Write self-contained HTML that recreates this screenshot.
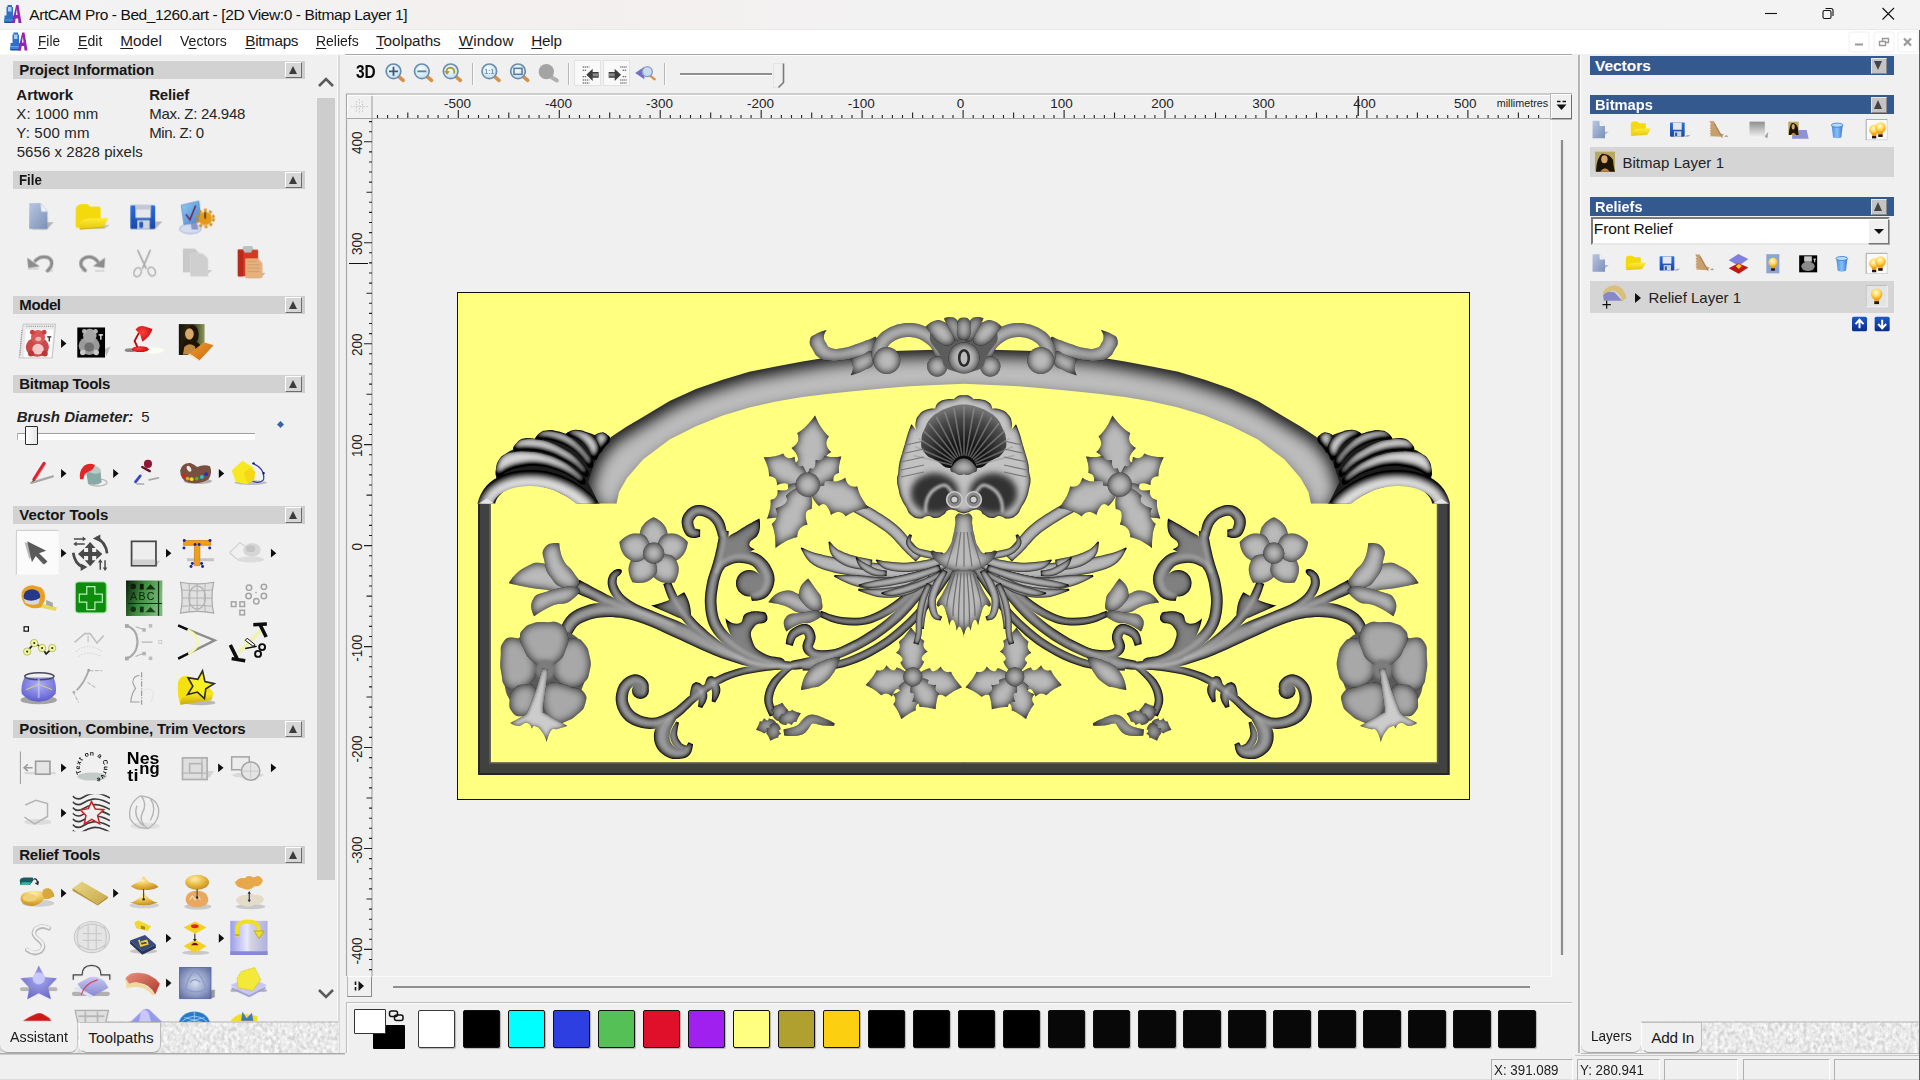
<!DOCTYPE html>
<html lang="en"><head><meta charset="utf-8"><title>ArtCAM Pro - Bed_1260.art</title>
<style>
*{box-sizing:border-box;margin:0;padding:0}
html,body{width:1920px;height:1080px;overflow:hidden;background:#f0f0f0}
body{position:relative;font-family:"Liberation Sans",sans-serif;font-size:14.5px;color:#1a1a1a}
.a{position:absolute}
.t{position:absolute;white-space:nowrap;line-height:1}
svg{position:absolute;overflow:visible}
#title{left:0;top:0;width:1920px;height:29px;background:linear-gradient(90deg,#f3f3f3 0,#f4efef 32%,#f3f2f2 45%,#f3f3f3 100%)}
#menubar{left:0;top:29px;width:1920px;height:25px;background:#fff;border-top:1px solid #e9e9e9}
.mi{position:absolute;top:34px;font-size:15px;line-height:1;color:#1b1b1b;white-space:nowrap}
.mi u{text-decoration:underline;text-underline-offset:2px;text-decoration-thickness:1px}
.hd{position:absolute;left:13px;width:292px;height:18px;background:#d2d2d2;border-right:3px solid #cdcdcd}
.hd b{position:absolute;left:6px;top:1px;font-size:14.5px;line-height:16px;font-weight:bold;color:#111;white-space:nowrap}
.hd i{position:absolute;left:272px;top:1px;width:17px;height:16px;background:#d6d6d6;border:1px solid;border-color:#fff #6d6d6d #6d6d6d #fff}
.hd i:after{content:"";position:absolute;left:3px;top:3px;border:4.5px solid transparent;border-top:0;border-bottom:8px solid #3c3c3c}
.rh{position:absolute;left:1590px;width:304px;height:19px;background:#34598e}
.rh b{position:absolute;left:4px;top:1px;font-size:15px;line-height:17px;font-weight:bold;color:#fff;white-space:nowrap}
.rh i{position:absolute;left:281px;top:1.500px;width:15.500px;height:16px;background:#c4c4c4;border:1px solid;border-color:#e8e8e8 #8a8a8a #8a8a8a #e8e8e8}
.rh i:after{content:"";position:absolute;left:2px;top:2.500px;border:4.800px solid transparent;border-top:0;border-bottom:9px solid #444}
.rh i.dn:after{border:4.800px solid transparent;border-bottom:0;border-top:9px solid #444}
.pi{position:absolute;font-size:14.5px;line-height:1;color:#222;white-space:nowrap}
.arr{position:absolute;width:0;height:0;border:3.5px solid transparent;border-right:0;border-left:4px solid #111}
.r{filter:url(#rf)}
.lobe{filter:url(#rl)}
.lip{filter:url(#rp)}
.sil{fill:#1c1c1c}
.arch{filter:url(#ra)}
.s{filter:url(#rs)}
.disc{filter:url(#rf);}
.pal{filter:url(#rpal)}
.fan{fill:url(#gfan)}
.chan{fill:none;stroke:#2c2c2c;stroke-linecap:round;filter:url(#blr)}
.bk{fill:#5c5c5c}
.vol{fill:#303030;filter:url(#blr2)}
.ridge{fill:none;stroke:#b4b4b4;stroke-width:3.200;stroke-linecap:round;filter:url(#blr1)}
.rt{filter:url(#rt)}
.bk2{fill:#5a5a5a}
.hl{fill:#fff;opacity:.2;filter:url(#blr1)}
.hib{filter:url(#rh)}
.pst{filter:url(#rpst)}

</style></head>
<body>
<!-- chrome.html -->
<div id="title" class="a"></div>
<svg class="a" style="left:2.5px;top:3px" width="19" height="22" viewBox="0 0 19 21"><path d="M4.500 1.500h4.500v2h1v8.500h2v3.500h-10.500v-3.500h2v-8.500h1z" fill="#2f6fc6"/><path d="M5 3.500h3.500v4.500h-3.500z" fill="#a8cdf2"/><path d="M1 15.500h11v3.500h-11z" fill="#3c86d8"/><path d="M1.500 18h10v1.500h-10z" fill="#1d4f9c"/>
 <path d="M9 19.500L13.200 1.500h2.300l3 18h-3l-.4-4.500h-2.400l-.9 4.500z" fill="#9326ad"/><path d="M12.900 11.500l.9-6 .8 6z" fill="#f3f3f3"/></svg>
<div class="t" style="left:29.20px;top:6.88px;font-size:15.50px;letter-spacing:-0.400px;color:#111;">ArtCAM Pro - Bed_1260.art - [2D View:0 - Bitmap Layer 1]</div>
<svg class="a" style="left:1760px;top:4px" width="150" height="22" viewBox="0 0 150 22" fill="none" stroke="#111" stroke-width="1.1">
 <path d="M5 9.500h12"/>
 <rect x="63" y="6.500" width="8" height="8" rx="1.500"/><path d="M65.500 4.500h5.500a2 2 0 0 1 2 2v5.500"/>
 <path d="M122.500 4l11.500 11.500M134 4l-11.500 11.500"/>
</svg>
<div id="menubar" class="a"></div>
<svg class="a" style="left:9px;top:31px" width="19" height="21" viewBox="0 0 19 21"><path d="M4.500 1.500h4.500v2h1v8.500h2v3.500h-10.500v-3.500h2v-8.500h1z" fill="#2f6fc6"/><path d="M5 3.500h3.500v4.500h-3.500z" fill="#a8cdf2"/><path d="M1 15.500h11v3.500h-11z" fill="#3c86d8"/><path d="M1.500 18h10v1.500h-10z" fill="#1d4f9c"/>
 <path d="M9 19.500L13.200 1.500h2.300l3 18h-3l-.4-4.500h-2.400l-.9 4.500z" fill="#9326ad"/><path d="M12.900 11.500l.9-6 .8 6z" fill="#fff"/></svg>
<div class="t" style="left:38.00px;top:33.35px;font-size:15.30px;transform:scaleX(0.8923);transform-origin:0 0;color:#1b1b1b;text-underline-offset:2px;"><u>F</u>ile</div>
<div class="t" style="left:77.70px;top:33.35px;font-size:15.30px;transform:scaleX(0.9217);transform-origin:0 0;color:#1b1b1b;text-underline-offset:2px;"><u>E</u>dit</div>
<div class="t" style="left:120.30px;top:33.35px;font-size:15.30px;letter-spacing:0.007px;color:#1b1b1b;text-underline-offset:2px;"><u>M</u>odel</div>
<div class="t" style="left:180.30px;top:33.35px;font-size:15.30px;transform:scaleX(0.9191);transform-origin:0 0;color:#1b1b1b;text-underline-offset:2px;">V<u>e</u>ctors</div>
<div class="t" style="left:245.30px;top:33.35px;font-size:15.30px;letter-spacing:-0.345px;color:#1b1b1b;text-underline-offset:2px;"><u>B</u>itmaps</div>
<div class="t" style="left:316.00px;top:33.35px;font-size:15.30px;transform:scaleX(0.9130);transform-origin:0 0;color:#1b1b1b;text-underline-offset:2px;"><u>R</u>eliefs</div>
<div class="t" style="left:376.00px;top:33.35px;font-size:15.30px;letter-spacing:-0.100px;color:#1b1b1b;text-underline-offset:2px;"><u>T</u>oolpaths</div>
<div class="t" style="left:458.70px;top:33.35px;font-size:15.30px;letter-spacing:0.076px;color:#1b1b1b;text-underline-offset:2px;"><u>W</u>indow</div>
<div class="t" style="left:531.30px;top:33.35px;font-size:15.30px;letter-spacing:-0.256px;color:#1b1b1b;text-underline-offset:2px;"><u>H</u>elp</div>
<svg class="a" style="left:1848px;top:31px" width="72" height="22" viewBox="0 0 72 22">
 <rect x="1" y="1" width="20" height="20" rx="2" fill="#fff" stroke="#f0f0f0"/><rect x="26" y="1" width="20" height="20" rx="2" fill="#fff" stroke="#f0f0f0"/><rect x="50" y="1" width="20" height="20" rx="2" fill="#fff" stroke="#f0f0f0"/>
 <path d="M7 13.500h8" stroke="#9a9a9a" stroke-width="2"/>
 <path d="M31.500 10.500h6v4h-6zM34.500 10v-2.500h6v4H38" fill="none" stroke="#9a9a9a" stroke-width="1.400"/>
 <path d="M56 7.500l7 7M63 7.500l-7 7" stroke="#9a9a9a" stroke-width="2.200"/>
</svg>

<!-- left.html -->
<div class="a" style="left:0px;top:54px;width:340px;height:1004px;background:#f0f0f0;"></div>
<div class="a" style="left:0px;top:54px;width:1920px;height:1px;background:#f7f7f7;"></div>
<div class="a" style="left:337px;top:55px;width:1px;height:998px;background:#fafafa;"></div>
<div class="a" style="left:338px;top:55px;width:2px;height:998px;background:#d9d9d9;"></div>
<div class="a" style="left:340px;top:55px;width:5px;height:998px;background:#f0f0f0;"></div>
<div class="hd" style="top:61px"><i></i></div>
<div class="t" style="left:19.30px;top:62.00px;font-size:15.00px;letter-spacing:-0.145px;font-weight:bold;color:#151515;">Project Information</div>
<div class="hd" style="top:171px"><i></i></div>
<div class="t" style="left:19.30px;top:172.00px;font-size:15.00px;transform:scaleX(0.8862);transform-origin:0 0;font-weight:bold;color:#151515;">File</div>
<div class="hd" style="top:296px"><i></i></div>
<div class="t" style="left:19.30px;top:297.00px;font-size:15.00px;letter-spacing:-0.408px;font-weight:bold;color:#151515;">Model</div>
<div class="hd" style="top:375px"><i></i></div>
<div class="t" style="left:19.30px;top:376.00px;font-size:15.00px;letter-spacing:-0.263px;font-weight:bold;color:#151515;">Bitmap Tools</div>
<div class="hd" style="top:506px"><i></i></div>
<div class="t" style="left:19.30px;top:507.00px;font-size:15.00px;letter-spacing:0.008px;font-weight:bold;color:#151515;">Vector Tools</div>
<div class="hd" style="top:720px"><i></i></div>
<div class="t" style="left:19.30px;top:721.00px;font-size:15.00px;letter-spacing:-0.122px;font-weight:bold;color:#151515;">Position, Combine, Trim Vectors</div>
<div class="hd" style="top:846px"><i></i></div>
<div class="t" style="left:19.30px;top:847.00px;font-size:15.00px;letter-spacing:-0.264px;font-weight:bold;color:#151515;">Relief Tools</div>
<div class="t" style="left:16.30px;top:87.30px;font-size:15.00px;font-weight:bold;">Artwork</div>
<div class="t" style="left:149.20px;top:87.30px;font-size:15.00px;letter-spacing:-0.170px;font-weight:bold;">Relief</div>
<div class="t" style="left:16.30px;top:106.00px;font-size:15.00px;letter-spacing:0.126px;color:#252525;">X: 1000 mm</div>
<div class="t" style="left:149.20px;top:106.00px;font-size:15.00px;letter-spacing:-0.304px;color:#252525;">Max. Z: 24.948</div>
<div class="t" style="left:16.30px;top:124.80px;font-size:15.00px;letter-spacing:0.188px;color:#252525;">Y: 500 mm</div>
<div class="t" style="left:149.20px;top:124.80px;font-size:15.00px;letter-spacing:-0.418px;color:#252525;">Min. Z: 0</div>
<div class="t" style="left:16.70px;top:143.60px;font-size:15.00px;letter-spacing:0.059px;color:#252525;">5656 x 2828 pixels</div>
<div class="t" style="left:16.70px;top:409.00px;font-size:15.00px;letter-spacing:-0.007px;font-weight:bold;font-style:italic;color:#222;">Brush Diameter:</div>
<div class="t" style="left:141.30px;top:409.00px;font-size:15.00px;letter-spacing:0.057px;color:#222;">5</div>
<div class="a" style="left:16.500px;top:432.500px;width:238px;height:7px;background:#fff;border-top:1.500px solid #a0a0a0;border-left:1px solid #b5b5b5"></div>
<div class="a" style="left:25px;top:425.500px;width:12.500px;height:19.500px;background:linear-gradient(90deg,#fff,#e6e6e6);border:1.500px solid #2b2b2b;border-radius:1px"></div>
<svg class="a" style="left:276px;top:420px" width="9" height="9" viewBox="0 0 9 9"><path d="M4.500 1L8 4.500 4.500 8 1 4.500z" fill="#3465a8"/></svg>
<div class="a" style="left:317px;top:98px;width:18px;height:782px;background:#cdcdcd;"></div>
<svg class="a" style="left:316px;top:74px" width="20" height="16" viewBox="0 0 20 16"><path d="M3 12l7-7 7 7" fill="none" stroke="#5a5a5a" stroke-width="2.600"/></svg>
<svg class="a" style="left:316px;top:986px" width="20" height="16" viewBox="0 0 20 16"><path d="M3 4l7 7 7-7" fill="none" stroke="#5a5a5a" stroke-width="2.600"/></svg>

<!-- center.html -->
<div class="a" style="left:345px;top:54px;width:1230px;height:1000px;background:#f0f0f0;"></div>
<div class="a" style="left:345px;top:54px;width:1230px;height:1px;background:#a9a9a9;"></div>
<div class="a" style="left:345px;top:55px;width:1230px;height:1px;background:#fbfbfb;"></div>
<div class="t" style="left:355.80px;top:63.04px;font-size:18.50px;transform:scaleX(0.8330);transform-origin:0 0;font-weight:bold;color:#0a0a0a;">3D</div>
<div class="a" style="left:471.5px;top:63px;width:1px;height:22px;background:#b8b8b8;"></div>
<div class="a" style="left:472.5px;top:63px;width:1px;height:22px;background:#fcfcfc;"></div>
<div class="a" style="left:567.5px;top:63px;width:1px;height:22px;background:#b8b8b8;"></div>
<div class="a" style="left:568.5px;top:63px;width:1px;height:22px;background:#fcfcfc;"></div>
<div class="a" style="left:663.5px;top:63px;width:1px;height:22px;background:#b8b8b8;"></div>
<div class="a" style="left:664.5px;top:63px;width:1px;height:22px;background:#fcfcfc;"></div>
<div class="a" style="left:574px;top:60px;width:27px;height:26px;background:#f9f9f9;border:1px solid #e2e2e2"></div>
<div class="a" style="left:603px;top:60px;width:27px;height:26px;background:#f9f9f9;border:1px solid #e2e2e2"></div>
<div class="a" style="left:680px;top:73px;width:92px;height:2px;background:#8f8f8f;"></div>
<div class="a" style="left:680px;top:75px;width:92px;height:1px;background:#fdfdfd;"></div>
<svg class="a" style="left:771px;top:62px" width="16" height="27" viewBox="0 0 16 27"><path d="M2.500 1.500h10v19l-5 5h-5z" fill="#f0f0f0" stroke="#e4e4e4" stroke-width="1"/><path d="M12.500 1.500v19l-5 5" fill="none" stroke="#7a7a7a" stroke-width="1.600"/></svg>
<svg class="a" style="left:0;top:0" width="1920" height="1080" viewBox="0 0 1920 1080">
<path d="M346.500 118.500V94h1204.500M346.500 118.500h1204.500" fill="none" stroke="#a8a8a8" stroke-width="1.200"/>
<path d="M346.500 118.500V976M372 94V976" fill="none" stroke="#a8a8a8" stroke-width="1.200"/>
<path d="M347.700 95.500h1203M347.700 95.500V118" fill="none" stroke="#fff" stroke-width="1"/>
<path d="M377.5 115.0V118M387.6 115.0V118M397.7 115.0V118M407.8 112.5V118M417.9 115.0V118M428.0 115.0V118M438.1 115.0V118M448.2 115.0V118M458.3 110.0V118M468.4 115.0V118M478.5 115.0V118M488.6 115.0V118M498.7 115.0V118M508.8 112.5V118M518.9 115.0V118M529.0 115.0V118M539.1 115.0V118M549.2 115.0V118M559.3 110.0V118M569.4 115.0V118M579.5 115.0V118M589.5 115.0V118M599.6 115.0V118M609.7 112.5V118M619.8 115.0V118M629.9 115.0V118M640.0 115.0V118M650.1 115.0V118M660.2 110.0V118M670.3 115.0V118M680.4 115.0V118M690.5 115.0V118M700.6 115.0V118M710.7 112.5V118M720.8 115.0V118M730.9 115.0V118M741.0 115.0V118M751.1 115.0V118M761.2 110.0V118M771.3 115.0V118M781.4 115.0V118M791.5 115.0V118M801.6 115.0V118M811.7 112.5V118M821.8 115.0V118M831.9 115.0V118M841.9 115.0V118M852.0 115.0V118M862.1 110.0V118M872.2 115.0V118M882.3 115.0V118M892.4 115.0V118M902.5 115.0V118M912.6 112.5V118M922.7 115.0V118M932.8 115.0V118M942.9 115.0V118M953.0 115.0V118M963.1 110.0V118M973.2 115.0V118M983.3 115.0V118M993.4 115.0V118M1003.5 115.0V118M1013.6 112.5V118M1023.7 115.0V118M1033.8 115.0V118M1043.9 115.0V118M1054.0 115.0V118M1064.1 110.0V118M1074.2 115.0V118M1084.3 115.0V118M1094.3 115.0V118M1104.4 115.0V118M1114.5 112.5V118M1124.6 115.0V118M1134.7 115.0V118M1144.8 115.0V118M1154.9 115.0V118M1165.0 110.0V118M1175.1 115.0V118M1185.2 115.0V118M1195.3 115.0V118M1205.4 115.0V118M1215.5 112.5V118M1225.6 115.0V118M1235.7 115.0V118M1245.8 115.0V118M1255.9 115.0V118M1266.0 110.0V118M1276.1 115.0V118M1286.2 115.0V118M1296.3 115.0V118M1306.4 115.0V118M1316.5 112.5V118M1326.6 115.0V118M1336.7 115.0V118M1346.7 115.0V118M1356.8 115.0V118M1366.9 110.0V118M1377.0 115.0V118M1387.1 115.0V118M1397.2 115.0V118M1407.3 115.0V118M1417.4 112.5V118M1427.5 115.0V118M1437.6 115.0V118M1447.7 115.0V118M1457.8 115.0V118M1467.9 110.0V118M1478.0 115.0V118M1488.1 115.0V118M1498.2 115.0V118M1508.3 115.0V118M1518.4 112.5V118M1528.5 115.0V118M1538.6 115.0V118" stroke="#222" stroke-width="1.100" fill="none"/>
<path d="M369.0 969.6H372M369.0 959.5H372M364.0 949.4H372M369.0 939.3H372M369.0 929.2H372M369.0 919.2H372M369.0 909.1H372M366.5 899.0H372M369.0 888.9H372M369.0 878.8H372M369.0 868.7H372M369.0 858.6H372M364.0 848.5H372M369.0 838.4H372M369.0 828.3H372M369.0 818.2H372M369.0 808.1H372M366.5 798.0H372M369.0 787.9H372M369.0 777.8H372M369.0 767.7H372M369.0 757.6H372M364.0 747.5H372M369.0 737.4H372M369.0 727.3H372M369.0 717.2H372M369.0 707.1H372M366.5 697.0H372M369.0 686.9H372M369.0 676.8H372M369.0 666.8H372M369.0 656.7H372M364.0 646.6H372M369.0 636.5H372M369.0 626.4H372M369.0 616.3H372M369.0 606.2H372M366.5 596.1H372M369.0 586.0H372M369.0 575.9H372M369.0 565.8H372M369.0 555.7H372M364.0 545.6H372M369.0 535.5H372M369.0 525.4H372M369.0 515.3H372M369.0 505.2H372M366.5 495.1H372M369.0 485.0H372M369.0 474.9H372M369.0 464.8H372M369.0 454.7H372M364.0 444.6H372M369.0 434.5H372M369.0 424.4H372M369.0 414.4H372M369.0 404.3H372M366.5 394.2H372M369.0 384.1H372M369.0 374.0H372M369.0 363.9H372M369.0 353.8H372M364.0 343.7H372M369.0 333.6H372M369.0 323.5H372M369.0 313.4H372M369.0 303.3H372M366.5 293.2H372M369.0 283.1H372M369.0 273.0H372M369.0 262.9H372M369.0 252.8H372M364.0 242.7H372M369.0 232.6H372M369.0 222.5H372M369.0 212.4H372M369.0 202.3H372M366.5 192.2H372M369.0 182.1H372M369.0 172.0H372M369.0 162.0H372M369.0 151.9H372M364.0 141.8H372M369.0 131.7H372M369.0 121.6H372" stroke="#222" stroke-width="1.100" fill="none"/>
<path d="M349 263.500h19M1358.200 96v20" stroke="#111" stroke-width="1.200" fill="none"/>
<path d="M351 106.500h17M359.500 99v15M356.500 101v11M362.500 101v11" stroke="#c9c9c9" stroke-width="1" stroke-dasharray="1.500 1.500" fill="none"/>
<text x="444.0" y="107.500" font-size="13.500" textLength="27.0" lengthAdjust="spacingAndGlyphs" fill="#222">-500</text>
<text x="544.9" y="107.500" font-size="13.500" textLength="27.0" lengthAdjust="spacingAndGlyphs" fill="#222">-400</text>
<text x="645.9" y="107.500" font-size="13.500" textLength="27.0" lengthAdjust="spacingAndGlyphs" fill="#222">-300</text>
<text x="746.9" y="107.500" font-size="13.500" textLength="27.0" lengthAdjust="spacingAndGlyphs" fill="#222">-200</text>
<text x="847.8" y="107.500" font-size="13.500" textLength="27.0" lengthAdjust="spacingAndGlyphs" fill="#222">-100</text>
<text x="956.8" y="107.500" font-size="13.500" textLength="7.5" lengthAdjust="spacingAndGlyphs" fill="#222">0</text>
<text x="1050.3" y="107.500" font-size="13.500" textLength="22.5" lengthAdjust="spacingAndGlyphs" fill="#222">100</text>
<text x="1151.3" y="107.500" font-size="13.500" textLength="22.5" lengthAdjust="spacingAndGlyphs" fill="#222">200</text>
<text x="1252.2" y="107.500" font-size="13.500" textLength="22.5" lengthAdjust="spacingAndGlyphs" fill="#222">300</text>
<text x="1353.2" y="107.500" font-size="13.500" textLength="22.5" lengthAdjust="spacingAndGlyphs" fill="#222">400</text>
<text x="1454.1" y="107.500" font-size="13.500" textLength="22.5" lengthAdjust="spacingAndGlyphs" fill="#222">500</text>
<text transform="translate(362.200 949.4) rotate(-90)" x="-15.1" y="0" font-size="15" textLength="27.0" lengthAdjust="spacingAndGlyphs" fill="#222">-400</text>
<text transform="translate(362.200 848.5) rotate(-90)" x="-15.1" y="0" font-size="15" textLength="27.0" lengthAdjust="spacingAndGlyphs" fill="#222">-300</text>
<text transform="translate(362.200 747.5) rotate(-90)" x="-15.1" y="0" font-size="15" textLength="27.0" lengthAdjust="spacingAndGlyphs" fill="#222">-200</text>
<text transform="translate(362.200 646.6) rotate(-90)" x="-15.1" y="0" font-size="15" textLength="27.0" lengthAdjust="spacingAndGlyphs" fill="#222">-100</text>
<text transform="translate(362.200 545.6) rotate(-90)" x="-4.8" y="0" font-size="15" textLength="7.5" lengthAdjust="spacingAndGlyphs" fill="#222">0</text>
<text transform="translate(362.200 444.6) rotate(-90)" x="-12.3" y="0" font-size="15" textLength="22.5" lengthAdjust="spacingAndGlyphs" fill="#222">100</text>
<text transform="translate(362.200 343.7) rotate(-90)" x="-12.3" y="0" font-size="15" textLength="22.5" lengthAdjust="spacingAndGlyphs" fill="#222">200</text>
<text transform="translate(362.200 242.7) rotate(-90)" x="-12.3" y="0" font-size="15" textLength="22.5" lengthAdjust="spacingAndGlyphs" fill="#222">300</text>
<text transform="translate(362.200 141.8) rotate(-90)" x="-12.3" y="0" font-size="15" textLength="22.5" lengthAdjust="spacingAndGlyphs" fill="#222">400</text>
<text x="1496.700" y="107" font-size="10.500" textLength="51.500" lengthAdjust="spacingAndGlyphs" fill="#222">millimetres</text>
<path d="M373 976.500h1178.500V119" fill="none" stroke="#fbfbfb" stroke-width="1.200"/>
<path d="M393 987h1137" stroke="#8e8e8e" stroke-width="2.200" fill="none"/>
<path d="M1562 140v815" stroke="#8e8e8e" stroke-width="2.200" fill="none"/>
<path d="M346.500 1053V1002.500h1226.500" stroke="#c0c0c0" stroke-width="1.200" fill="none"/><path d="M347.700 1053V1003.700h1225" stroke="#fcfcfc" stroke-width="1" fill="none"/>
</svg>
<div class="a" style="left:1551px;top:94px;width:21px;height:25px;background:#f0f0f0;border:1px solid;border-color:#fff #6e6e6e #6e6e6e #fff;box-shadow:0 0 0 1px #b5b5b5"></div>
<svg class="a" style="left:1554px;top:99px" width="15" height="14" viewBox="0 0 15 14"><path d="M3 2.500h3.500M8.500 2.500h3.500" stroke="#111" stroke-width="1.600"/><path d="M2.500 5.500h10l-5 5.500z" fill="#111"/></svg>
<div class="a" style="left:347px;top:976px;width:25px;height:21px;background:#f0f0f0;border:1px solid;border-color:#fff #8a8a8a #8a8a8a #b5b5b5"></div>
<svg class="a" style="left:352px;top:979px" width="15" height="14" viewBox="0 0 15 14"><path d="M3.500 2.500v3.500M3.500 8v3.500" stroke="#111" stroke-width="1.600"/><path d="M6.500 2l5.500 5-5.500 5z" fill="#111"/></svg>
<div class="a" style="left:457px;top:292px;width:1013px;height:508px;background:#ffff80;border:1.500px solid #111"></div>
<div class="a" style="left:417.5px;top:1010px;width:37.500px;height:38px;background:#ffffff;border:1px solid #3a3a3a;border-radius:2px;box-shadow:1px 1px 1px rgba(0,0,0,.25)"></div>
<div class="a" style="left:462.5px;top:1010px;width:37.500px;height:38px;background:#000000;border:1px solid #111;border-radius:2px;box-shadow:1px 1px 1px rgba(0,0,0,.25)"></div>
<div class="a" style="left:507.6px;top:1010px;width:37.500px;height:38px;background:#00ffff;border:1px solid #111;border-radius:2px;box-shadow:1px 1px 1px rgba(0,0,0,.25)"></div>
<div class="a" style="left:552.6px;top:1010px;width:37.500px;height:38px;background:#2d3fe0;border:1px solid #111;border-radius:2px;box-shadow:1px 1px 1px rgba(0,0,0,.25)"></div>
<div class="a" style="left:597.6px;top:1010px;width:37.500px;height:38px;background:#55c055;border:1px solid #111;border-radius:2px;box-shadow:1px 1px 1px rgba(0,0,0,.25)"></div>
<div class="a" style="left:642.6px;top:1010px;width:37.500px;height:38px;background:#e0102a;border:1px solid #111;border-radius:2px;box-shadow:1px 1px 1px rgba(0,0,0,.25)"></div>
<div class="a" style="left:687.7px;top:1010px;width:37.500px;height:38px;background:#a020f0;border:1px solid #111;border-radius:2px;box-shadow:1px 1px 1px rgba(0,0,0,.25)"></div>
<div class="a" style="left:732.7px;top:1010px;width:37.500px;height:38px;background:#ffff80;border:1px solid #111;border-radius:2px;box-shadow:1px 1px 1px rgba(0,0,0,.25)"></div>
<div class="a" style="left:777.7px;top:1010px;width:37.500px;height:38px;background:#b0a030;border:1px solid #111;border-radius:2px;box-shadow:1px 1px 1px rgba(0,0,0,.25)"></div>
<div class="a" style="left:822.8px;top:1010px;width:37.500px;height:38px;background:#fcd010;border:1px solid #111;border-radius:2px;box-shadow:1px 1px 1px rgba(0,0,0,.25)"></div>
<div class="a" style="left:867.8px;top:1010px;width:37.500px;height:38px;background:#000000;border:1px solid #111;border-radius:2px;box-shadow:1px 1px 1px rgba(0,0,0,.25)"></div>
<div class="a" style="left:912.8px;top:1010px;width:37.500px;height:38px;background:#000000;border:1px solid #111;border-radius:2px;box-shadow:1px 1px 1px rgba(0,0,0,.25)"></div>
<div class="a" style="left:957.9px;top:1010px;width:37.500px;height:38px;background:#000000;border:1px solid #111;border-radius:2px;box-shadow:1px 1px 1px rgba(0,0,0,.25)"></div>
<div class="a" style="left:1002.9px;top:1010px;width:37.500px;height:38px;background:#000000;border:1px solid #111;border-radius:2px;box-shadow:1px 1px 1px rgba(0,0,0,.25)"></div>
<div class="a" style="left:1047.9px;top:1010px;width:37.500px;height:38px;background:#080808;border:1px solid #111;border-radius:2px;box-shadow:1px 1px 1px rgba(0,0,0,.25)"></div>
<div class="a" style="left:1092.9px;top:1010px;width:37.500px;height:38px;background:#080808;border:1px solid #111;border-radius:2px;box-shadow:1px 1px 1px rgba(0,0,0,.25)"></div>
<div class="a" style="left:1138.0px;top:1010px;width:37.500px;height:38px;background:#080808;border:1px solid #111;border-radius:2px;box-shadow:1px 1px 1px rgba(0,0,0,.25)"></div>
<div class="a" style="left:1183.0px;top:1010px;width:37.500px;height:38px;background:#080808;border:1px solid #111;border-radius:2px;box-shadow:1px 1px 1px rgba(0,0,0,.25)"></div>
<div class="a" style="left:1228.0px;top:1010px;width:37.500px;height:38px;background:#080808;border:1px solid #111;border-radius:2px;box-shadow:1px 1px 1px rgba(0,0,0,.25)"></div>
<div class="a" style="left:1273.1px;top:1010px;width:37.500px;height:38px;background:#080808;border:1px solid #111;border-radius:2px;box-shadow:1px 1px 1px rgba(0,0,0,.25)"></div>
<div class="a" style="left:1318.1px;top:1010px;width:37.500px;height:38px;background:#080808;border:1px solid #111;border-radius:2px;box-shadow:1px 1px 1px rgba(0,0,0,.25)"></div>
<div class="a" style="left:1363.1px;top:1010px;width:37.500px;height:38px;background:#080808;border:1px solid #111;border-radius:2px;box-shadow:1px 1px 1px rgba(0,0,0,.25)"></div>
<div class="a" style="left:1408.2px;top:1010px;width:37.500px;height:38px;background:#080808;border:1px solid #111;border-radius:2px;box-shadow:1px 1px 1px rgba(0,0,0,.25)"></div>
<div class="a" style="left:1453.2px;top:1010px;width:37.500px;height:38px;background:#080808;border:1px solid #111;border-radius:2px;box-shadow:1px 1px 1px rgba(0,0,0,.25)"></div>
<div class="a" style="left:1498.2px;top:1010px;width:37.500px;height:38px;background:#080808;border:1px solid #111;border-radius:2px;box-shadow:1px 1px 1px rgba(0,0,0,.25)"></div>
<div class="a" style="left:372.5px;top:1025px;width:32px;height:24px;background:#000;border-radius:1px"></div>
<div class="a" style="left:353.5px;top:1009px;width:32px;height:24.5px;background:#fff;border:1.500px solid #333;border-radius:1px"></div>
<svg class="a" style="left:388px;top:1009px" width="17" height="14" viewBox="0 0 17 14" fill="none" stroke="#111" stroke-width="1.500"><rect x="1.500" y="2" width="8" height="5.500" rx="2"/><rect x="6.500" y="6" width="8.500" height="5.500" rx="2"/></svg>

<!-- ornament.html -->
<svg class="a" style="left:0;top:0" width="1920" height="1080" viewBox="0 0 1920 1080">
<defs>
<filter id="rf" x="-10%" y="-10%" width="120%" height="120%" color-interpolation-filters="sRGB">
 <feGaussianBlur in="SourceAlpha" stdDeviation="0.7" result="b1"/>
 <feGaussianBlur in="SourceAlpha" stdDeviation="4.2" result="b2"/>
 <feComposite operator="arithmetic" in="b1" in2="b2" k1="0" k2="0.30" k3="0.68" k4="-0.25"/>
 <feColorMatrix type="matrix" values="0 0 0 1 0  0 0 0 1 0  0 0 0 1 0  0 0 0 0 1"/>
 <feComposite operator="in" in2="SourceAlpha"/>
</filter>
<filter id="rl" x="-10%" y="-10%" width="120%" height="120%" color-interpolation-filters="sRGB">
 <feGaussianBlur in="SourceAlpha" stdDeviation="3.2" result="b"/>
 <feOffset in="b" dx="-1" dy="-2"/>
 <feColorMatrix type="matrix" values="0 0 0 1.5 -0.66  0 0 0 1.5 -0.66  0 0 0 1.5 -0.66  0 0 0 0 1"/>
 <feComposite operator="in" in2="SourceAlpha"/>
</filter>
<filter id="ra" x="-5%" y="-10%" width="110%" height="130%" color-interpolation-filters="sRGB">
 <feGaussianBlur in="SourceAlpha" stdDeviation="7.5" result="b"/>
 <feOffset in="b" dx="2.5" dy="6.5"/>
 <feColorMatrix type="matrix" values="0 0 0 0.66 0.08  0 0 0 0.66 0.08  0 0 0 0.66 0.08  0 0 0 0 1"/>
 <feComposite operator="in" in2="SourceAlpha"/>
</filter>
<filter id="rp" x="-10%" y="-20%" width="120%" height="140%" color-interpolation-filters="sRGB">
 <feGaussianBlur in="SourceAlpha" stdDeviation="4" result="b"/>
 <feOffset in="b" dx="0" dy="3.5"/>
 <feColorMatrix type="matrix" values="0 0 0 1.2 -0.3  0 0 0 1.2 -0.3  0 0 0 1.2 -0.3  0 0 0 0 1"/>
 <feComposite operator="in" in2="SourceAlpha"/>
</filter>
<filter id="rs" x="-10%" y="-10%" width="120%" height="120%" color-interpolation-filters="sRGB">
 <feGaussianBlur in="SourceAlpha" stdDeviation="0.8" result="b1"/>
 <feGaussianBlur in="SourceAlpha" stdDeviation="3.0" result="b2"/>
 <feComposite operator="arithmetic" in="b1" in2="b2" k1="0" k2="0.35" k3="0.60" k4="-0.45"/>
 <feColorMatrix type="matrix" values="0 0 0 1 0  0 0 0 1 0  0 0 0 1 0  0 0 0 0 1"/>
 <feComposite operator="in" in2="SourceAlpha"/>
</filter>
<filter id="rpal" x="-10%" y="-10%" width="120%" height="120%" color-interpolation-filters="sRGB">
 <feGaussianBlur in="SourceAlpha" stdDeviation="1" result="b1"/>
 <feGaussianBlur in="SourceAlpha" stdDeviation="3" result="b2"/>
 <feComposite operator="arithmetic" in="b1" in2="b2" k1="0" k2="0.4" k3="0.78" k4="-0.42"/>
 <feColorMatrix type="matrix" values="0 0 0 1 0  0 0 0 1 0  0 0 0 1 0  0 0 0 0 1"/>
 <feComposite operator="in" in2="SourceAlpha"/>
</filter>
<filter id="blr2" x="-30%" y="-30%" width="160%" height="160%"><feGaussianBlur stdDeviation="3.2"/></filter>
<filter id="blr1" x="-30%" y="-30%" width="160%" height="160%"><feGaussianBlur stdDeviation="0.9"/></filter>
<filter id="blr" x="-20%" y="-20%" width="140%" height="140%"><feGaussianBlur stdDeviation="1.8"/></filter>
<radialGradient id="gfan" gradientUnits="userSpaceOnUse" cx="964" cy="468" r="62"><stop offset="0" stop-color="#000"/><stop offset=".4" stop-color="#161616"/><stop offset=".8" stop-color="#4a4a4a"/><stop offset="1" stop-color="#777"/></radialGradient>
<filter id="rt" x="-10%" y="-20%" width="120%" height="140%" color-interpolation-filters="sRGB">
 <feGaussianBlur in="SourceAlpha" stdDeviation="0.8" result="b1"/>
 <feGaussianBlur in="SourceAlpha" stdDeviation="2.2" result="b2"/>
 <feComposite operator="arithmetic" in="b1" in2="b2" k1="0" k2="0.4" k3="0.72" k4="-0.40"/>
 <feColorMatrix type="matrix" values="0 0 0 1 0  0 0 0 1 0  0 0 0 1 0  0 0 0 0 1"/>
 <feComposite operator="in" in2="SourceAlpha"/>
</filter>
<filter id="rh" x="-10%" y="-10%" width="120%" height="120%" color-interpolation-filters="sRGB">
 <feGaussianBlur in="SourceAlpha" stdDeviation="0.7" result="b1"/>
 <feGaussianBlur in="SourceAlpha" stdDeviation="5" result="b2"/>
 <feComposite operator="arithmetic" in="b1" in2="b2" k1="0" k2="0.25" k3="0.58" k4="-0.17"/>
 <feColorMatrix type="matrix" values="0 0 0 1 0  0 0 0 1 0  0 0 0 1 0  0 0 0 0 1"/>
 <feComposite operator="in" in2="SourceAlpha"/>
</filter>
<filter id="rpst" x="-10%" y="-10%" width="120%" height="120%" color-interpolation-filters="sRGB">
 <feGaussianBlur in="SourceAlpha" stdDeviation="0.7" result="b1"/>
 <feGaussianBlur in="SourceAlpha" stdDeviation="2" result="b2"/>
 <feComposite operator="arithmetic" in="b1" in2="b2" k1="0" k2="0.3" k3="0.6" k4="-0.1"/>
 <feColorMatrix type="matrix" values="0 0 0 1 0  0 0 0 1 0  0 0 0 1 0  0 0 0 0 1"/>
 <feComposite operator="in" in2="SourceAlpha"/>
</filter>
<linearGradient id="fv" x1="0" x2="1" y1="0" y2="0"><stop offset="0" stop-color="#2e2e2e"/><stop offset="1" stop-color="#545454"/></linearGradient>
<linearGradient id="fh" x1="0" x2="0" y1="0" y2="1"><stop offset="0" stop-color="#4c4c4c"/><stop offset="1" stop-color="#262626"/></linearGradient>
<clipPath id="cfan"><rect x="450" y="290" width="514" height="213.700"/></clipPath>
<g id="half">
<path d="M484.300 503.700V768.700H964" fill="none" stroke="#414141" stroke-width="12.600"/>
<path d="M479 503.700V774H964" fill="none" stroke="#262626" stroke-width="2"/>
<path d="M489.800 503.700V763.200H964" fill="none" stroke="#565656" stroke-width="1.600"/>
<g clip-path="url(#cfan)">
<path class="sil" d="M478.8 504.4C478.8 504.4 479 500.7 480.6 497.5C483.4 492.1 483.6 492.1 487.5 487.5C491.1 483.3 493 484.9 495.6 480C497.4 476.7 495 476.2 495.6 472.5C496.6 466.1 495.5 465.5 498.8 460C501.7 455 502.9 455.9 507.5 452.5C510.1 450.6 513.1 449.4 513.1 449.4C513.1 449.4 514.2 444.7 517.5 441.9C521.1 438.8 521.6 439 526.2 438.1C530.6 437.4 535 438.8 535 438.8C535 438.8 536.8 434.9 540 432.8C543.3 430.5 543.6 430.6 547.5 430.2C552.5 429.8 552.6 430.3 557.5 431.2C562 432.1 566.2 433.8 566.2 433.8C566.2 433.8 568.4 431.5 571.2 430.6C574.9 429.5 575 429.7 578.8 430C582.6 430.3 582.6 430.7 586.2 431.9C590.7 433.2 595 435 595 435C595 435 597.3 433.3 600 432.8C602.5 432.3 602.8 431.9 605 433.1C608.5 435.1 610.6 438.8 610.6 438.8C610.6 438.8 597.3 448.5 595 462.5C591.6 483.3 600 504.4 600 504.4C600 504.4 578.8 504.4 578.8 504.4C578.8 504.4 571.7 499 563.8 495C554.7 490.5 554.8 489.9 545 487.5C535.9 485.2 535.7 485.6 526.2 485.6C518.7 485.6 518.3 484.9 511.2 487.5C504.5 490 504.4 490.4 499.4 495.6C496 499.1 495 504.4 495 504.4C495 504.4 478.8 504.4 478.8 504.4Z"/>
<path class="arch" d="M592 470L597 455L611 437L626 427L643 417L669.6 401L696 389L722.7 379.7L749.3 371.7L775.9 366.4L802.5 361.6L830 357L893 351L926 350L964 349L1000 349L1000 383.7L964 383.7L935.3 385L908.8 386.3L882.2 388.5L855.6 390.9L829 393.8L802.5 397L775.9 401.5L749.3 407.6L722.7 415.6L696 426.2L669.6 439.5L643 459.4L627 478L619 492L616.5 503.7L599 503.7L588 482Z"/>
<path class="lobe" d="M595.6 436.2C596.2 433.7 597.5 434.1 600 433.5C602.4 432.9 602.8 432.8 605 434C608.1 435.7 610.2 435.5 610 439C609.8 443.5 607.5 443.5 604.4 447.5C602.2 450.3 601.7 453.8 599.4 452.5C597.1 451.2 598.5 448.1 597.5 443.8C596.6 440 594.8 439.7 595.6 436.2Z"/>
<path class="lobe" d="M566.9 435C565.1 432.7 568.5 432.2 571.2 431.2C574.8 430 575 430.4 578.8 430.9C582.6 431.4 582.7 431.5 586.2 433.1C590.3 435 590.7 434.6 593.8 437.8C597.8 441.9 598.4 441.9 600 447.5C601.1 451.2 600.5 451.6 598.8 455C597.2 458.2 596.8 461.7 593.8 460C590 457.9 591.5 453.8 587.5 448.8C583.3 443.4 583.2 443.2 577.5 439.4C572.7 436.2 569 437.7 566.9 435Z"/>
<path class="lobe" d="M535.6 439.8C534.4 437.8 536.9 435.7 540 433.5C543.2 431.2 543.6 431.5 547.5 431.2C552.5 431 552.6 431.3 557.5 432.5C563.3 433.9 563.5 433.6 568.8 436.5C574.9 439.9 574.8 440.2 580 445C584.9 449.5 584.8 449.7 588.8 455C591.4 458.5 592.7 458.2 593.1 462.5C593.4 465.7 593 469.2 590 468.1C586.5 466.9 586.7 463 582.5 458.8C576.7 452.9 576.9 452.5 570 448.1C563.1 443.8 562.8 444.1 555 441.5C549.6 439.7 549.5 439.9 543.8 439.4C539.7 439 536.9 441.7 535.6 439.8Z"/>
<path class="lobe" d="M513.8 450.2C512.1 447.6 514.3 445.3 517.5 442.5C521 439.4 521.6 439.9 526.2 439.2C531.8 438.4 531.9 438.8 537.5 439.5C543.8 440.3 544 440.1 550 442.2C557.2 444.9 557.1 445.2 563.8 449C570.3 452.8 570.5 452.5 576.2 457.5C581.3 461.9 580.8 462.3 585 467.5C587.1 470.1 588.5 470 588.8 473.1C588.9 475.6 587.9 477.8 585.6 476.9C581.5 475.2 581.4 471.9 576.2 468.1C569.8 463.3 569.7 463.4 562.5 459.8C555.3 456.1 555.3 455.8 547.5 453.5C540.2 451.3 540.1 451.7 532.5 450.8C527.5 450.2 527.5 450.6 522.5 450.5C518.1 450.4 515.4 452.9 513.8 450.2Z"/>
<path class="lobe" d="M496.2 475.6C495.5 471.7 495.4 470 497.2 465C499.3 459.7 499.2 459 503.8 455.6C508.5 452.1 509.1 452.7 515 451.9C522.4 450.8 522.5 451.2 530 451.8C537.6 452.4 537.7 452.3 545 454.2C552.7 456.3 552.8 456.2 560 459.8C567.3 463.4 567.2 463.6 573.8 468.5C578.5 472 578.5 472.6 582.5 476.5C584.2 478.2 585.4 477.8 585.6 480.2C585.8 482.8 585.7 485.2 583.1 484.8C578.8 483.9 578.1 480.8 572.5 477.8C565.2 473.7 565.3 473.4 557.5 470.6C549 467.6 549 467.2 540 466.2C531.3 465.3 531.1 465.5 522.5 466.9C514.8 468.1 514.7 468.4 507.5 471.5C503 473.4 503.1 475.5 499.4 476.9C497.8 477.5 496.5 477.3 496.2 475.6Z"/>
<path class="lip" d="M489.4 514.5L489.8 513.4L490.2 511.8L490.7 510.1L491.2 508.2L491.8 506.4L492.4 504.6L493 503.1L493.5 501.9L494.1 500.9L494.7 499.8L495.3 498.9L496 498L496.7 497.2L497.4 496.5L498.1 495.7L498.9 495L499.7 494.3L500.6 493.7L501.5 493.1L502.4 492.5L503.4 492L504.5 491.4L505.7 490.9L506.9 490.3L508.2 489.8L509.6 489.3L511 488.8L512.5 488.3L514 487.9L515.5 487.5L517.1 487.2L518.8 486.9L520.6 486.7L522.5 486.4L524.4 486.3L526.4 486.2L528.5 486.1L530.5 486.1L532.5 486.1L534.5 486.2L536.5 486.4L538.4 486.6L540.4 486.9L542.3 487.2L544.3 487.6L546.2 488L548.1 488.6L550 489.1L552 489.8L554 490.6L556.1 491.4L558.2 492.3L560.2 493.3L562.2 494.3L564.1 495.3L565.9 496.3L567.5 497.2L568.9 498.2L570.4 499.2L571.7 500.2L573.1 501.3L574.4 502.3L575.7 503.4L576.9 504.5L577.9 505.5L579 506.6L580.2 507.8L581.3 509.1L582.3 510.3L583.3 511.4L584.1 512.5L584.8 513.3L597.7 501.7L597.1 501.1L596.3 500.2L595.3 499L594.1 497.7L592.7 496.2L591.3 494.7L589.7 493.2L588.1 491.8L586.6 490.5L585.1 489.3L583.5 488L581.9 486.7L580.1 485.4L578.2 484.2L576.2 482.9L574.1 481.7L572 480.6L569.7 479.4L567.4 478.3L565 477.2L562.5 476.1L560 475.1L557.5 474.2L555 473.4L552.5 472.7L550 472.1L547.6 471.5L545.2 471.1L542.7 470.7L540.3 470.4L537.9 470.2L535.5 470L533 469.9L530.5 469.9L528.1 469.9L525.6 470.1L523.2 470.2L520.8 470.5L518.5 470.8L516.2 471.1L514 471.5L511.9 472L509.8 472.5L507.8 473.1L505.9 473.8L504 474.5L502.3 475.2L500.6 475.9L498.9 476.7L497.3 477.5L495.8 478.4L494.2 479.3L492.8 480.3L491.3 481.4L489.9 482.6L488.6 483.8L487.3 485L486.1 486.3L485 487.7L483.9 489.1L482.9 490.6L482 492.2L481.1 493.8L480.2 495.6L479.4 497.6L478.6 499.8L477.9 502L477.3 504.2L476.7 506.2L476.3 508L475.9 509.4L475.6 510.5Z"/>
<path d="M478.500 503.700l8-5 8.500 5z" fill="#e4e4e4"/>
</g>
<g class="s">
<path class="" d="M573.6 591.9L575.7 592.8L578.5 594L581.8 595.5L585.4 597L589.2 598.6L592.7 600.2L596 601.6L599.3 603L602.7 604.5L606.3 606.1L610.3 607.7L614.6 609.3L619.5 611L624.6 612.7L630 614.4L635.5 616.2L641.1 618L646.5 620L652 622.1L657.5 624.3L663.1 626.6L668.7 629L674.5 631.6L680.5 634.4L686.7 637.6L693.3 641.1L700.2 644.9L707.1 648.7L713.9 652.3L720.5 655.4L726.8 658.1L732.7 660.6L738.6 662.8L744.4 664.8L750.3 666.5L756.3 668L762.8 669L769.7 669.6L776.5 669.9L782.7 670.1L787.9 670.2L791.6 670.3L792.1 663L788.3 662.7L783.1 662.3L777 661.8L770.5 661.1L764.1 660.2L758.3 659L752.9 657.5L747.5 655.7L742.1 653.6L736.6 651.3L730.9 648.8L725 646L718.8 642.9L712.2 639.3L705.5 635.5L698.6 631.6L691.8 627.8L685.3 624.5L679 621.6L673 619L667.1 616.7L661.4 614.4L655.7 612.3L650.1 610.2L644.4 608.2L638.7 606.4L633.1 604.6L627.8 602.9L622.8 601.3L618.3 599.6L614.3 598L610.6 596.3L607.3 594.7L604.1 593L600.9 591.3L597.7 589.7L594.3 587.9L590.8 586L587.3 584.1L584.2 582.4L581.5 580.9L579.5 579.8Z"/>
<path class="" d="M568.7 639.7L569.9 637.7L571.4 634.9L573.1 631.9L574.9 629L576.8 626.6L578.5 624.9L580.6 623.6L583.3 622.2L586.3 620.9L589.5 619.8L593 618.8L596.5 618.1L600.1 617.5L604 617.2L608.1 617L612.3 617.1L616.6 617.4L620.7 617.8L624.7 618.4L628.6 619.3L632.6 620.3L636.7 621.5L641.2 623.1L646 624.8L651.1 626.8L656.5 629.1L662.2 631.7L668.1 634.4L674.2 637.2L680.4 640L686.7 642.9L693.3 646L700.1 649.2L707.1 652.3L714 655.3L721 657.9L727.8 660.3L734.8 662.6L741.7 664.7L748.6 666.6L755.4 668.1L762 669.3L768.7 669.9L775.7 670.1L782.4 669.9L788.5 669.6L793.5 669.3L797.2 669.2L797.1 663.1L793.4 663L788.3 663L782.3 663L775.9 662.8L769.4 662.3L763.2 661.4L757.2 660L750.8 658.3L744.3 656.2L737.7 653.9L731.1 651.4L724.5 648.8L718 646L711.5 642.8L704.8 639.5L698.2 636.1L691.7 632.7L685.4 629.5L679.3 626.5L673.3 623.5L667.4 620.6L661.7 617.8L656.1 615.2L650.7 612.9L645.7 610.8L641.1 609L636.5 607.4L632.1 606L627.5 604.8L622.8 603.9L618 603.2L613.1 602.8L608.2 602.6L603.3 602.6L598.5 603L593.9 603.6L589.4 604.6L585.1 605.9L580.8 607.4L576.8 609.3L573 611.6L569.3 614.3L566.1 617.8L563.5 621.8L561.5 625.8L559.9 629.3L558.8 632.2L557.9 634.1Z"/>
<path class="" d="M663.2 583.9L663.8 585.6L664.6 587.9L665.5 590.8L666.7 594L668 597.3L669.5 600.5L671.2 603.6L673 606.7L675 609.9L677.1 613.1L679.4 616.3L681.8 619.3L684.3 622.2L686.8 625L689.5 627.7L692.4 630.3L695.4 633L698.5 635.6L701.9 638.3L705.4 641.1L709.2 643.9L713 646.6L716.8 649.1L720.7 651.4L724.7 653.6L729 655.7L733.2 657.5L737.1 659.1L740.4 660.5L742.7 661.5L745.3 655.9L743 654.7L739.9 653.1L736.2 651.2L732.3 649.1L728.4 646.9L724.8 644.7L721.4 642.3L717.9 639.7L714.4 637L710.9 634.2L707.6 631.4L704.5 628.6L701.6 626L698.9 623.4L696.3 620.9L693.9 618.3L691.6 615.7L689.3 613.1L687.1 610.3L685 607.5L683 604.6L681 601.7L679.2 598.9L677.6 596.2L676.2 593.5L674.8 590.6L673.5 587.7L672.3 585L671.4 582.7L670.6 581Z"/>
<path class="" d="M618.8 570.6L618.2 570.7L617.1 570.7L615.7 570.8L614 571.2L612.1 572.1L610.5 573.6L609.4 575.3L608.6 577.1L608 579.1L607.7 581.3L607.7 583.7L608 586.1L608.7 588.5L609.6 590.8L610.8 593.2L612.2 595.6L613.9 597.9L615.7 600.1L617.6 602.1L619.8 604.1L622 605.9L624.5 607.7L627.2 609.5L630.2 611.2L633.5 612.8L637.1 614.4L640.9 615.9L644.6 617.3L648.4 618.7L652 620.1L655.8 621.6L659.9 623.3L664 625L667.9 626.5L671.2 627.9L673.5 628.8L676.3 622.7L674 621.5L670.9 619.9L667.2 618.1L663.2 616L659.1 614.1L655.3 612.2L651.7 610.6L647.9 609L644.2 607.5L640.7 606L637.4 604.6L634.6 603.1L632 601.6L629.7 600.1L627.6 598.6L625.7 597.1L624 595.6L622.5 594L621.2 592.3L620 590.6L618.9 588.8L618.1 587L617.4 585.4L616.9 584L616.7 582.9L616.6 581.8L616.7 580.6L616.8 579.5L617 578.6L617.1 577.9L617 577.6L617.3 577.1L617.9 576.4L618.8 575.7L619.7 575.1L620.4 574.6Z"/>
<path class="r" d="M616.4 577.1C619.1 574.5 621.3 574.5 621.8 571.8C622.2 569.4 620.1 568.6 617.8 569.1C614.2 570 612.9 570.6 611.1 574.5C609.8 577.5 610.7 580.2 612.5 581.1C614.2 582 614.5 579.1 616.4 577.1Z"/>
<path class="r" d="M651 605.5C651 605.5 659.2 604.1 666.9 601C675.9 597.4 684.2 592.3 684.2 592.3C684.2 592.3 689.2 599.5 690.3 607.7C691.3 614.3 691.6 617.4 688.2 621C685.3 624 684.1 619.9 680.2 618.3C673.5 615.6 673.6 615.4 666.9 612.5C659 609 651 605.5 651 605.5Z"/>
<path class="" d="M719.5 530.2L719.3 531.6L719.1 533.5L718.8 535.7L718.5 538.1L718.1 540.6L717.6 543.1L717.1 545.7L716.5 548.6L715.8 551.6L715.1 554.7L714.3 557.9L713.4 561.1L712.5 564.3L711.4 567.7L710.2 571.2L709 574.9L707.8 578.8L707 582.6L706.3 586.3L705.7 590L705.2 593.8L704.9 597.6L704.8 601.5L705 605.4L705.3 609.2L705.8 613.1L706.6 617.1L707.6 621.1L709.1 625.2L711 629.1L713.5 632.9L716.3 636.5L719.4 640L722.8 643.3L726.4 646.4L730 649.2L733.8 651.9L737.7 654.4L741.9 656.8L746.2 659L750.8 660.9L755.6 662.7L760.8 664.4L766.3 665.9L772.1 667.2L777.8 668.2L783.5 669L788.9 669.6L794.3 669.6L799.7 669.2L804.9 668.6L809.6 667.9L813.4 667.2L816.2 666.8L815.4 660.1L812.5 660.4L808.6 660.9L804 661.4L799.1 661.8L794.2 661.9L789.5 661.6L784.7 660.9L779.5 659.9L774.1 658.5L768.7 657L763.7 655.3L759 653.6L754.8 651.7L750.8 649.8L747 647.7L743.4 645.4L740 643L736.7 640.5L733.6 637.9L730.6 635.1L727.7 632.2L725.1 629.2L722.9 626.3L721.2 623.4L719.8 620.6L718.7 617.7L717.9 614.5L717.3 611.3L716.9 607.9L716.6 604.6L716.4 601.4L716.5 598.2L716.8 595L717.2 591.7L717.8 588.3L718.3 584.9L719 581.6L719.9 578.2L721 574.7L722.1 571.1L723.1 567.5L724.1 563.9L724.9 560.5L725.6 557.1L726.3 553.8L726.9 550.6L727.4 547.6L727.9 544.7L728.2 541.9L728.4 539.1L728.5 536.5L728.6 534.2L728.6 532.3L728.6 531Z"/>
<path class="" d="M720.2 575.2L721 573.9L721.9 572.2L722.9 570.5L724 568.9L725 567.6L726.1 566.8L727.7 566L729.8 565L732.1 564.1L734.5 563.3L736.8 562.9L739 562.7L741.4 562.9L744.2 563.2L747 563.8L749.6 564.6L751.8 565.6L753.4 566.6L754.8 568L756.4 569.9L757.9 572.2L759.2 574.5L760 576.7L760.5 578.2L760.5 579.4L760.3 581L759.8 582.7L759 584.5L758.2 586.1L757.7 587.1L757.4 587.7L756.4 588.6L754.7 589.6L752.8 590.6L750.8 591.4L749.4 592.1L751.9 600.9L753.3 600.8L755.3 600.7L757.9 600.4L761 599.8L764.4 598.6L767.5 596.3L769.8 593.6L771.5 590.8L773 587.5L774 583.9L774.6 580L774.3 576L773.3 572.1L771.7 568.4L769.7 564.8L767.3 561.5L764.4 558.4L761.2 555.7L757.5 553.6L753.7 552.2L749.8 551.3L745.8 550.7L742 550.5L738.4 550.5L734.8 551L731.2 552L727.9 553.2L724.8 554.7L722 556.3L719.4 558.2L717 560.6L715.2 563.3L714 565.9L713.1 568.2L712.5 569.9L712 571Z"/>
<circle class="r" cx="749.3" cy="583.2" r="13.3"/>
<path class="" d="M727.2 534.8L726.9 533.4L726.6 531.3L726.1 528.7L725.4 525.8L724.5 522.8L723.3 520.1L721.8 517.8L720.2 515.6L718.4 513.7L716.4 511.8L714.2 510.2L711.9 508.8L709.5 507.5L706.8 506.5L703.9 505.6L701 505.1L697.8 504.9L694.6 505.4L691.5 506.7L688.9 508.5L686.7 510.6L684.7 513L683.1 515.6L682 518.6L681.6 521.9L681.9 525L682.6 528L683.6 530.8L685 533.4L687 535.9L690.1 537.6L693.1 538.1L695.6 537.9L697.6 537.5L699.1 537.1L700.1 536.9L700.2 529.6L699 529.4L697.4 529.1L695.8 528.8L694.6 528.3L694.2 527.9L694.7 528L694.7 527.6L694.2 526.4L693.7 524.9L693.4 523.3L693.3 522L693.3 521.3L693.6 520.6L694.2 519.5L695.1 518.2L696.2 517.1L697.1 516.3L697.8 515.9L698.5 515.8L699.8 515.8L701.6 516L703.5 516.5L705.4 517.2L707 517.9L708.4 518.7L709.7 519.8L711 521L712.2 522.3L713.3 523.8L714.2 525.1L715 526.7L715.8 528.7L716.6 531.1L717.3 533.4L717.8 535.5L718.3 537Z"/>
<path class="r" d="M722.7 557.2C722.7 557.2 721.2 548.2 725.4 541.2C729.8 533.9 731.6 535.3 738.7 530.6C748.7 524 759.4 518.6 759.4 518.6C759.4 518.6 761.3 526.5 758.6 533.3C756 539.8 750.6 538.6 749.3 543.9C748.4 547.5 754.6 549.2 754.6 549.2C754.6 549.2 749.4 552.1 744 554.5C737.5 557.4 737.8 558.9 730.7 559.8C726.5 560.4 722.7 557.2 722.7 557.2Z"/>
<path class="" d="M646 696L646.4 694.9L647 693.3L647.8 691.1L648.5 688.7L648.8 686L648.3 683L646.8 680.5L645 678.5L642.9 676.8L640.4 675.4L637.6 674.5L634.4 674.3L631.4 674.9L628.7 676L626 677.6L623.5 679.6L621.2 681.9L619.3 684.6L617.9 687.5L616.9 690.7L616.1 694.1L615.7 697.6L615.8 701.2L616.4 704.8L617.4 708.2L618.9 711.5L620.7 714.7L623 717.8L625.8 720.7L629.1 723.1L632.7 725L636.6 726.5L640.8 727.8L645.2 728.6L649.7 728.9L654.2 728.7L658.5 727.9L662.7 726.5L666.7 724.6L670.5 722.6L674.1 720.4L677.6 718L681 715.5L684.2 712.7L687.2 709.8L690.1 706.9L693 704.1L696.2 701.3L699.8 698.4L703.6 695.4L707.4 692.3L711.4 689.3L715.4 686.6L719.3 684.2L723.3 682.2L727.4 680.3L731.5 678.6L735.8 677.1L740.2 675.7L744.8 674.5L750 673.4L755.9 672.4L762 671.5L767.8 670.8L772.7 670.2L776.2 669.7L775.6 663.6L772 664L767.1 664.4L761.2 664.9L755 665.5L748.8 666.3L743.2 667.3L738.2 668.5L733.5 669.9L728.9 671.4L724.4 673.1L720 675.1L715.5 677.3L711.1 679.8L706.7 682.7L702.5 685.7L698.4 688.8L694.5 691.8L690.8 694.7L687.3 697.5L684 700.4L680.9 703.2L678 705.7L675.2 707.9L672.2 709.9L669 711.8L665.6 713.6L662.2 715.2L659 716.5L655.9 717.4L653.1 717.8L650.2 717.7L647.1 717.3L643.8 716.5L640.7 715.4L637.9 714.1L635.7 712.8L634 711.5L632.4 709.8L631 707.9L629.8 705.8L628.9 703.8L628.2 701.9L627.9 700.1L627.8 698.1L628 695.8L628.4 693.6L628.9 691.7L629.5 690.2L630.2 689L631.3 687.8L632.6 686.5L633.9 685.6L635.1 684.9L635.6 684.6L636 684.5L636.8 684.6L638 685L639.1 685.6L640 686.3L640.4 686.5L640.7 686.7L640.8 687.8L640.7 689.6L640.5 691.6L640.2 693.4L640 694.7Z"/>
<circle class="r" cx="640.4" cy="690.6" r="8.5"/>
<path class="" d="M692 695.9L692.8 694.7L694 693L695.4 691.2L696.8 689.7L697.7 689.2L696.4 690L695 690L695.4 690.7L696.2 692L697.1 693.6L697.9 695.2L698.3 696.1L698.6 697L698.7 698.8L698.6 701L698.5 703.2L698.2 705.2L698.1 706.7L702.2 707.9L702.9 706.7L703.9 705L705.2 702.9L706.3 700.4L707.2 697.6L707.3 694.6L706.6 691.7L705.3 689.1L703.8 686.7L701.9 684.7L699.6 683L695.9 682.1L692.6 684.1L691.4 686.6L690.8 689.1L690.3 691.5L690 693.5L689.7 694.9Z"/>
<path class="" d="M706.5 686.7L707.4 685.9L708.5 684.7L709.8 683.4L711.1 682.4L711.6 682.5L709.7 682.9L708.9 682.8L709.4 683.9L710.1 685.5L710.9 687.4L711.5 689.2L711.8 690.5L712.1 691.7L712.2 693.6L712.1 695.8L712 698.1L711.8 700.1L711.7 701.5L715.2 702.5L715.9 701.3L716.9 699.6L718.1 697.5L719.2 695.1L720.1 692.5L720.4 689.6L719.9 686.8L719 684.2L717.8 681.7L716.3 679.4L714.6 677.5L711.8 675.9L708.1 676.7L706.6 678.8L705.8 680.8L705.2 682.7L704.7 684.4L704.4 685.4Z"/>
<path class="" d="M668.6 713.8L667.3 715L665.2 716.6L662.8 718.7L660.2 721.2L657.7 724L655.8 727.2L654.7 730.4L654 733.6L653.9 736.8L654.1 740L654.8 743.1L655.9 746.1L657.5 749L659.5 751.4L661.8 753.6L664.4 755.5L667.1 757L670 758.2L673 758.9L676.1 759.1L679.1 759L682.1 758.6L685 757.9L687.8 756.5L690.1 754.3L691.4 751.7L692.2 749.2L692.6 747L692.9 745.3L693.1 744.2L688.6 742.2L687.9 743.3L686.9 744.9L685.9 746.5L684.8 747.8L683.8 748.5L683.3 748.5L682.5 748.4L681 748.4L679.1 748.3L677.3 747.9L675.7 747.4L674.6 746.8L673.7 746.1L672.7 745L671.7 743.7L670.9 742.4L670.3 741.2L670 740.3L669.8 739.3L669.7 738.1L669.7 736.8L669.8 735.4L669.9 733.9L670.1 732.6L670.4 731.1L671.2 728.8L672.4 726.2L673.8 723.5L675 721.2L675.9 719.4Z"/>
<path class="" d="M676.1 721.4L675.4 722.8L674.2 724.7L672.8 727L671.5 729.7L670.4 732.5L669.9 735.3L670.2 738.1L670.9 740.7L672 743L673.3 745.2L674.8 747L676.5 748.7L678.8 749.9L681.1 750.5L683.3 750.7L685.3 750.7L686.8 750.6L687.8 750.6L688.6 746.4L687.5 746L686 745.6L684.4 745L683 744.3L681.9 743.7L681.2 743L680.6 742.1L679.7 740.8L678.9 739.4L678.1 737.9L677.6 736.4L677.2 735.1L677.1 733.6L677.3 731.4L677.7 728.8L678.2 726.3L678.7 724.1L679 722.5Z"/>
<path class="r" d="M725.4 618.3C725.4 618.3 731.7 625.3 738.7 623.6C745.1 622 740.5 615.6 746.7 613C755.2 609.4 765.3 612.5 765.3 612.5C765.3 612.5 769.2 617.5 766.6 621C763.1 625.6 758.7 621.1 754.6 626.3C750.4 631.6 750 633.1 752 639.6C754.4 647.7 755.4 648.3 762.6 652.8C772.1 658.7 779.4 655.5 783.9 659.5C787.4 662.7 780.7 665.4 775.9 664.8C764.4 663.5 761.4 662.7 749.3 655.5C739.6 649.7 739.5 649 733.4 639.6C727.2 630 725.4 618.3 725.4 618.3Z"/>
<path class="" d="M792.7 645.9L793.2 644.6L793.7 642.8L794.4 641L795.1 639.3L795.8 638.1L796.5 637.4L797.6 636.7L799.2 635.8L801.1 634.9L802.9 634.3L804.2 634.1L804.3 634.1L803.7 633.9L803.8 634L804.2 634.6L804.7 635.6L805.1 636.7L805.3 637.3L805.2 637.6L804.9 638.6L804.1 640.3L803.2 642.5L802.5 645.3L802.7 648.7L803.8 651.4L805.3 653.4L807.2 655.3L809.4 656.8L812 658L814.8 658.7L817.9 658.9L821.1 658.9L824.5 658.5L828.1 658L831.7 657.3L835.2 656.4L839.1 655.2L843.2 653.6L847.4 651.8L851.2 650.1L854.5 648.7L856.8 647.7L854.5 642L852.1 642.9L848.8 644.2L844.9 645.7L840.8 647.2L836.9 648.4L833.5 649.3L830.3 649.8L827.1 650.1L823.9 650.3L821 650.3L818.5 650.1L816.7 649.7L815.4 649.2L814.4 648.6L813.7 647.9L813.2 647.2L812.9 646.6L812.9 646.4L812.9 646.6L813.1 645.9L813.8 644.3L814.6 642.2L815.4 639.6L815.6 636.5L815.1 633.9L814.3 631.5L813.2 629.2L811.6 627L809.2 625L805.9 623.8L802.6 623.9L799.8 624.7L797 625.9L794.4 627.4L792 629.1L789.8 631.1L788.2 633.6L787.1 636.2L786.5 638.8L786.1 641L785.9 642.7L785.7 643.9Z"/>
<path class="" d="M792.6 668.7L796.6 668.1L802.2 667.3L808.9 666.2L816.2 665L823.6 663.4L830.6 661.5L837.1 659.2L843.6 656.7L850.1 653.8L856.6 650.7L862.8 647.5L868.9 644L874.8 640.4L880.5 636.6L886 632.5L891.4 628.3L896.6 624L901.7 619.5L906.6 614.6L911.3 609.5L915.7 604.3L920 599.2L924.2 594.3L928.3 589.8L932.5 585.5L936.8 581.2L941.1 577.1L945.2 573.2L949 569.3L952.3 565.7L955.2 562.1L957.5 558.7L959.5 555.5L961 552.7L962.2 550.5L963.2 548.9L955.3 544.2L954.3 545.8L953 548L951.4 550.5L949.6 553.3L947.4 556.3L944.9 559.3L941.9 562.6L938.3 566.2L934.3 570.1L930 574.2L925.6 578.6L921.2 583.1L916.8 587.8L912.5 592.7L908.1 597.7L903.7 602.7L899.2 607.4L894.6 611.8L889.8 616.1L884.8 620.2L879.7 624.2L874.5 628L869.1 631.6L863.6 635.1L857.9 638.4L851.9 641.6L845.8 644.6L839.7 647.4L833.5 649.9L827.5 652.2L821.2 654.2L814.3 656L807.3 657.6L800.8 658.9L795.2 660L791.1 660.9Z"/>
<path class="" d="M802.7 670.5L807 670.4L812.9 670.3L820.1 670.1L827.9 669.7L835.9 668.8L843.4 667.3L850.4 665.1L857.5 662.5L864.6 659.4L871.5 655.9L878.1 652.3L884.5 648.5L890.6 644.4L896.5 640L902.1 635.4L907.4 630.6L912.4 625.9L917.1 621.3L921.5 616.7L925.4 612.2L928.9 607.6L932.3 603.1L935.5 598.7L938.8 594.3L942.3 589.5L945.9 584.3L949.5 579.2L952.8 574.5L955.5 570.5L957.5 567.6L950.4 562.7L948.4 565.6L945.7 569.6L942.5 574.3L938.9 579.4L935.3 584.5L931.9 589.2L928.6 593.6L925.4 598L922.1 602.4L918.7 606.7L915.1 611L911 615.3L906.5 619.7L901.6 624.3L896.5 628.8L891.1 633.2L885.6 637.4L879.9 641.3L873.9 644.9L867.5 648.5L861 651.8L854.3 654.8L847.7 657.5L841.3 659.6L834.6 661.2L827.2 662.4L819.7 663.1L812.7 663.7L806.7 664L802.3 664.4Z"/>
<path class="" d="M818.6 616.4L820.6 617.2L823.4 618.5L826.8 620.1L830.7 621.7L834.8 623.1L839 624L843.3 624.7L847.7 625.2L852.5 625.5L857.3 625.5L862.3 625.1L867.2 624.3L872 622.9L876.8 621.1L881.5 619L886.2 616.6L890.7 614L895.2 611.2L899.5 608.3L903.8 605L907.9 601.6L911.9 598L915.8 594.4L919.7 590.8L923.7 586.9L927.9 582.5L932 578.1L935.8 574L938.9 570.5L941.2 568L934.8 562.3L932.6 564.8L929.4 568.2L925.7 572.3L921.7 576.6L917.6 580.9L913.8 584.7L910 588.2L906.2 591.7L902.3 595L898.4 598.3L894.5 601.3L890.5 604.1L886.3 606.7L882.1 609.3L877.9 611.6L873.6 613.6L869.4 615.3L865.3 616.6L861.2 617.4L857 617.7L852.6 617.8L848.3 617.6L844.2 617.3L840.3 616.8L836.6 616.1L832.9 615.1L829.3 613.9L825.9 612.6L823 611.5L820.9 610.7Z"/>
<path class="" d="M788.7 664.6L786.8 666.1L784 668.2L780.7 670.8L777.2 673.7L774 676.7L771.3 679.8L769.3 682.9L767.6 686L766.2 689.3L765.2 692.6L764.5 695.9L764.2 699.3L764.5 702.9L765.5 706.5L766.7 709.8L768 712.7L769.1 715L769.8 716.6L776.7 714L776.1 712.2L775.2 709.7L774.2 707L773.4 704.2L772.8 701.6L772.7 699.4L773 697.2L773.5 694.7L774.2 692.1L775.2 689.5L776.4 686.9L777.8 684.4L779.7 681.7L782.2 678.8L785.2 675.8L788 672.9L790.6 670.5L792.3 668.7Z"/>
</g>
<path class="hl" d="M575.3 588.5L577.3 589.4L580.1 590.7L583.4 592.3L586.9 593.9L590.6 595.6L594.1 597.2L597.4 598.7L600.6 600.2L604 601.7L607.5 603.3L611.4 604.9L615.7 606.6L620.4 608.3L625.5 609.9L630.9 611.6L636.4 613.4L642 615.2L647.6 617.2L653.1 619.3L658.6 621.5L664.2 623.8L669.9 626.2L675.8 628.8L681.8 631.6L688.2 634.8L694.8 638.4L701.7 642.2L708.5 646L715.3 649.6L721.8 652.8L727.9 655.5L733.8 658L739.6 660.2L745.3 662.2L751 664L756.9 665.4L763.2 666.5L769.9 667.2L776.6 667.6L782.8 667.9L788 668.1L791.7 668.3L791.9 665.1L788.2 664.8L783 664.5L776.8 664.1L770.3 663.5L763.7 662.7L757.7 661.5L752.2 660L746.6 658.3L741.1 656.2L735.5 653.9L729.7 651.4L723.7 648.7L717.4 645.5L710.8 642L704 638.1L697.1 634.3L690.4 630.6L683.9 627.3L677.8 624.5L671.8 621.9L666 619.5L660.3 617.2L654.7 615.1L649.1 613L643.5 611L637.8 609.1L632.2 607.4L626.9 605.7L621.8 604L617.2 602.4L613.1 600.7L609.4 599.1L606 597.5L602.7 595.8L599.5 594.2L596.3 592.6L592.8 590.9L589.3 589.1L585.8 587.3L582.6 585.7L579.8 584.3L577.9 583.3Z"/>
<path class="hl" d="M565.7 638.1L566.8 636.1L568.2 633.3L569.8 630.1L571.7 626.9L573.7 624.1L575.9 621.9L578.5 620.2L581.4 618.5L584.7 617.1L588.3 615.8L592 614.8L595.8 614L599.7 613.4L603.8 613.1L608.1 613L612.5 613.1L617 613.4L621.3 613.9L625.5 614.6L629.6 615.5L633.7 616.6L637.9 618L642.5 619.6L647.3 621.4L652.5 623.5L657.9 625.9L663.6 628.5L669.5 631.3L675.6 634.2L681.8 637.1L688.1 640L694.7 643.2L701.5 646.4L708.3 649.6L715.2 652.6L722 655.4L728.7 657.8L735.6 660.2L742.4 662.3L749.2 664.2L755.9 665.8L762.3 667L768.9 667.8L775.8 668L782.4 668L788.4 667.8L793.5 667.5L797.2 667.5L797.1 664.8L793.4 664.8L788.4 664.9L782.4 665L775.8 664.9L769.2 664.5L762.9 663.6L756.7 662.3L750.2 660.6L743.6 658.6L736.9 656.4L730.2 653.9L723.5 651.4L716.9 648.6L710.2 645.5L703.5 642.2L696.8 638.9L690.3 635.6L684 632.5L677.8 629.5L671.8 626.6L665.9 623.7L660.2 621L654.7 618.5L649.4 616.2L644.4 614.3L639.8 612.6L635.4 611L631.1 609.7L626.7 608.7L622.2 607.8L617.6 607.2L612.9 606.8L608.2 606.7L603.5 606.7L599 607.1L594.6 607.7L590.4 608.6L586.3 609.8L582.4 611.2L578.6 613L575.1 615L571.9 617.3L569.1 620.3L566.7 623.8L564.8 627.5L563.2 630.9L561.9 633.7L560.9 635.7Z"/>
<path class="hl" d="M665.3 583L666 584.8L666.8 587.1L667.8 590L669 593.1L670.3 596.3L671.8 599.3L673.5 602.3L675.3 605.3L677.2 608.4L679.3 611.5L681.6 614.6L683.9 617.5L686.3 620.3L688.8 623.1L691.5 625.7L694.2 628.4L697.1 631L700.2 633.6L703.5 636.3L707 639.1L710.7 641.9L714.4 644.6L718.1 647.2L721.8 649.5L725.7 651.7L729.9 653.8L734.1 655.7L737.9 657.4L741.1 658.8L743.4 659.9L744.6 657.5L742.3 656.4L739.1 654.8L735.4 653L731.3 651L727.3 648.8L723.7 646.6L720.1 644.2L716.5 641.7L712.9 638.9L709.4 636.1L706 633.3L702.8 630.6L699.8 628L697 625.4L694.4 622.8L691.9 620.2L689.5 617.5L687.2 614.8L684.9 612L682.8 609.1L680.7 606.1L678.8 603.1L677 600.2L675.3 597.4L673.9 594.6L672.5 591.6L671.2 588.6L670.2 585.9L669.2 583.5L668.6 581.8Z"/>
<path class="hl" d="M619.3 571.7L618.6 571.9L617.6 572.1L616.3 572.4L614.9 572.9L613.5 573.7L612.3 574.8L611.6 576.2L610.9 577.8L610.5 579.5L610.2 581.5L610.2 583.5L610.5 585.5L611.1 587.6L612 589.8L613.1 592L614.4 594.2L615.9 596.3L617.6 598.4L619.5 600.3L621.4 602.1L623.6 603.9L626 605.6L628.6 607.2L631.4 608.9L634.6 610.5L638.1 612L641.8 613.5L645.6 615L649.3 616.4L652.9 617.9L656.7 619.5L660.8 621.3L664.9 623L668.7 624.7L672 626.1L674.3 627.1L675.5 624.4L673.2 623.3L670.1 621.8L666.3 620L662.2 618.1L658.2 616.2L654.4 614.5L650.7 612.9L647 611.4L643.2 609.9L639.7 608.4L636.3 606.9L633.3 605.4L630.7 603.8L628.3 602.3L626 600.7L624 599.1L622.2 597.4L620.6 595.7L619.1 593.9L617.8 592L616.6 590L615.7 588.1L614.9 586.3L614.4 584.6L614.1 583.1L614.1 581.7L614.2 580.2L614.5 578.9L614.9 577.6L615.2 576.7L615.6 576.1L616.3 575.4L617.3 574.8L618.3 574.3L619.3 573.8L620 573.5Z"/>
<path class="hl" d="M722.1 530.4L721.9 531.8L721.8 533.7L721.5 535.9L721.3 538.4L720.9 540.9L720.5 543.5L720 546.2L719.4 549.1L718.8 552.2L718.1 555.4L717.3 558.6L716.4 561.9L715.5 565.2L714.4 568.6L713.2 572.2L712.1 575.9L711 579.6L710.2 583.3L709.5 586.9L708.9 590.5L708.5 594.1L708.2 597.8L708.1 601.5L708.3 605.2L708.6 608.9L709.1 612.6L709.8 616.4L710.8 620.1L712.1 623.9L713.9 627.5L716.2 631L718.8 634.5L721.8 637.8L725 640.9L728.4 644L731.9 646.8L735.5 649.4L739.3 651.9L743.3 654.2L747.5 656.4L751.9 658.3L756.6 660.2L761.6 661.8L767 663.4L772.6 664.7L778.3 665.9L783.8 666.8L789 667.3L794.2 667.4L799.5 667.1L804.6 666.6L809.3 665.9L813.1 665.3L815.9 664.9L815.6 662L812.7 662.3L808.9 662.9L804.3 663.4L799.3 663.9L794.2 664.1L789.3 663.9L784.3 663.2L779 662.2L773.5 661L768.1 659.5L762.8 657.9L758 656.2L753.6 654.3L749.5 652.4L745.5 650.2L741.8 648L738.2 645.5L734.8 643L731.5 640.3L728.4 637.4L725.4 634.4L722.7 631.3L720.3 628.1L718.3 625L716.8 621.9L715.6 618.6L714.7 615.3L714.1 611.8L713.6 608.3L713.3 604.8L713.2 601.4L713.2 598.1L713.5 594.6L714 591.2L714.5 587.7L715.1 584.3L715.9 580.8L716.8 577.3L717.9 573.7L719 570.1L720.1 566.6L721.1 563.1L721.9 559.7L722.6 556.4L723.3 553.2L724 550.1L724.5 547.1L725 544.2L725.3 541.5L725.6 538.8L725.8 536.3L725.9 534L726 532.1L726.1 530.8Z"/>
<path class="hl" d="M717.9 574L718.6 572.8L719.4 571.1L720.4 569.2L721.5 567.3L722.8 565.6L724.2 564.4L726.1 563.2L728.4 562L730.9 561L733.5 560.1L736.2 559.5L738.8 559.3L741.6 559.4L744.6 559.7L747.8 560.3L750.7 561.1L753.4 562.2L755.6 563.5L757.6 565.3L759.5 567.5L761.2 570.1L762.7 572.8L763.8 575.4L764.4 577.6L764.5 579.6L764.2 581.8L763.5 584.1L762.6 586.3L761.5 588.2L760.5 589.7L759.4 590.8L757.7 591.8L755.6 592.7L753.5 593.4L751.5 594.1L750.1 594.6L751.2 598.4L752.6 598.1L754.6 597.8L757 597.4L759.7 596.7L762.4 595.5L764.7 593.7L766.5 591.5L768 589L769.3 586.2L770.2 583.1L770.6 579.9L770.4 576.6L769.6 573.4L768.2 570.1L766.4 566.9L764.2 563.8L761.7 561.1L759 558.8L755.9 557L752.5 555.7L749 554.8L745.4 554.2L741.9 554L738.6 554L735.3 554.4L732.1 555.2L729.1 556.3L726.2 557.6L723.6 559L721.3 560.6L719.3 562.6L717.7 564.9L716.5 567.2L715.6 569.3L714.9 571L714.3 572.2Z"/>
<path class="hl" d="M724.7 535.4L724.3 534L723.9 531.9L723.4 529.3L722.7 526.6L721.8 523.9L720.7 521.5L719.4 519.5L717.9 517.5L716.3 515.7L714.5 514.1L712.6 512.6L710.5 511.3L708.3 510.3L705.9 509.3L703.3 508.6L700.6 508.1L698 508L695.5 508.4L693.1 509.4L691 510.9L689 512.8L687.4 514.8L686.1 517L685.2 519.4L684.9 521.9L685.1 524.5L685.7 527.1L686.6 529.6L687.7 531.8L689.2 533.6L691.3 534.9L693.5 535.3L695.7 535.3L697.6 535.1L699.1 534.9L700.1 534.9L700.2 531.7L699 531.5L697.5 531.5L695.8 531.4L694.2 531.1L693.1 530.7L692.5 530.2L691.9 529.3L691.2 527.7L690.6 525.8L690.1 523.8L690 522L690.1 520.6L690.6 519.2L691.5 517.6L692.7 516.1L694.1 514.7L695.6 513.6L696.9 513L698.3 512.7L700.1 512.8L702.3 513.1L704.4 513.7L706.5 514.5L708.4 515.3L710 516.3L711.6 517.5L713.1 518.9L714.5 520.4L715.7 522.1L716.8 523.7L717.7 525.6L718.5 527.9L719.3 530.4L719.9 532.8L720.4 534.9L720.8 536.4Z"/>
<path class="hl" d="M644.3 695.6L644.6 694.5L645.2 692.8L645.8 690.7L646.3 688.5L646.5 686.2L646.1 684L644.9 682.1L643.4 680.5L641.5 679.1L639.4 678L637.2 677.3L634.8 677.2L632.5 677.7L630.1 678.7L627.9 680.1L625.7 681.9L623.8 683.9L622.2 686.2L621 688.7L620.1 691.5L619.5 694.6L619.2 697.7L619.2 700.9L619.7 704L620.7 706.9L622 709.9L623.6 712.8L625.7 715.6L628.1 718.1L630.9 720.2L634.2 721.9L637.8 723.4L641.7 724.6L645.8 725.4L649.9 725.8L653.9 725.6L657.8 724.9L661.6 723.7L665.4 722L669.1 720L672.6 717.9L676.1 715.7L679.4 713.4L682.5 710.7L685.4 707.9L688.3 705.1L691.4 702.3L694.7 699.5L698.3 696.6L702.1 693.5L706 690.4L710.1 687.5L714.2 684.7L718.3 682.3L722.4 680.2L726.5 678.3L730.8 676.6L735.2 675.1L739.7 673.7L744.4 672.5L749.6 671.4L755.6 670.4L761.8 669.6L767.6 669L772.5 668.4L776 668L775.7 665.3L772.2 665.7L767.3 666.2L761.4 666.7L755.2 667.4L749.1 668.3L743.7 669.4L738.8 670.6L734.2 671.9L729.6 673.5L725.2 675.2L720.9 677.1L716.6 679.2L712.3 681.7L708 684.6L703.9 687.6L699.9 690.7L696 693.7L692.3 696.6L688.9 699.4L685.7 702.3L682.7 705L679.8 707.7L676.8 710.1L673.7 712.2L670.4 714.2L667 716.2L663.5 717.9L660 719.3L656.7 720.4L653.4 720.9L650.1 720.9L646.5 720.5L643 719.6L639.5 718.5L636.4 717.2L633.8 715.7L631.7 714.1L629.8 712.1L628.1 709.8L626.7 707.4L625.6 705L624.9 702.7L624.5 700.4L624.4 697.9L624.6 695.3L625.1 692.8L625.8 690.5L626.6 688.6L627.7 687L629.1 685.4L630.7 684L632.4 682.9L634.1 682.1L635.3 681.7L636.4 681.6L637.9 682L639.4 682.7L640.8 683.6L642 684.6L642.6 685.5L643 686.5L643 688.1L642.7 690.1L642.3 692L641.9 693.8L641.7 695.1Z"/>
<path class="hl" d="M691.3 695.6L692 694.4L693 692.6L694.1 690.6L695.3 688.8L696.3 687.8L696.3 687.8L696.3 688L697.2 689L698.4 690.5L699.5 692.4L700.3 694.2L700.8 695.7L701 697.2L700.9 699.2L700.5 701.5L700 703.7L699.5 705.7L699.3 707.1L701 707.6L701.6 706.3L702.4 704.5L703.3 702.3L704.2 700L704.8 697.5L704.8 695L704.1 692.7L703 690.4L701.6 688.2L700 686.4L698.3 685L696.1 684.3L694 685.5L692.9 687.4L692.1 689.7L691.4 691.9L690.8 693.9L690.4 695.1Z"/>
<path class="hl" d="M705.9 686.3L706.6 685.5L707.6 684.1L708.7 682.6L709.8 681.4L710.6 680.8L710.3 680.9L710.5 681.3L711.3 682.6L712.3 684.4L713.2 686.5L713.8 688.5L714.3 690.2L714.3 691.9L714.2 694.1L713.8 696.3L713.4 698.5L712.9 700.4L712.7 701.8L714.2 702.2L714.7 701L715.5 699.2L716.4 697.1L717.2 694.7L717.8 692.3L718 689.9L717.5 687.5L716.7 685.1L715.6 682.7L714.4 680.7L713 679L711.2 677.9L709.1 678.4L707.8 679.8L706.9 681.5L706.1 683.3L705.5 684.8L705 685.8Z"/>
<path class="hl" d="M670.7 715.4L669.5 716.7L667.6 718.6L665.5 720.8L663.3 723.3L661.3 726L659.8 728.7L659 731.4L658.5 734.1L658.3 736.8L658.5 739.5L659 742L659.9 744.5L661.1 746.8L662.8 748.9L664.6 750.8L666.7 752.5L668.9 753.9L671.3 755L673.8 755.6L676.4 756L679.1 756L681.8 755.8L684.3 755.2L686.5 754.2L688.3 752.6L689.5 750.6L690.4 748.4L691 746.4L691.5 744.7L691.8 743.6L689.9 742.8L689.3 743.9L688.5 745.5L687.7 747.2L686.7 748.9L685.6 750.1L684.6 750.8L683.2 751.1L681.3 751.3L679.1 751.3L676.9 751.1L674.9 750.7L673.3 750L671.8 749.2L670.3 748L668.9 746.5L667.7 745L666.7 743.4L666 741.9L665.6 740.4L665.3 738.7L665.2 736.8L665.3 734.9L665.6 732.9L666.1 731.1L666.8 729.1L668.1 726.7L669.7 724.1L671.4 721.6L672.8 719.4L673.8 717.8Z"/>
<path class="hl" d="M676.9 721.7L676.3 723.1L675.3 725.1L674.2 727.5L673.1 730.1L672.3 732.8L672 735.3L672.3 737.6L672.9 739.9L673.9 742L675.1 743.9L676.4 745.6L677.9 747.1L679.6 748.1L681.6 748.8L683.6 749.1L685.5 749.2L687 749.3L688 749.4L688.4 747.6L687.3 747.3L685.8 747L684.1 746.6L682.4 746.1L681 745.4L679.9 744.6L678.9 743.5L677.9 742.1L676.9 740.4L676.1 738.7L675.5 736.9L675.2 735.2L675.2 733.3L675.6 730.9L676.3 728.3L677.1 725.8L677.8 723.7L678.2 722.2Z"/>
<path class="hl" d="M790.7 645.3L791.1 644.1L791.6 642.3L792.1 640.4L792.8 638.5L793.7 636.8L794.6 635.6L796 634.6L797.9 633.4L800 632.4L802 631.6L803.8 631.2L804.8 631.2L805.3 631.4L806 632L806.7 633.1L807.4 634.4L807.9 635.9L808.2 637.1L808.1 638.1L807.6 639.6L806.8 641.4L806 643.5L805.4 645.7L805.6 648L806.4 650L807.5 651.7L809 653.2L810.8 654.5L813 655.5L815.4 656.1L818.1 656.4L821.1 656.4L824.4 656.2L827.8 655.8L831.3 655.2L834.7 654.4L838.5 653.3L842.6 651.8L846.7 650.1L850.5 648.5L853.8 647.1L856.1 646.1L855.1 643.6L852.8 644.6L849.5 645.9L845.6 647.4L841.5 649L837.5 650.3L834 651.3L830.7 651.9L827.3 652.4L824.1 652.6L821.1 652.7L818.4 652.6L816.2 652.2L814.4 651.7L813 650.9L811.9 650L811 649L810.3 647.9L810 647L810 646.2L810.3 644.9L811 643.2L811.9 641.2L812.6 639L812.7 636.7L812.3 634.7L811.6 632.7L810.7 630.8L809.4 629L807.7 627.5L805.5 626.7L803.1 626.8L800.6 627.4L798.2 628.5L795.8 629.8L793.6 631.2L791.7 632.9L790.3 634.9L789.4 637.1L788.7 639.4L788.3 641.5L787.9 643.3L787.6 644.4Z"/>
<path class="hl" d="M792.2 666.5L796.2 665.8L801.8 664.9L808.5 663.8L815.7 662.4L822.9 660.8L829.7 658.9L836.1 656.6L842.5 654L848.9 651.2L855.2 648.1L861.4 644.9L867.4 641.5L873.2 637.9L878.8 634.1L884.2 630.2L889.5 626L894.7 621.7L899.7 617.3L904.5 612.6L909.1 607.6L913.6 602.5L917.9 597.4L922.1 592.5L926.3 587.9L930.5 583.5L934.9 579.3L939.1 575.1L943.2 571.2L947 567.4L950.2 563.9L953 560.5L955.3 557.2L957.2 554.1L958.8 551.4L960 549.2L961 547.6L957.6 545.5L956.5 547.2L955.2 549.4L953.7 551.9L951.8 554.8L949.6 557.9L947 561.1L943.9 564.5L940.2 568.2L936.2 572.1L931.9 576.2L927.5 580.5L923.2 584.9L918.9 589.6L914.6 594.5L910.3 599.6L905.8 604.6L901.3 609.4L896.6 614L891.7 618.3L886.7 622.5L881.5 626.5L876.2 630.4L870.7 634.1L865.1 637.6L859.3 641L853.2 644.2L847 647.2L840.8 650L834.5 652.5L828.4 654.8L821.9 656.8L814.8 658.5L807.8 660L801.2 661.3L795.6 662.3L791.5 663.1Z"/>
<path class="hl" d="M802.5 668.8L806.9 668.6L812.9 668.4L820 668.1L827.7 667.6L835.5 666.7L842.8 665.1L849.7 663L856.6 660.3L863.5 657.2L870.4 653.8L876.9 650.2L883.2 646.4L889.2 642.4L895 638.1L900.5 633.5L905.8 628.8L910.8 624.2L915.4 619.6L919.7 615.1L923.5 610.6L927 606.1L930.3 601.7L933.6 597.3L936.8 592.8L940.3 588.1L944 582.9L947.5 577.8L950.8 573.1L953.5 569.1L955.5 566.2L952.4 564.1L950.4 567L947.7 571L944.4 575.7L940.9 580.8L937.3 585.9L933.8 590.6L930.6 595.1L927.3 599.5L924.1 603.9L920.6 608.3L916.9 612.6L912.8 617L908.2 621.5L903.3 626.1L898.1 630.7L892.7 635.1L887 639.4L881.2 643.3L875.1 647L868.6 650.6L862 653.9L855.2 657L848.5 659.6L841.9 661.8L834.9 663.4L827.4 664.4L819.8 665.1L812.7 665.5L806.7 665.8L802.4 666.1Z"/>
<path class="hl" d="M819.3 614.7L821.3 615.6L824.1 616.9L827.5 618.3L831.3 619.8L835.3 621.1L839.4 622L843.5 622.6L847.9 623.1L852.5 623.3L857.2 623.3L862 622.9L866.6 622.1L871.3 620.8L875.9 619L880.5 616.9L885.1 614.5L889.5 611.9L893.8 609.2L898.1 606.3L902.3 603.1L906.3 599.7L910.3 596.2L914.2 592.7L918 589.1L922 585.2L926.2 580.8L930.2 576.5L934 572.4L937.1 568.9L939.4 566.4L936.6 563.9L934.3 566.4L931.2 569.9L927.5 573.9L923.5 578.3L919.4 582.6L915.5 586.4L911.7 589.9L907.8 593.5L903.9 596.9L899.9 600.2L895.9 603.3L891.8 606.1L887.6 608.8L883.3 611.3L878.9 613.7L874.5 615.7L870.1 617.5L865.8 618.7L861.5 619.6L857.1 619.9L852.6 620L848.2 619.8L843.9 619.4L839.9 618.9L836.1 618.1L832.3 617L828.6 615.6L825.2 614.3L822.4 613.1L820.2 612.3Z"/>
<path class="hl" d="M789.7 665.8L787.8 667.4L785.1 669.6L781.9 672.2L778.7 675.1L775.6 678.1L773.2 681.1L771.3 684L769.7 687L768.5 690.1L767.5 693.2L766.9 696.2L766.6 699.3L766.9 702.6L767.7 705.9L768.8 709L770 711.8L771.1 714.2L771.7 715.9L774.7 714.7L774.1 713L773.1 710.6L772.1 707.8L771.1 704.9L770.5 702L770.3 699.4L770.6 696.8L771.1 694.1L772 691.3L773.1 688.5L774.4 685.7L776 683.1L778.1 680.3L780.8 677.3L783.9 674.4L786.9 671.6L789.5 669.3L791.3 667.6Z"/>
<path class="r" d="M508.8 583.2C508.8 583.2 514.3 573.3 523.4 568.3C533 563.2 534.1 561.5 544.7 563.8C555.9 566.3 553.9 570.6 563.3 577.1C570.1 581.9 577.1 581.4 577.1 586.4C577.1 591.5 570.8 591.5 563.3 592.3C553.9 593.2 554 590.9 544.7 589.6C535.4 588.3 535.3 588.6 526.1 586.9C517.4 585.4 508.8 583.2 508.8 583.2Z"/>
<path class="r" d="M545.2 547.1C549.6 541.3 559.3 543.4 559.3 543.4C559.3 543.4 559.6 552.2 563.3 559.8C567 567.5 569.6 565.8 573.9 573.1C577.2 578.7 581.7 580.5 578.2 585.3C574.6 590.2 570.5 589.9 563.3 587.7C555.3 585.4 555.5 583.8 550.5 577.1C545.9 570.8 546.1 570.2 544.7 562.5C543.4 554.9 540.5 553.2 545.2 547.1Z"/>
<path class="r" d="M534.1 616.2C534.1 616.2 529.1 608 532.2 601C535.3 594.1 537.4 594.5 544.7 592.3C559.7 587.7 568.3 584.8 577.1 587.5C583.8 589.5 576.9 596.1 571.3 600.2C563.5 606 561.6 601.7 552.7 605.5C542.8 609.8 534.1 616.2 534.1 616.2Z"/>
<path class="r" d="M768.5 602.4C768.5 602.4 773.1 593.6 781.2 591.7C790.4 589.5 791.4 590.6 799.8 594.9C810.9 600.5 818.1 604.7 818.9 610.9C819.8 617.1 810.7 614.8 802.5 613.5C792.5 612 793.5 608.7 783.9 605.5C776.4 603.1 768.5 602.4 768.5 602.4Z"/>
<path class="r" d="M808.3 578.4C808.3 578.4 801.4 582.5 799.8 589.1C798.2 595.6 798.1 597.2 802.5 602.4C808.3 609.2 812 611.7 818.4 610.9C824.2 610.1 822.3 605.5 821.6 599.7C820.9 593.7 819 594.2 815.8 589.1C812.3 583.6 808.3 578.4 808.3 578.4Z"/>
<path class="r" d="M786.5 631.6C786.5 631.6 781.3 623.7 785.2 618.3C789.6 612.1 792.1 614.3 799.8 613C810.3 611.2 816.6 609.4 821.1 612.2C825.5 615 818.4 618.5 813.1 621.5C807.2 624.8 806.1 621.7 799.8 624.1C792.7 626.8 786.5 631.6 786.5 631.6Z"/>
<path class="rt" d="M800.7 548.3L801.7 550.1L803 552.6L804.6 555.6L806.8 558.8L809.6 562.1L813.1 564.8L817 567L821.2 568.8L825.6 570.3L830.4 571.6L835.5 572.9L841 574L847 575.1L853.6 576.1L860.5 577L867.7 577.8L874.9 578.3L881.9 578.6L889 578.7L896.3 578.4L903.5 578L910.5 577.4L917 576.7L923 575.8L928.6 574.6L933.7 573L938.3 571.3L942.2 569.7L945.3 568.4L947.6 567.4L944.4 557.5L941.8 558.2L938.5 559.1L934.7 560.1L930.5 561L925.9 561.9L921.1 562.5L915.6 562.9L909.4 563.3L902.8 563.5L895.9 563.6L889 563.6L882.5 563.4L875.9 562.9L869.2 562.3L862.4 561.6L855.7 560.7L849.4 559.8L843.7 559L838.5 558.1L833.7 557.2L829.3 556.3L825.3 555.5L821.7 554.6L818.4 553.8L815.3 553L812.1 551.9L808.9 550.7L806 549.4L803.4 548.2L801.5 547.4Z"/>
<path class="rt" d="M828.5 542L828.7 543.5L828.9 545.6L829.2 548.1L829.8 550.9L830.9 553.8L832.5 556.5L834.6 558.8L836.8 560.8L839.4 562.6L842.2 564.2L845.2 565.7L848.5 567L852.3 568.1L856.6 568.9L860.9 569.5L864.9 569.9L868.3 570.3L870.7 570.6L872.4 559.7L870 559.2L866.7 558.6L862.8 557.8L858.8 557L855.1 556.1L852.1 555.3L849.6 554.5L847.1 553.6L844.8 552.7L842.6 551.7L840.6 550.8L838.9 549.9L837.2 548.9L835.5 547.5L833.7 545.9L832 544.1L830.6 542.6L829.6 541.5Z"/>
<path class="rt" d="M834.1 576.7L836.2 577.7L838.9 579.2L842.3 581L846.1 582.8L850.3 584.6L854.7 586L859.3 587.2L864.4 588.4L870 589.5L875.8 590.4L881.8 591L887.9 591L893.9 590.4L899.8 589.3L905.7 587.9L911.3 586.3L916.5 584.6L921.3 582.9L925.9 581.1L930.3 579L934.3 576.8L937.7 574.8L940.5 573.1L942.6 571.9L938.7 563.7L936.4 564.6L933.3 565.8L929.8 567.2L925.8 568.7L921.7 570.1L917.5 571.3L912.9 572.5L907.8 573.8L902.5 575.1L897.2 576.2L892 577.1L887.2 577.6L882.3 577.6L877.1 577.3L871.8 576.8L866.5 576.1L861.3 575.5L856.6 575.1L852.1 575L847.8 574.9L843.7 574.9L840 574.9L836.9 574.9L834.6 574.9Z"/>
<path class="rt" d="M858.1 590.5L860.6 591.4L864 592.7L868.1 594.2L872.7 595.7L877.4 597L882.2 597.6L886.7 597.8L891.4 597.7L896.2 597.2L901 596.5L905.8 595.4L910.5 594L915.4 591.9L920.2 589.2L924.8 586.3L929 583.4L932.4 581.1L934.9 579.4L930.5 572.1L927.8 573.6L924.2 575.7L919.9 578.1L915.4 580.5L911 582.6L907 584.2L903.1 585.3L899 586.2L894.8 587L890.5 587.6L886.3 588.1L882.2 588.5L878.1 588.8L873.6 588.9L869 588.9L864.8 588.8L861.1 588.7L858.4 588.7Z"/>
<path class="r" d="M801.1 690C801.1 690 801.7 679.3 807.8 671.4C813.6 663.9 815 664.8 823.7 660.8C831.5 657.3 840.2 656.8 840.2 656.8C840.2 656.8 838.7 664.9 834.4 671.4C829.2 679.1 829.1 679.4 821.6 684.7C817.1 687.9 816.3 686.5 811 687.9C806.1 689.2 801.1 690 801.1 690Z"/>
<path class="bk2" d="M514.1 644.4C520.9 636.5 519.9 635 528.9 629.6C536.8 625 537.5 625.2 546.7 625.2C555.1 625.2 555.5 625.6 563 629.6C573.6 635.4 575.7 634.2 582.2 644.4C588.3 654 587 655.3 586.7 666.7C586.3 679.6 585.2 679.7 580.7 691.9C576.2 704.3 578.3 706.2 568.9 715.6C562.3 722.2 560.5 721.8 551.1 721.5C539.4 721 539.5 719 528.9 714.1C520.1 710 518.3 711.5 512.6 703.7C505.1 693.5 506.2 692.4 503.7 680C501.7 669.8 500.8 669.2 503.7 659.3C506.2 650.6 508.2 651.3 514.1 644.4Z"/>
<path class="hib" d="M503.7 641.5C506.9 637 508.6 637.4 514.1 637.8C519.9 638.2 520.3 638.9 524.4 643C530.2 648.5 530.1 649 533.3 656.3C536.1 662.5 537.1 662.8 536.3 669.6C535.5 676.9 535.3 677.6 530.4 683C525.9 687.8 525 687.7 518.5 688.9C512.6 690 511.2 691.3 506.7 687.4C501.3 682.7 502.8 681.1 501.5 674.1C499.8 665.3 500.1 665.2 500.7 656.3C501.3 648.8 499.3 647.6 503.7 641.5Z"/>
<path class="hib" d="M563 643C567.6 638.7 568.5 638.5 574.8 638.5C579.8 638.5 580.5 639.1 583.7 643C588.4 648.6 588.1 649.2 589.6 656.3C591.2 663.5 591.2 663.9 589.6 671.1C588.2 677.6 588.6 678.5 583.7 683C579 687.2 578.2 687.4 571.9 687.4C565.5 687.4 564.8 687.1 560 683C554.7 678.4 553.7 678 552.6 671.1C551.4 663.7 552.9 663.4 555.6 656.3C558.2 649.1 557.4 648.1 563 643Z"/>
<path class="hib" d="M514.1 688.9C517.9 684.7 518.8 684.8 524.4 684.4C529.8 684.1 531.6 683 534.8 687.4C538.8 692.8 537.1 694.1 536.3 700.7C535.6 707 536.2 708 531.9 712.6C528.1 716.6 527 716.3 521.5 716.3C516.7 716.3 515.5 716.4 512.6 712.6C508.9 707.7 509.2 706.8 509.6 700.7C510 694.4 509.8 693.6 514.1 688.9Z"/>
<path class="hib" d="M545.2 685.9C549.5 681.6 550.9 682.6 557 683C564.8 683.4 564.5 685 571.9 687.4C577.9 689.4 579.7 687 583.7 691.9C587.5 696.5 586.7 697.9 585.2 703.7C583.5 709.9 582.5 709.8 577.8 714.1C572.6 718.8 572.5 719 565.9 721.5C560.3 723.6 559.6 725.3 554.1 723C547.8 720.3 548.1 718.8 545.2 712.6C542 705.8 542.2 705.3 542.2 697.8C542.2 691.7 540.9 690.2 545.2 685.9Z"/>
<path class="hib" d="M523 629.6C526.5 625.6 526.8 625.3 531.9 623.7C539 621.5 539.2 622.2 546.7 622.2C553.4 622.2 554.2 620.4 560 623.7C565.5 626.9 565.9 627.9 567.4 634.1C569.1 641.3 568.5 641.9 565.9 648.9C563.2 656.4 563.5 657.5 557 662.2C551.5 666.3 550.5 665.6 543.7 665.2C537.4 664.8 536.7 664.9 531.9 660.7C525.8 655.5 526.5 654.6 523 647.4C520.6 642.6 520 642.4 520 637C520 633 520.3 632.6 523 629.6Z"/>
<circle cx="545.2" cy="669.6" r="10" fill="#7c7c7c" filter="url(#blr)"/>
<g class="pst">
<path class="" d="M542.3 668.3L541.7 670.5L540.8 673.5L539.8 677L538.7 680.8L537.6 684.6L536.6 687.9L535.5 690.9L534.4 693.9L533.3 696.9L532.2 699.8L531.1 702.5L530.1 705.1L529.1 707.6L528.2 709.9L527.3 712.1L526.5 714L525.9 715.6L525.4 716.7L542.8 720.3L542.8 719L542.8 717.3L542.8 715.3L542.8 713.1L542.9 710.7L543.1 708.2L543.3 705.6L543.7 702.7L544.1 699.7L544.6 696.5L545.1 693.2L545.5 689.9L546 686.4L546.5 682.5L547 678.5L547.4 674.8L547.8 671.7L548.1 669.5Z"/>
<path class="" d="M510.4 723C510.4 723 515.9 719.9 521.5 717C525.9 714.7 525.5 713.6 530.4 712.6C536.2 711.4 536.5 711.2 542.2 712.6C548.6 714.2 548.2 715.4 554.1 718.5C560.8 722.1 567.4 725.9 567.4 725.9C567.4 725.9 562.2 727.5 557 728.9C554.1 729.7 553 728 551.1 730.4C547.7 734.8 546.7 742.2 546.7 742.2C546.7 742.2 545.5 736.4 542.2 731.9C539.4 728 538.3 726.9 534.8 725.9C532.8 725.4 531.9 728.9 531.9 728.9C531.9 728.9 531 723.8 527.4 723C523 722 523.2 725.9 518.5 725.9C514.2 725.9 510.4 723 510.4 723Z"/>
</g>
<path class="r" d="M661.1 546.5C667.8 541.4 669 538.8 666.9 530.6C664.6 521.5 653.7 517.3 653.7 517.3C653.7 517.3 642.7 521.5 640.4 530.6C638.3 538.8 639.5 541.4 646.2 546.5C652.1 551.1 655.2 551.1 661.1 546.5Z"/>
<path class="r" d="M662.3 558.2C669.3 563 672.1 563.4 679.2 558.8C687.2 553.8 687.8 542.1 687.8 542.1C687.8 542.1 680.4 533 671 533.6C662.6 534.1 660.5 536.1 657.7 544.1C655.2 551.1 656.1 554 662.3 558.2Z"/>
<path class="r" d="M651.5 562.9C649.1 571.1 649.6 573.8 656.2 579.3C663.4 585.3 674.7 582.2 674.7 582.2C674.7 582.2 681.2 572.4 677.7 563.7C674.5 555.8 672.1 554.4 663.6 554.2C656.1 554 653.6 555.8 651.5 562.9Z"/>
<path class="r" d="M643.7 554.2C635.2 554.4 632.8 555.8 629.6 563.7C626.1 572.4 632.6 582.2 632.6 582.2C632.6 582.2 643.9 585.3 651.1 579.3C657.7 573.8 658.2 571.1 655.8 562.9C653.7 555.8 651.2 554 643.7 554.2Z"/>
<path class="r" d="M649.6 544.1C646.8 536.1 644.7 534.1 636.3 533.6C626.9 533 619.5 542.1 619.5 542.1C619.5 542.1 620.1 553.8 628.1 558.8C635.2 563.4 638 563 645 558.2C651.2 554 652.1 551.1 649.6 544.1Z"/>
<circle class="disc" cx="653.7" cy="553.2" r="10.6"/>
<path class="r" d="M916.6 671.7C921.8 668.2 924.2 661.6 924.2 661.6C924.2 661.6 920.9 659.9 921.7 657.8C922.9 654.4 927.8 651.6 927.8 651.6C927.8 651.6 924.7 649.9 923.7 646.9C922.7 644 924.3 640.9 924.3 640.9C924.3 640.9 921.1 638.9 918.5 636.2C914.5 632.2 911 627.6 911 627.6C911 627.6 907.9 632.4 904.2 636.7C901.7 639.5 898.8 641.8 898.8 641.8C898.8 641.8 900.5 644.8 899.8 647.7C899 650.8 896 652.8 896 652.8C896 652.8 901.1 655.2 902.5 658.4C903.5 660.5 900.3 662.4 900.3 662.4C900.3 662.4 903.2 668.9 908.6 672C912.1 674 913.2 673.9 916.6 671.7Z"/>
<path class="r" d="M907.4 673.7C903.3 669 896.5 667.5 896.5 667.5C896.5 667.5 895.4 671 893.2 670.5C889.8 669.7 886.4 665.2 886.4 665.2C886.4 665.2 885.2 668.6 882.4 670C879.8 671.3 876.6 670.2 876.6 670.2C876.6 670.2 875.1 673.5 872.9 676.5C869.6 681 865.6 685.1 865.6 685.1C865.6 685.1 870.7 687.5 875.4 690.6C878.4 692.7 881.1 695.3 881.1 695.3C881.1 695.3 883.7 693.2 886.6 693.5C889.7 693.9 892 696.6 892 696.6C892 696.6 893.6 691.2 896.5 689.3C898.4 688.1 900.7 691 900.7 691C900.7 691 906.5 687.3 908.7 681.5C910.2 677.8 910 676.7 907.4 673.7Z"/>
<path class="r" d="M908.1 680.1C902.6 681.6 898.8 686.6 898.8 686.6C898.8 686.6 901.2 688.9 900 690.6C898 693.1 893 694.2 893 694.2C893 694.2 895.3 696.5 895.4 699.3C895.4 702 893.3 704.2 893.3 704.2C893.3 704.2 895.5 706.8 897.1 709.8C899.6 714.3 901.4 719.1 901.4 719.1C901.4 719.1 905.4 715.9 909.8 713.2C912.7 711.4 915.9 710.3 915.9 710.3C915.9 710.3 915.1 707.3 916.5 705C918 702.6 921.2 701.7 921.2 701.7C921.2 701.7 917.3 698.3 916.9 695.1C916.6 693.1 919.9 692.3 919.9 692.3C919.9 692.3 919.1 686 915.1 681.9C912.6 679.3 911.6 679 908.1 680.1Z"/>
<path class="r" d="M916.9 681.7C919.1 687.6 925.1 691.6 925.1 691.6C925.1 691.6 927.6 688.8 929.5 690.1C932.5 692.1 934.1 697.6 934.1 697.6C934.1 697.6 936.7 695 939.9 694.8C942.9 694.5 945.7 696.8 945.7 696.8C945.7 696.8 948.5 694.3 951.8 692.4C956.8 689.5 962.1 687.3 962.1 687.3C962.1 687.3 958.1 683 954.7 678.4C952.5 675.3 951 671.8 951 671.8C951 671.8 947.6 672.8 944.9 671.4C942 669.9 940.8 666.4 940.8 666.4C940.8 666.4 937.1 670.8 933.5 671.4C931.2 671.8 930.1 668.2 930.1 668.2C930.1 668.2 922.9 669.4 918.5 673.9C915.7 676.8 915.5 678 916.9 681.7Z"/>
<path class="r" d="M912 682.1C909.6 687 910.6 692.8 910.6 692.8C910.6 692.8 913.9 692.3 914.3 694.2C914.8 697.1 912.2 701.5 912.2 701.5C912.2 701.5 915.3 701 917.5 702.6C919.4 704.1 919.6 707 919.6 707C919.6 707 922.9 706.8 926.1 707.3C930.9 708 935.6 709.4 935.6 709.4C935.6 709.4 935.9 704.5 936.9 699.8C937.5 696.6 938.8 693.6 938.8 693.6C938.8 693.6 936.1 692.4 935.5 690.1C934.7 687.5 936.2 684.7 936.2 684.7C936.2 684.7 931.1 685.6 928.6 684.1C927 683.2 928.6 680.3 928.6 680.3C928.6 680.3 923.4 677.3 918 677.9C914.4 678.3 913.7 678.9 912 682.1Z"/>
<circle class="disc" cx="912.8" cy="676.8" r="9.6"/>
<path class="rt" d="M923.8 629.1L924 627.4L924.2 625.1L924.5 622.5L924.9 619.6L925.4 616.6L926 613.7L926.7 610.6L927.5 607.2L928.5 603.7L929.5 600.2L930.6 596.6L931.7 593.1L933 589.5L934.5 585.5L936 581.4L937.5 577.7L938.7 574.5L939.6 572.1L931.1 568.8L930.2 571.1L928.9 574.3L927.4 578.1L925.8 582.2L924.3 586.4L923 590.3L921.9 594.1L921 597.9L920.1 601.6L919.3 605.3L918.7 608.9L918.1 612.3L917.8 615.7L917.6 619L917.6 622.1L917.6 624.8L917.7 627.1L917.7 628.7Z"/>
<path class="r" d="M780 720.6C783 720.2 785.5 718 785.5 718C785.5 718 783.8 716.8 784.6 716.1C785.7 715 788.8 714.7 788.8 714.7C788.8 714.7 787.3 713.7 787.1 712.2C786.9 711 788.1 710 788.1 710C788.1 710 786.7 708.7 785.5 707.2C783.8 705.1 782.4 702.7 782.4 702.7C782.4 702.7 780 704 777.4 705.1C775.6 705.8 773.8 706.2 773.8 706.2C773.8 706.2 774.3 707.6 773.6 708.6C772.6 709.8 770.8 709.9 770.8 709.9C770.8 709.9 773.4 711.7 773.8 713.2C774.1 714.2 772 714.4 772 714.4C772 714.4 773.1 717.5 775.5 719.4C777.3 720.8 777.7 720.9 780 720.6Z"/>
<path class="r" d="M774.4 720.8C772.1 718.9 768.8 718.6 768.8 718.6C768.8 718.6 768.6 720.5 767.5 720.4C765.9 720.3 763.9 718.3 763.9 718.3C763.9 718.3 763.6 720 762.4 721C761.4 721.8 759.8 721.5 759.8 721.5C759.8 721.5 759.3 723.3 758.6 724.9C757.5 727.4 756 729.7 756 729.7C756 729.7 758.6 730.5 761 731.6C762.7 732.4 764.1 733.5 764.1 733.5C764.1 733.5 765.2 732.2 766.5 732.2C768 732.1 769.3 733.3 769.3 733.3C769.3 733.3 769.6 730.5 770.8 729.4C771.6 728.6 772.9 729.9 772.9 729.9C772.9 729.9 775.3 727.6 775.8 724.6C776.1 722.6 775.9 722.1 774.4 720.8Z"/>
<path class="r" d="M774.7 723.1C771.9 723.5 769.6 725.5 769.6 725.5C769.6 725.5 770.9 726.7 770.1 727.4C769.1 728.4 766.3 728.6 766.3 728.6C766.3 728.6 767.5 729.7 767.5 731.1C767.5 732.3 766.3 733.2 766.3 733.2C766.3 733.2 767.4 734.6 768.3 736.1C769.5 738.3 770.4 740.7 770.4 740.7C770.4 740.7 772.6 739.4 775 738.5C776.6 737.9 778.3 737.6 778.3 737.6C778.3 737.6 778 736.2 778.8 735.2C779.7 734.1 781.3 734 781.3 734C781.3 734 779.3 732.2 779.1 730.7C779 729.7 780.8 729.6 780.8 729.6C780.8 729.6 780.4 726.5 778.4 724.5C777 723 776.6 722.9 774.7 723.1Z"/>
<path class="r" d="M780.3 722.9C782.8 724.9 786.4 725 786.4 725C786.4 725 786.7 723.1 787.9 723.2C789.7 723.2 791.8 725.1 791.8 725.1C791.8 725.1 792.2 723.3 793.5 722.4C794.7 721.5 796.5 721.7 796.5 721.7C796.5 721.7 797 719.9 797.9 718.2C799.3 715.7 800.9 713.3 800.9 713.3C800.9 713.3 798.1 712.6 795.4 711.5C793.7 710.8 792.1 709.7 792.1 709.7C792.1 709.7 790.9 711 789.4 711.1C787.8 711.3 786.4 710.1 786.4 710.1C786.4 710.1 786 713 784.6 714.2C783.7 714.9 782.3 713.7 782.3 713.7C782.3 713.7 779.6 716.1 778.9 719.2C778.5 721.1 778.7 721.7 780.3 722.9Z"/>
<path class="r" d="M784.2 735.6L786 735.7L788.5 735.9L791.6 736L795.1 736L798.6 735.6L802.2 734.5L805.4 732.4L807.7 729.8L809.4 727.3L810.7 725.3L811.5 724.1L812 723.6L812.6 723.4L814 723.5L815.9 723.8L818.1 724.4L820.5 725.1L822.8 725.5L825 725.6L827.2 725.7L829.3 725.7L831.2 725.8L832.9 725.8L834.1 725.8L834.7 723.4L833.6 722.8L832.2 722.1L830.5 721.1L828.6 720.1L826.5 719.2L824.6 718.4L822.8 717.6L820.7 716.7L818.3 715.7L815.5 714.9L812.4 714.5L808.9 715L805.6 716.7L803.1 719L801.2 721.2L799.6 723.2L798.3 724.5L797.4 725.3L795.9 726.1L793.5 726.9L790.7 727.8L787.9 728.5L785.4 729.1L783.5 729.5Z"/>
<path class="rt" d="M844.9 507.1L847.5 508.5L851.1 510.6L855.4 512.9L860 515.5L864.4 518L868.4 520.5L872.1 522.8L875.7 525.1L879.3 527.4L882.7 529.7L885.9 532.1L888.8 534.5L891.6 537L894.3 539.8L896.9 542.7L899.5 545.6L902 548.5L904.5 551.1L906.8 553.4L909.1 555.6L911.2 557.5L913 559.1L914.5 560.5L915.7 561.5L923.1 554L922.1 552.8L920.7 551.3L919 549.5L917.1 547.5L915.1 545.4L913 543.1L910.9 540.7L908.6 537.9L906 534.8L903.2 531.5L900.1 528.3L896.8 525.2L893.4 522.4L889.8 519.7L886.1 517.2L882.4 514.7L878.6 512.4L874.7 510L870.5 507.5L865.8 504.9L861.1 502.4L856.8 500.1L853.1 498.2L850.4 496.8Z"/>
<path class="r" d="M814.3 479.8C822 475.9 825.7 466.9 825.7 466.9C825.7 466.9 821.5 464.1 822.7 461C824.5 456.1 831.2 452.1 831.2 452.1C831.2 452.1 827.1 449 826.4 444.6C825.8 440.4 828.9 436.5 828.9 436.5C828.9 436.5 824.9 433.1 822.1 428.8C817.9 422.5 815.1 415.4 815.1 415.4C815.1 415.4 810.8 421.7 805.4 427C801.8 430.6 797.2 433.1 797.2 433.1C797.2 433.1 799.4 437.6 797.9 441.6C796.3 445.8 791.6 448 791.6 448C791.6 448 797.3 453.2 798.1 458.4C798.6 461.7 794 463.6 794 463.6C794 463.6 795.7 473.2 802.4 478.5C807.1 482.2 809 482.4 814.3 479.8Z"/>
<path class="r" d="M806.9 478.2C807.2 471.6 802.5 465.7 802.5 465.7C802.5 465.7 799.1 468 797.4 466C794.8 463.1 794.6 456.8 794.6 456.8C794.6 456.8 791.1 459 787.8 458C784.7 457.2 783.2 453.6 783.2 453.6C783.2 453.6 779.5 455.5 775.4 456.2C769.7 457.3 763.8 457.2 763.8 457.2C763.8 457.2 766.5 462.5 768.1 468.1C769.1 472 769.1 476.2 769.1 476.2C769.1 476.2 773 476 775.1 478.3C777.4 480.9 777 485 777 485C777 485 782.7 482.4 786.5 483.5C789 484.2 788.4 488.2 788.4 488.2C788.4 488.2 795.8 489.9 801.6 486.7C806 484.3 806.7 483.2 806.9 478.2Z"/>
<path class="r" d="M801.6 483.9C795.3 481.9 788.5 484.9 788.5 484.9C788.5 484.9 789.3 488.6 787 489.7C783.4 491.4 777.6 490 777.6 490C777.6 490 778.3 494 776.3 496.7C774.4 499.4 770.6 499.9 770.6 499.9C770.6 499.9 771 503.9 770.3 507.8C769.2 513.4 767.1 518.8 767.1 518.8C767.1 518.8 772.8 517.7 778.5 517.6C782.5 517.6 786.3 518.6 786.3 518.6C786.3 518.6 787.5 515 790.4 513.6C793.5 512.1 797.2 513.5 797.2 513.5C797.2 513.5 796.9 507.5 799.2 504.2C800.7 502.2 804.2 503.6 804.2 503.6C804.2 503.6 808.3 497.4 807.5 490.9C806.9 486.4 805.9 485.3 801.6 483.9Z"/>
<path class="r" d="M800.4 487.3C792.4 488.5 785.9 495.9 785.9 495.9C785.9 495.9 788.3 499.9 786.2 502.5C782.8 506.6 775.6 508.3 775.6 508.3C775.6 508.3 777.9 512.7 776.9 516.9C775.8 521.1 771.7 523.8 771.7 523.8C771.7 523.8 773.8 528.4 774.6 533.3C775.7 540.6 775.5 548.1 775.5 548.1C775.5 548.1 781.4 543.5 788 540.1C792.4 537.9 797.3 536.9 797.3 536.9C797.3 536.9 797.1 531.9 799.9 528.6C802.7 525.3 807.6 524.5 807.6 524.5C807.6 524.5 804.7 517.8 806.1 512.6C806.9 509.4 811.5 508.9 811.5 508.9C811.5 508.9 813.7 499.4 810 492.2C807.5 487.4 805.7 486.5 800.4 487.3Z"/>
<path class="r" d="M810.5 492.1C811.9 500.2 819.1 506.1 819.1 506.1C819.1 506.1 822.7 502.7 825.2 504.6C829.2 507.6 831 514.9 831 514.9C831 514.9 834.8 511.7 839.1 512.1C843.1 512.4 845.8 516.4 845.8 516.4C845.8 516.4 849.9 513.3 854.6 511.6C861.4 509.1 868.6 508 868.6 508C868.6 508 864 502.4 860.6 496C858.3 491.6 857.3 486.6 857.3 486.6C857.3 486.6 852.6 487.6 849.4 485.3C846 482.7 845.3 477.7 845.3 477.7C845.3 477.7 839 482 834.1 481.5C830.9 481.2 830.5 476.3 830.5 476.3C830.5 476.3 821.2 475.9 814.8 480.9C810.1 484.7 809.5 486.2 810.5 492.1Z"/>
<path class="r" d="M813.2 485.6C818.4 487.6 824.4 485.3 824.4 485.3C824.4 485.3 823.5 482 825.4 481.1C828.5 479.8 833.5 481.3 833.5 481.3C833.5 481.3 832.8 477.9 834.4 475.4C835.9 473.2 839.1 472.9 839.1 472.9C839.1 472.9 838.6 469.5 839.1 466C839.8 461.2 841.4 456.5 841.4 456.5C841.4 456.5 836.5 457.3 831.6 457.1C828.1 456.9 824.8 455.8 824.8 455.8C824.8 455.8 823.9 459 821.5 460.1C818.8 461.2 815.6 459.9 815.6 459.9C815.6 459.9 816.2 465.1 814.3 467.9C813.1 469.7 810 468.2 810 468.2C810 468.2 806.8 473.7 807.8 479.2C808.5 483.3 809.2 484.2 813.2 485.6Z"/>
<circle class="disc" cx="807.8" cy="484.7" r="12.2"/>
<path class="r" d="M810 340C810.8 335.8 812.4 336.2 816 334C820.9 331.1 826.8 330 826.8 330C826.8 330 824.2 332.7 824 336C823.8 339.6 824.2 339.9 826 343C827.8 346.1 827.6 346.9 831 348C836.2 349.7 836.6 349 842 348.2C849.2 347.1 849.1 346.4 856 344.2C863.1 341.9 863.2 341.3 870 339.2C873.2 338.2 875.7 335.1 876.5 338C877.3 340.9 874.2 342.9 872.5 348C871 352.5 874.1 354.7 870 357.2C864.5 360.6 863 357.5 856 358.2C849 359 849 359.5 842 360.2C836 360.8 836 361.2 830 360.7C824.9 360.2 824.4 360.9 820 358.2C815.4 355.3 815.6 354.7 813 350C810.5 345.4 809 345.1 810 340Z"/>
<path class="r" d="M850 359C850 359 856 356.9 862 355C867.1 353.4 868.4 349.3 872.2 352C876 354.7 875.8 358.1 873.5 363.2C871.1 368.6 869.2 367.4 864 370.2C857.8 373.5 850.8 375.2 850.8 375.2C850.8 375.2 853.2 371.2 853 367C852.8 362.7 850 359 850 359Z"/>
<path class="r" d="M891.8 361.4L890.6 360.7L888.9 359.8L887.2 358.9L885.8 357.9L885.1 357.2L885.2 357.1L885.4 357.1L885.4 356.4L885.3 355.4L885.4 354.2L885.6 352.8L885.8 351.6L886.2 350.3L886.7 349L887.4 347.6L888.2 346.2L889 345L889.9 343.9L891 343L892.4 342L894 341L895.7 340.1L897.5 339.3L899.3 338.6L901.1 338.1L903 337.6L904.9 337.2L906.8 337L908.7 336.9L910.5 337L912.4 337.2L914.3 337.5L916.2 338L918.1 338.6L919.9 339.3L921.7 340.2L923.4 341.2L925.2 342.4L927 343.8L928.7 345.3L930.2 346.8L931.4 348.2L932.4 349.7L933.3 351.6L934.3 353.8L935.1 356L935.9 358.1L936.5 359.6L949.5 354.4L949 353L948.2 351.1L947.2 348.5L946 345.6L944.5 342.6L942.6 339.8L940.5 337.3L938.3 335.1L936 333.1L933.5 331.1L930.9 329.4L928.3 327.8L925.6 326.5L922.8 325.4L920 324.5L917.2 323.8L914.3 323.3L911.5 323L908.6 322.9L905.7 323.1L902.8 323.4L900.1 323.9L897.3 324.6L894.7 325.4L892.1 326.4L889.6 327.5L887 328.9L884.6 330.4L882.2 332.1L880.1 334.1L878.1 336.2L876.4 338.5L875 340.9L873.8 343.4L872.9 345.9L872.2 348.4L871.8 351L871.6 353.6L871.7 356.3L872.1 359.1L873 361.9L874.8 364.9L877.5 367.3L880.3 368.7L882.9 369.5L885.2 370L887 370.4L888.2 370.6Z"/>
<circle class="r" cx="886.8" cy="360.5" r="13.5"/>
<circle class="r" cx="937.2" cy="366.5" r="10.2"/>
<path class="bk" d="M930 335C931.6 327.2 937.2 331.4 945 330C954.4 328.3 955.8 324.1 964 329C971.3 333.4 968.6 336.6 970 345C971.6 354.9 976.2 357.2 970 365C963.6 373 959.8 373.3 950 370C941.4 367.1 944.5 362.8 940 355C934.5 345.3 928.3 343.3 930 335Z"/>
<path class="r" d="M926 326.5C926 326.5 928.9 322.9 933 321.5C937.3 320 937.8 319.4 942 321C947 322.9 946.9 323.7 950 328C953.2 332.4 954.5 332.5 954.5 338C954.5 342.2 953.9 343.6 950 345C945.2 346.7 944.5 345.5 940 343C935.1 340.3 935.7 339.3 932 335C928.6 331 926 326.5 926 326.5Z"/>
<path class="r" d="M944 318.5C944 318.5 946.9 316.6 950 317C953.8 317.4 954.4 317.2 957 320C960.3 323.6 959.5 324.3 961 329C962.5 333.9 964.3 335 963 339C962 342 959.9 342.3 957 341C953.3 339.3 954.3 337.6 952 334C949.3 329.6 949.4 329.6 947 325C945.4 321.8 944 318.5 944 318.5Z"/>
<path class="rt" d="M942.9 552.7L941.5 552.5L939.4 552.3L937.1 552L934.6 551.7L932.2 551.4L930 551L927.8 550.6L925.5 550.1L923.2 549.6L921.1 549.1L919.2 548.5L917.7 547.8L916.2 546.9L914.9 545.9L913.6 544.9L912.6 543.7L911.8 542.7L911.2 541.9L911 541.3L910.9 540.2L911 538.8L911.4 537.4L911.7 536.1L911.9 535.1L909.4 534.2L909 535L908.2 536.1L907.4 537.5L906.6 539.2L906 541.2L906.1 543.4L906.8 545.4L907.8 547.2L909.1 549L910.7 550.6L912.4 552.2L914.3 553.6L916.5 554.7L918.9 555.7L921.3 556.6L923.8 557.3L926.3 557.8L928.7 558.3L931.2 558.7L933.9 559L936.5 559.1L939 559.2L941 559.3L942.4 559.3Z"/>
<path class="rt" d="M875.7 560.6L876.5 561.5L877.6 562.9L879 564.5L880.8 566.3L883 567.9L885.6 569.2L888.5 570.1L891.5 570.8L894.8 571.3L898.3 571.7L901.8 571.9L905.4 572L909.1 571.9L912.9 571.6L916.8 571.1L920.6 570.6L924.2 569.9L927.6 569.2L930.9 568.4L934.2 567.4L937.3 566.3L940 565.3L942.2 564.4L943.9 563.8L941.5 556.2L939.7 556.7L937.4 557.3L934.7 558L931.7 558.8L928.7 559.5L925.7 560.1L922.6 560.6L919.1 561.2L915.5 561.7L912 562.1L908.5 562.5L905.2 562.7L902.1 562.7L898.9 562.6L895.8 562.3L892.9 562L890.1 561.7L887.7 561.5L885.6 561.2L883.4 560.9L881.3 560.6L879.3 560.1L877.6 559.7L876.3 559.4Z"/>
<path class="rt" d="M858.7 586L859.9 586.3L861.5 586.7L863.4 587.2L865.7 587.6L868.2 587.9L871 588L874.1 587.8L877.5 587.5L881.2 587.1L885 586.5L888.9 585.9L892.7 585.3L896.6 584.6L900.6 583.8L904.7 582.9L908.8 582L913 581L917.1 579.9L921.4 578.5L926.1 576.8L930.7 575.1L934.9 573.5L938.5 572.1L941.1 571.2L938.9 564.8L936.3 565.7L932.6 566.8L928.3 568.2L923.7 569.6L919.1 571L914.9 572.1L911 573.1L907 574.1L903 575L899 575.8L895.1 576.6L891.3 577.4L887.5 578.1L883.7 578.8L880 579.5L876.5 580.1L873.2 580.8L870.3 581.4L867.7 582L865.4 582.6L863.3 583.3L861.4 583.8L859.8 584.3L858.6 584.7Z"/>
<path class="rt" d="M881.4 594L882.5 594.3L883.9 594.7L885.7 595.2L887.8 595.7L890.1 595.9L892.5 596L895 595.7L897.6 595.3L900.4 594.7L903.2 594L906.2 593.1L909.2 592.2L912.2 591.2L915.5 589.9L918.7 588.6L922 587.2L925.1 585.8L928.1 584.4L931 582.8L933.9 581.1L936.6 579.5L939.1 577.9L941.1 576.6L942.6 575.7L940 571L938.4 571.8L936.3 573L933.7 574.3L930.9 575.7L928 577.1L925.3 578.3L922.4 579.5L919.3 580.7L916.1 581.9L912.9 583.1L909.8 584.1L906.8 585.1L904.1 586L901.3 586.8L898.6 587.5L896 588.1L893.6 588.8L891.5 589.4L889.5 590L887.5 590.7L885.6 591.3L883.9 591.8L882.4 592.3L881.3 592.7Z"/>
<path class="rt" d="M855.6 557.7L856 558.7L856.4 560.2L857.1 562.1L857.9 564.1L859.1 566.1L860.6 567.9L862.3 569.5L864.3 571L866.5 572.4L868.8 573.6L871.1 574.7L873.5 575.6L876.1 576.1L878.7 576.3L881.2 576.3L883.4 576.2L885.2 576L886.5 576L886.8 570.7L885.5 570.5L883.7 570.2L881.6 569.9L879.5 569.5L877.5 569L875.8 568.4L874.1 567.7L872.2 566.8L870.2 565.8L868.2 564.7L866.4 563.7L864.8 562.7L863.3 561.9L861.7 560.9L860.1 559.8L858.6 558.7L857.4 557.7L856.4 557Z"/>
<path class="rt" d="M943.1 569.2L942.1 570.6L940.6 572.4L938.8 574.6L937 577L935.2 579.6L933.7 582.3L932.5 584.9L931.2 587.6L930.1 590.5L929.2 593.5L928.4 596.6L928 599.7L928 602.8L928.3 605.8L928.9 608.8L929.7 611.6L930.6 614.1L931.7 616.3L933.4 618.2L935.3 619.4L937.2 620L938.7 620.3L939.9 620.4L940.6 620.5L942.1 616.8L941.3 616.3L940.2 615.8L939.2 615.2L938.4 614.5L937.9 613.8L937.6 613.1L937.2 611.7L936.7 609.7L936.3 607.4L936 604.9L935.9 602.5L936 600.3L936.4 598.2L937 595.8L937.9 593.3L938.9 590.7L939.9 588.2L940.9 585.7L942 583.3L943.2 580.7L944.5 578.1L945.7 575.7L946.8 573.6L947.6 572.1Z"/>
<path class="rt" d="M926.9 582.9L926.1 584.6L924.9 586.9L923.5 589.7L922 592.8L920.6 595.9L919.5 599L918.6 602L917.9 605L917.3 608.1L916.8 611.1L916.4 614L916 617L915.8 619.9L915.7 622.9L915.7 625.7L915.8 628.4L915.7 630.8L915.6 633L915.4 635L915 637L914.5 638.9L914.1 640.6L913.7 642.1L913.4 643.3L918.6 644.7L918.9 643.7L919.4 642.2L920 640.4L920.7 638.4L921.3 636.1L921.7 633.7L922 631.2L922.1 628.5L922.2 625.8L922.3 623L922.4 620.3L922.6 617.7L923 615L923.5 612.1L924 609.3L924.5 606.4L925.2 603.7L925.9 601L926.7 598.2L927.8 595.2L929 592.1L930.1 589.3L931.1 586.9L931.8 585.1Z"/>

</g>
</defs>
<g>
<use href="#half"/>
<use href="#half" transform="translate(1927.500 0) scale(-1 1)"/>
<path class="pal" d="M964 395.2C962.2 395.5 960.8 394.9 958 396C955.6 397 954 399.2 954 399.2C954 399.2 949.9 398.6 946 399.5C941.8 400.5 941.3 400.2 938 403C935.6 405.1 935.2 408.7 935.2 408.7C935.2 408.7 930.8 408 927 409.5C922.5 411.3 922.1 411.3 919 415C916.2 418.3 916.4 418.7 915.6 423C915 426.5 916.2 430 916.2 430C916.2 430 911.5 424.2 911.5 424.2C911.5 424.2 909.5 428.5 908 433C906.4 437.9 906.6 438 905.2 443C903.7 448 903.6 448 902.2 453C900.6 458.5 900.3 458.4 899.2 464C898.3 468.4 898.8 468.5 898.2 473C897.7 476.5 896.9 476.4 897 480C897.1 484.6 897.5 484.5 898.5 489C899.5 493.6 899.2 493.7 901 498C903 502.8 903.4 502.6 906 507C908.4 511.1 907.4 512 911 515C914.7 518.1 915.2 518.2 920 518.5C924.2 518.7 923.8 516.1 928 516C932.1 515.9 931.9 518.5 936 518C940.4 517.5 940.3 516.6 944 514.2C946.4 512.7 945.3 511.2 948 510.2C951.3 509 951.6 509.6 955 510.2C956.9 510.5 956.7 511.3 958.5 512C961.2 513 962.3 513 964 513.5C964.2 513.6 963.3 513.6 963.5 513.5C965.2 513 966.3 513 969 512C970.8 511.3 970.6 510.5 972.5 510.2C975.9 509.6 976.2 509 979.5 510.2C982.2 511.2 981.1 512.7 983.5 514.2C987.2 516.6 987.1 517.5 991.5 518C995.6 518.5 995.4 515.9 999.5 516C1003.7 516.1 1003.3 518.7 1007.5 518.5C1012.3 518.2 1012.8 518.1 1016.5 515C1020.1 512 1019.1 511.1 1021.5 507C1024.1 502.6 1024.5 502.8 1026.5 498C1028.3 493.7 1028 493.6 1029 489C1030 484.5 1030.4 484.6 1030.5 480C1030.6 476.4 1029.8 476.5 1029.3 473C1028.7 468.5 1029.2 468.4 1028.3 464C1027.2 458.4 1026.9 458.5 1025.3 453C1023.9 448 1023.8 448 1022.3 443C1020.9 438 1021.1 437.9 1019.5 433C1018 428.5 1016 424.2 1016 424.2C1016 424.2 1011.3 430 1011.3 430C1011.3 430 1012.5 426.5 1011.9 423C1011.1 418.7 1011.3 418.3 1008.5 415C1005.4 411.3 1005 411.3 1000.5 409.5C996.7 408 992.3 408.7 992.3 408.7C992.3 408.7 991.9 405.1 989.5 403C986.2 400.2 985.7 400.5 981.5 399.5C977.6 398.6 973.5 399.2 973.5 399.2C973.5 399.2 971.9 397 969.5 396C966.7 394.9 965.3 395.5 963.5 395.2C963.3 395.2 964.2 395.2 964 395.2Z"/>
<clipPath id="cpal"><path d="M964 395.2C962.2 395.5 960.8 394.9 958 396C955.6 397 954 399.2 954 399.2C954 399.2 949.9 398.6 946 399.5C941.8 400.5 941.3 400.2 938 403C935.6 405.1 935.2 408.7 935.2 408.7C935.2 408.7 930.8 408 927 409.5C922.5 411.3 922.1 411.3 919 415C916.2 418.3 916.4 418.7 915.6 423C915 426.5 916.2 430 916.2 430C916.2 430 911.5 424.2 911.5 424.2C911.5 424.2 909.5 428.5 908 433C906.4 437.9 906.6 438 905.2 443C903.7 448 903.6 448 902.2 453C900.6 458.5 900.3 458.4 899.2 464C898.3 468.4 898.8 468.5 898.2 473C897.7 476.5 896.9 476.4 897 480C897.1 484.6 897.5 484.5 898.5 489C899.5 493.6 899.2 493.7 901 498C903 502.8 903.4 502.6 906 507C908.4 511.1 907.4 512 911 515C914.7 518.1 915.2 518.2 920 518.5C924.2 518.7 923.8 516.1 928 516C932.1 515.9 931.9 518.5 936 518C940.4 517.5 940.3 516.6 944 514.2C946.4 512.7 945.3 511.2 948 510.2C951.3 509 951.6 509.6 955 510.2C956.9 510.5 956.7 511.3 958.5 512C961.2 513 962.3 513 964 513.5C964.2 513.6 963.3 513.6 963.5 513.5C965.2 513 966.3 513 969 512C970.8 511.3 970.6 510.5 972.5 510.2C975.9 509.6 976.2 509 979.5 510.2C982.2 511.2 981.1 512.7 983.5 514.2C987.2 516.6 987.1 517.5 991.5 518C995.6 518.5 995.4 515.9 999.5 516C1003.7 516.1 1003.3 518.7 1007.5 518.5C1012.3 518.2 1012.8 518.1 1016.5 515C1020.1 512 1019.1 511.1 1021.5 507C1024.1 502.6 1024.5 502.8 1026.5 498C1028.3 493.7 1028 493.6 1029 489C1030 484.5 1030.4 484.6 1030.5 480C1030.6 476.4 1029.8 476.5 1029.3 473C1028.7 468.5 1029.2 468.4 1028.3 464C1027.2 458.4 1026.9 458.5 1025.3 453C1023.9 448 1023.8 448 1022.3 443C1020.9 438 1021.1 437.9 1019.5 433C1018 428.5 1016 424.2 1016 424.2C1016 424.2 1011.3 430 1011.3 430C1011.3 430 1012.5 426.5 1011.9 423C1011.1 418.7 1011.3 418.3 1008.5 415C1005.4 411.3 1005 411.3 1000.5 409.5C996.7 408 992.3 408.7 992.3 408.7C992.3 408.7 991.9 405.1 989.5 403C986.2 400.2 985.7 400.5 981.5 399.5C977.6 398.6 973.5 399.2 973.5 399.2C973.5 399.2 971.9 397 969.5 396C966.7 394.9 965.3 395.5 963.5 395.2C963.3 395.2 964.2 395.2 964 395.2Z"/></clipPath>
<path class="fan" d="M964 404.5C961.7 404.7 960.2 404.4 956.5 405.2C952.1 406.1 952.2 406.3 948 407.8C943.7 409.4 943.5 409.1 939.5 411.5C934.9 414.3 934.6 414 931 418C927.5 421.9 927.7 422.2 925.5 427C922.9 432.8 921.9 432.7 921.5 439C921.1 445.6 920.2 446.6 924 452C928.6 458.5 930.2 457 937 461C943.7 465 943.2 468.3 951 468C958.6 467.7 959.8 462.7 964 460C964.2 459.9 963.3 459.9 963.5 460C967.7 462.7 968.9 467.7 976.5 468C984.3 468.3 983.8 465 990.5 461C997.3 457 998.9 458.5 1003.5 452C1007.3 446.6 1006.4 445.6 1006 439C1005.6 432.7 1004.6 432.8 1002 427C999.8 422.2 1000 421.9 996.5 418C992.9 414 992.6 414.3 988 411.5C984 409.1 983.8 409.4 979.5 407.8C975.3 406.3 975.4 406.1 971 405.2C967.3 404.4 965.8 404.7 963.5 404.5C963.3 404.5 964.2 404.5 964 404.5Z"/>
<path d="M951.4 464.9L914.1 455.6M952.1 462.8L915.8 447M953.1 460.9L918.9 438.7M954.4 459.2L923.4 430.8M956 457.8L929.4 423.7M957.8 456.6L936.6 417.6M959.8 455.7L944.9 412.6M961.9 455.2L954.1 409M964 455L964 407M966.1 455.2L973.9 409M968.2 455.7L983.1 412.6M970.2 456.6L991.4 417.6M972 457.8L998.6 423.7M973.6 459.2L1004.6 430.8M974.9 460.9L1009.1 438.7M975.9 462.8L1012.2 447M976.6 464.9L1013.9 455.6" stroke="#9a9a9a" stroke-opacity=".55" stroke-width="1.600" fill="none" stroke-linecap="round"/>
<path class="r" d="M964 458C962.2 458.7 960.7 458.3 958 460C955 461.9 955.1 462.2 953 465C951.3 467.2 949.8 467.3 950.5 470C951.2 472.6 952.6 471.7 955 473C957.4 474.3 957.3 474.7 960 475C962 475.2 962.8 474.3 964 474C964.2 473.9 963.3 473.9 963.5 474C964.7 474.3 965.5 475.2 967.5 475C970.2 474.7 970.1 474.3 972.5 473C974.9 471.7 976.3 472.6 977 470C977.7 467.3 976.2 467.2 974.5 465C972.4 462.2 972.5 461.9 969.5 460C966.8 458.3 965.3 458.7 963.5 458C963.3 457.9 964.2 457.9 964 458Z"/>
<g clip-path="url(#cpal)">
<ellipse class="vol" cx="934.7" cy="493.6" rx="24" ry="20.500"/>
<path class="ridge" d="M925.6 511.3C925.1 500 929.3 491.3 938.7 486.7 S948 488.7 953.3 493.3"/>
<circle cx="954.4" cy="499.6" r="7.800" fill="#8a8a8a" stroke="#c9c9c9" stroke-width="1.600"/>
<circle cx="954.4" cy="499.6" r="3.600" fill="#d0d0d0" stroke="#555" stroke-width="1.300"/>
<ellipse class="vol" cx="993.3" cy="493.6" rx="24" ry="20.500"/>
<path class="ridge" d="M1002.4 511.3C1002.9 500 998.7 491.3 989.3 486.7 S980 488.7 974.7 493.3"/>
<circle cx="973.6" cy="499.6" r="7.800" fill="#8a8a8a" stroke="#c9c9c9" stroke-width="1.600"/>
<circle cx="973.6" cy="499.6" r="3.600" fill="#d0d0d0" stroke="#555" stroke-width="1.300"/>
<path d="M901 446L924 441M1027 446L1004 441M901 454L924 449M1027 454L1004 449M901 462L924 457M1027 462L1004 457M901 470L924 465M1027 470L1004 465M901 477L924 472M1027 477L1004 472" stroke="#777" stroke-width="1.200" fill="none"/>
</g>
<path class="r" d="M964 317.5C962.5 318 960.5 316.9 959 319C956.7 322.2 957.1 322.9 957 327C956.9 332.5 956.2 333.7 958.5 338C959.9 340.6 962.3 339.3 964 340C964.2 340.1 963.3 340.1 963.5 340C965.2 339.3 967.6 340.6 969 338C971.3 333.7 970.6 332.5 970.5 327C970.4 322.9 970.8 322.2 968.5 319C967 316.9 965 318 963.5 317.5C963.3 317.4 964.2 317.4 964 317.5Z"/>
<circle class="r" cx="964" cy="358" r="15.500"/>
<ellipse cx="964" cy="358" rx="4.800" ry="7.800" fill="#bcbcbc" stroke="#2a2a2a" stroke-width="2.600"/>
<path class="r" d="M964 514.7C961.7 514.7 959.2 512 956.7 514.7C953.8 517.8 956.1 519.4 955.3 524C954.4 529.4 954.7 529.4 953.3 534.7C951.7 540.8 952.7 541.3 949.3 546.7C946.5 551.3 946.6 552.8 941.3 554C936.5 555.1 934.7 549.6 932 550.7C929.3 551.8 931.6 554.4 933.3 557.3C935.8 561.4 936.3 561.1 940 564C943.7 566.8 943.8 566.7 948 568.7C951.8 570.4 951.9 570.3 956 571.3C959.9 572.3 961.5 572.2 964 572.7C964.2 572.7 963.3 572.7 963.5 572.7C966 572.2 967.6 572.3 971.5 571.3C975.6 570.3 975.7 570.4 979.5 568.7C983.7 566.7 983.8 566.8 987.5 564C991.2 561.1 991.7 561.4 994.2 557.3C995.9 554.4 998.2 551.8 995.5 550.7C992.8 549.6 991 555.1 986.2 554C980.9 552.8 981 551.3 978.2 546.7C974.8 541.3 975.8 540.8 974.2 534.7C972.8 529.4 973.1 529.4 972.2 524C971.4 519.4 973.7 517.8 970.8 514.7C968.3 512 965.8 514.7 963.5 514.7C963.2 514.7 964.2 514.7 964 514.7Z"/>
<path class="r" d="M964 570C960.6 570.4 957.8 568.3 953.3 571.3C949.4 574 951.4 575.7 949.3 580C946.1 586.7 946.1 586.7 942.7 593.3C939.8 598.7 938 599.6 936.7 604C936.2 605.6 938.7 606.7 938.7 606.7C938.7 606.7 941.2 603.8 942.7 605.3C945.3 608 945.1 609.9 946.7 614.7C948.4 619.9 949.3 625.3 949.3 625.3C949.3 625.3 950.9 618.2 953.3 620C955.8 621.8 956.7 630.7 956.7 630.7C956.7 630.7 958 625 960 626.7C962.4 628.7 964 636.7 964 636.7C964 636.7 963.5 636.7 963.5 636.7C963.5 636.7 965.1 628.7 967.5 626.7C969.5 625 970.8 630.7 970.8 630.7C970.8 630.7 971.7 621.8 974.2 620C976.6 618.2 978.2 625.3 978.2 625.3C978.2 625.3 979.1 619.9 980.8 614.7C982.4 609.9 982.2 608 984.8 605.3C986.3 603.8 988.8 606.7 988.8 606.7C988.8 606.7 991.3 605.6 990.8 604C989.5 599.6 987.7 598.7 984.8 593.3C981.4 586.7 981.4 586.7 978.2 580C976.1 575.7 978.1 574 974.2 571.3C969.7 568.3 966.9 570.4 963.5 570C963.3 570 964.2 570 964 570Z"/>
<path d="M964 573.3Q964 609.3 964 633.3M967 573.3Q970 609.3 969.4 624.9M961 573.3Q958 609.3 958.6 624.9M970 573.3Q976 609.3 974.8 616.5M958 573.3Q952 609.3 953.2 616.5M973.3 573.3Q982.7 604 980.8 607.2M954.7 573.3Q945.3 604 947.2 607.2" stroke="#5e5e5e" stroke-width="1.300" fill="none" stroke-opacity=".8"/>
<path d="M964 532L964 566.7M967.2 532L972 566.7M960.8 532L956 566.7M970.9 532L981.3 566.7M957.1 532L946.7 566.7" stroke="#666" stroke-width="1.300" fill="none" stroke-opacity=".8"/>
</g>
</svg>

<!-- right.html -->
<div class="a" style="left:1572px;top:54px;width:348px;height:1000px;background:#f0f0f0;"></div>
<div class="a" style="left:1578px;top:55px;width:2px;height:998px;background:#b4b4b4;"></div>
<div class="a" style="left:1580px;top:55px;width:1px;height:998px;background:#fdfdfd;"></div>
<div class="rh" style="top:56px"><i class="dn"></i></div>
<div class="t" style="left:1595.00px;top:57.88px;font-size:15.50px;letter-spacing:-0.035px;font-weight:bold;color:#fff;">Vectors</div>
<div class="rh" style="top:95px"><i class=""></i></div>
<div class="t" style="left:1595.00px;top:96.88px;font-size:15.50px;transform:scaleX(0.9452);transform-origin:0 0;font-weight:bold;color:#fff;">Bitmaps</div>
<div class="rh" style="top:197px"><i class=""></i></div>
<div class="t" style="left:1595.00px;top:198.88px;font-size:15.50px;transform:scaleX(0.9345);transform-origin:0 0;font-weight:bold;color:#fff;">Reliefs</div>
<div class="a" style="left:1590px;top:147px;width:304px;height:30px;background:#d5d5d5;"></div>
<div class="t" style="left:1622.40px;top:154.70px;font-size:15.00px;letter-spacing:0.055px;color:#222;">Bitmap Layer 1</div>
<div class="a" style="left:1591px;top:217px;width:299px;height:28px;background:#fff;border:2px solid;border-color:#7a7a7a #e8e8e8 #e8e8e8 #7a7a7a"></div>
<div class="a" style="left:1868px;top:219px;width:21px;height:25px;background:#f0f0f0;border:1px solid;border-color:#fff #777 #777 #fff;box-shadow:1px 1px 0 #aaa"></div>
<div class="a" style="left:1874px;top:229px;border:5px solid transparent;border-bottom:0;border-top:5px solid #111"></div>
<div class="t" style="left:1593.80px;top:220.68px;font-size:15.50px;letter-spacing:-0.128px;color:#111;">Front Relief</div>
<div class="a" style="left:1590px;top:281px;width:304px;height:32px;background:#d5d5d5;"></div>
<div class="arr" style="left:1635px;top:292.500px;border-width:5px 0 5px 6px"></div>
<div class="t" style="left:1648.50px;top:289.80px;font-size:15.00px;color:#222;">Relief Layer 1</div>

<!-- bottom.html -->
<svg class="a" style="left:0;top:0" width="1920" height="1080" viewBox="0 0 1920 1080"><defs><filter id="tex" x="0" y="0" width="100%" height="100%"><feTurbulence type="fractalNoise" baseFrequency="0.28 0.22" numOctaves="2" seed="7"/><feColorMatrix type="matrix" values="0 0 0 0 0.94  0 0 0 0 0.94  0 0 0 0 0.94  1.6 1.6 0 0 -1.05"/><feComposite operator="over" in2="SourceGraphic"/></filter></defs><rect x="0" y="1021.500" width="338.500" height="32" fill="#d3d3d3" filter="url(#tex)"/><rect x="1581" y="1021.500" width="339" height="32" fill="#d3d3d3" filter="url(#tex)"/><path d="M78 1022h260.500M1641 1022h279" stroke="#b6b6b6" stroke-width="1.200" fill="none"/><path d="M0 1053.800h345" stroke="#ababab" stroke-width="1.400" fill="none"/><path d="M1581 1053.500h339" stroke="#bdbdbd" stroke-width="1.200" fill="none"/></svg>
<div class="a" style="left:0px;top:1020px;width:78px;height:33px;background:#f0f0f0;border-radius:0 0 8px 8px;border-right:1px solid #c8c8c8;border-bottom:1.500px solid #a8a8a8"></div>
<div class="a" style="left:78.5px;top:1022px;width:82px;height:31px;background:#f0f0f0;border-radius:0 0 8px 8px;border:1px solid;border-color:#c0c0c0 #bcbcbc #a8a8a8 #fdfdfd"></div>
<div class="t" style="left:10.30px;top:1028.75px;font-size:15.30px;transform:scaleX(0.9344);transform-origin:0 0;">Assistant</div>
<div class="t" style="left:88.30px;top:1029.75px;font-size:15.30px;letter-spacing:-0.012px;">Toolpaths</div>
<div class="a" style="left:1581px;top:1020px;width:60px;height:33px;background:#f0f0f0;border-radius:0 0 8px 8px;border-bottom:1.500px solid #a8a8a8"></div>
<div class="a" style="left:1641px;top:1022px;width:61px;height:31px;background:#f0f0f0;border-radius:0 0 8px 8px;border:1px solid;border-color:#c0c0c0 #bcbcbc #a8a8a8 #fdfdfd"></div>
<div class="t" style="left:1591.30px;top:1028.35px;font-size:15.30px;transform:scaleX(0.8862);transform-origin:0 0;">Layers</div>
<div class="t" style="left:1651.30px;top:1029.55px;font-size:15.30px;letter-spacing:-0.247px;">Add In</div>
<div class="a" style="left:0px;top:1054.5px;width:1920px;height:26px;background:#f0f0f0;"></div>
<div class="a" style="left:1575px;top:1054.5px;width:345px;height:1px;background:#c8c8c8;"></div>
<div class="a" style="left:0px;top:1078.5px;width:1920px;height:1.5px;background:#dedede;"></div>
<div class="a" style="left:1491px;top:1058.500px;width:82px;height:22px;border:1px solid;border-color:#b0b0b0 #fff #fff #b0b0b0"></div>
<div class="a" style="left:1577px;top:1058.500px;width:83px;height:22px;border:1px solid;border-color:#b0b0b0 #fff #fff #b0b0b0"></div>
<div class="a" style="left:1664px;top:1058.500px;width:74px;height:22px;border:1px solid;border-color:#b0b0b0 #fff #fff #b0b0b0"></div>
<div class="a" style="left:1742.5px;top:1058.500px;width:87.5px;height:22px;border:1px solid;border-color:#b0b0b0 #fff #fff #b0b0b0"></div>
<div class="a" style="left:1834px;top:1058.500px;width:86px;height:22px;border:1px solid;border-color:#b0b0b0 #fff #fff #b0b0b0"></div>
<div class="t" style="left:1493.80px;top:1062.30px;font-size:15.00px;transform:scaleX(0.8889);transform-origin:0 0;color:#222;">X: 391.089</div>
<div class="t" style="left:1580.00px;top:1062.30px;font-size:15.00px;transform:scaleX(0.8894);transform-origin:0 0;color:#222;">Y: 280.941</div>
<div class="a" style="left:1918.8px;top:30px;width:1.2px;height:1050px;background:#5e5e5e;"></div>

<!-- icons1.html -->
<svg class="a" style="left:0;top:0" width="1920" height="1080" viewBox="0 0 1920 1080">
<defs>
<linearGradient id="ipg" x1="0" y1="0" x2="1" y2="1"><stop offset="0" stop-color="#b9c7e2"/><stop offset="1" stop-color="#7b8fb6"/></linearGradient>
<linearGradient id="ifl" x1="0" y1="0" x2="0" y2="1"><stop offset="0" stop-color="#ffee30"/><stop offset="1" stop-color="#e6c614"/></linearGradient>
<linearGradient id="isv" x1="0" y1="0" x2="0" y2="1"><stop offset="0" stop-color="#2d6fd8"/><stop offset="1" stop-color="#1848a8"/></linearGradient>
<linearGradient id="imo" x1="0" y1="0" x2="1" y2="1"><stop offset="0" stop-color="#8fd0f6"/><stop offset="1" stop-color="#4a7fd0"/></linearGradient>
<linearGradient id="igy" x1="0" y1="0" x2="0" y2="1"><stop offset="0" stop-color="#e4e4e4"/><stop offset="1" stop-color="#b8b8b8"/></linearGradient>
<filter id="isoft" x="-20%" y="-20%" width="140%" height="140%"><feGaussianBlur stdDeviation="0.35"/></filter>
<filter id="ishd" x="-30%" y="-30%" width="160%" height="160%"><feGaussianBlur stdDeviation="0.9"/></filter>
</defs>
<g transform="translate(15 193) scale(0.13541)" filter="url(#isoft)">
<path d="M135 215h150l-50 55h-105z" fill="#a9a9a9" opacity=".8"/>
<path d="M105 75h85l50 60v130h-135z" fill="url(#ipg)"/><path d="M188 75l52 62h-45z" fill="#eef2fa"/>
<path d="M520 235h180l-40 30h-150z" fill="#b0b0b0" opacity=".7"/>
<path d="M450 110q10-25 40-28h45l20 18h65q12 2 12 14v90l-170 55q-14-2-14-16z" fill="#f4d90c"/>
<path d="M478 268q-12-40 12-62 12-14 40-16l150-6q10 6 2 20l-32 52z" fill="url(#ifl)"/>
<path d="M478 268l180-16" stroke="#c8a808" stroke-width="6" fill="none"/>
<path d="M905 265h130l55-55h-60z" fill="#aaa" opacity=".8"/>
<rect x="852" y="90" width="183" height="176" rx="10" fill="url(#isv)"/>
<rect x="890" y="92" width="112" height="92" fill="#e6e8ee"/><rect x="890" y="92" width="112" height="30" fill="#c4c8d2"/>
<rect x="903" y="200" width="92" height="66" fill="#ccd2de"/><rect x="918" y="212" width="28" height="46" rx="8" fill="#2456b8"/>
<ellipse cx="1295" cy="265" rx="80" ry="36" fill="#d4dcf0" stroke="#8d9bc8" stroke-width="5"/>
<path d="M1295 205l40-10 20 75h-50z" fill="#8a96c8"/>
<path d="M1228 90l130-30 15 150-125 22z" fill="url(#imo)" stroke="#5a8ad0" stroke-width="6"/>
<path d="M1262 158l30 40 42-105" fill="none" stroke="#6a2050" stroke-width="11"/>
<circle cx="1405" cy="188" r="50" fill="#e49a16"/><circle cx="1405" cy="188" r="62" fill="none" stroke="#d88c10" stroke-width="18" stroke-dasharray="22 18"/><rect x="1398" y="140" width="12" height="50" fill="#5c3a10"/>
<path d="M95 560h80M220 575h60" stroke="#c8c8c8" stroke-width="10"/>
<path d="M150 500q40-40 90-25 45 20 25 70l-25 30" fill="none" stroke="#8c8c8c" stroke-width="24" stroke-linecap="round"/><path d="M90 478l8 75 85-10z" fill="#8c8c8c"/>
<path d="M590 575h70M490 575h40" stroke="#c8c8c8" stroke-width="10"/>
<path d="M610 505q-40-45-90-28-45 20-30 65l28 30" fill="none" stroke="#8c8c8c" stroke-width="24" stroke-linecap="round"/><path d="M665 478l-5 75-85-12z" fill="#8c8c8c"/>
<path d="M905 420l65 140M1000 420l-60 140" stroke="#a9a9a9" stroke-width="12" fill="none"/><ellipse cx="905" cy="585" rx="26" ry="34" transform="rotate(25 905 585)" fill="none" stroke="#a9a9a9" stroke-width="10"/><ellipse cx="1010" cy="580" rx="26" ry="34" transform="rotate(-25 1010 580)" fill="none" stroke="#a9a9a9" stroke-width="10"/>
<path d="M1300 600h120l35-30h-80z" fill="#c4c4c4"/>
<path d="M1240 410h90l30 35v140h-120z" fill="#c9c9c9"/><path d="M1295 445h90l40 40v130h-130z" fill="#cfcfcf" stroke="#dcdcdc" stroke-width="4"/>
<path d="M1700 630h110l40-40h-80z" fill="#b4b4b4"/>
<rect x="1645" y="418" width="150" height="198" rx="8" fill="#d23a24"/><rect x="1645" y="418" width="40" height="198" fill="#b82c1c"/><path d="M1690 392h58l12 14-18 34h-46l-18-34z" fill="#b9c0c4"/>
<path d="M1700 482h95l32 36v108h-127z" fill="#e8b07a"/><path d="M1715 505h70M1715 530h90M1715 555h90M1715 580h90" stroke="#caa070" stroke-width="8"/>
</g>
</svg>
<!-- icons10.html -->
<svg class="a" style="left:0;top:0" width="1920" height="1080" viewBox="0 0 1920 1080">
<defs><radialGradient id="ilens" cx=".4" cy=".35" r=".8"><stop offset="0" stop-color="#f4fcff"/><stop offset="1" stop-color="#b8dcec"/></radialGradient></defs>
<g transform="translate(376 55) scale(0.16667)" filter="url(#isoft)">
<path d="M135 128l28 24" stroke="#d8904a" stroke-width="22" stroke-linecap="round"/><circle cx="105" cy="98" r="44" fill="url(#ilens)" stroke="#6c8cac" stroke-width="10"/><path d="M78 98h54M105 71v54" stroke="#3c5878" stroke-width="11"/>
<path d="M305 128l28 24" stroke="#d8904a" stroke-width="22" stroke-linecap="round"/><circle cx="275" cy="98" r="44" fill="url(#ilens)" stroke="#6c8cac" stroke-width="10"/><path d="M248 98h54" stroke="#6a7c94" stroke-width="11"/>
<path d="M478 128l28 24" stroke="#d8904a" stroke-width="22" stroke-linecap="round"/><circle cx="448" cy="98" r="44" fill="url(#ilens)" stroke="#6c8cac" stroke-width="10"/><path d="M468 112q8-32-22-36-24 2-22 24" fill="none" stroke="#a89830" stroke-width="10"/><path d="M410 96l16 22 18-20z" fill="#a89830"/>
<path d="M710 128l28 24" stroke="#d8904a" stroke-width="22" stroke-linecap="round"/><circle cx="680" cy="98" r="44" fill="url(#ilens)" stroke="#6c8cac" stroke-width="10"/><text x="651" y="113" font-family="Liberation Sans,sans-serif" font-weight="bold" font-size="40" fill="#7890a8" textLength="58">1:1</text>
<path d="M882 128l28 24" stroke="#d8904a" stroke-width="22" stroke-linecap="round"/><circle cx="852" cy="98" r="44" fill="url(#ilens)" stroke="#6c8cac" stroke-width="10"/><rect x="828" y="80" width="48" height="36" fill="none" stroke="#5c7898" stroke-width="9"/>
<path d="M1055 135l30 18" stroke="#b0b0b0" stroke-width="24" stroke-linecap="round"/><circle cx="1022" cy="100" r="46" fill="#a4a4a4"/>
<path d="M1240 72h40M1240 92h25M1240 150h40M1240 168h40M1240 130h25" stroke="#444" stroke-width="6" stroke-dasharray="8 4"/><path d="M1262 118l38-36v20h36v34h-36v20z" fill="#3c3c3c"/><path d="M1300 110h34v18h-34z" fill="#8a8a8a"/>
<path d="M1465 72h40M1480 92h25M1465 150h40M1465 168h40M1480 130h25" stroke="#444" stroke-width="6" stroke-dasharray="8 4"/><path d="M1470 118l-38-36v20h-36v34h36v20z" fill="#3c3c3c"/><path d="M1398 110h34v18h-34z" fill="#8a8a8a"/>
<path d="M1555 108l55-38v76z" fill="#7070c8"/><path d="M1650 128l22 18" stroke="#d8904a" stroke-width="14" stroke-linecap="round"/><circle cx="1628" cy="100" r="30" fill="#c8dcf0" stroke="#8c9cc4" stroke-width="8"/>
</g>
</svg>
<!-- icons2.html -->
<svg class="a" style="left:0;top:0" width="1920" height="1080" viewBox="0 0 1920 1080">
<defs>
<linearGradient id="imona" x1="0" y1="0" x2="1" y2="0"><stop offset="0" stop-color="#1a1408"/><stop offset=".55" stop-color="#3a3418"/><stop offset="1" stop-color="#8a9a58"/></linearGradient>
<linearGradient id="ibook" x1="0" y1="0" x2="1" y2="1"><stop offset="0" stop-color="#f09a30"/><stop offset="1" stop-color="#c86810"/></linearGradient>
<radialGradient id="ilamp" cx=".4" cy=".4" r=".7"><stop offset="0" stop-color="#ff4038"/><stop offset="1" stop-color="#c00810"/></radialGradient>
</defs>
<g transform="translate(15 318) scale(0.13541)" filter="url(#isoft)">
<path d="M60 45h240l-25 250h-245z" fill="#e9e9e9" stroke="#bdbdbd" stroke-width="6"/>
<path d="M85 62h205M50 90l-12 190" stroke="#8a8a8a" stroke-width="10" stroke-dasharray="6 10" fill="none"/>
<path d="M80 85h205l-18 205h-200z" fill="#fbfbfb"/>
<ellipse cx="165" cy="215" rx="85" ry="72" fill="#c84848"/><circle cx="170" cy="140" r="52" fill="#d85858"/><circle cx="128" cy="105" r="18" fill="#c84040"/><circle cx="215" cy="105" r="18" fill="#c84040"/><ellipse cx="170" cy="230" rx="42" ry="40" fill="#f6c8c8"/><ellipse cx="172" cy="155" rx="22" ry="16" fill="#f0b0b0"/><circle cx="118" cy="262" r="22" fill="#b83838"/><circle cx="220" cy="262" r="22" fill="#b83838"/>
<path d="M238 140h30M253 140v34" stroke="#222" stroke-width="9" fill="none"/>
<path d="M340 155l40 33l-40 33z" fill="#0a0a0a"/>
<path d="M660 230l45-20-30 70z" fill="#bdbdbd"/>
<rect x="460" y="70" width="205" height="222" fill="#060606"/>
<ellipse cx="548" cy="205" rx="78" ry="68" fill="#9a9a9a"/><circle cx="552" cy="130" r="50" fill="#a4a4a4"/><circle cx="512" cy="98" r="17" fill="#b4b4b4"/><circle cx="595" cy="98" r="17" fill="#b4b4b4"/><ellipse cx="548" cy="215" rx="36" ry="34" fill="#6e6e6e"/><circle cx="500" cy="255" r="20" fill="#c8c8c8"/><circle cx="600" cy="255" r="20" fill="#c8c8c8"/>
<path d="M618 125h32M634 125v36" stroke="#fff" stroke-width="9" fill="none"/>
<ellipse cx="1020" cy="240" rx="80" ry="22" fill="#fffef4"/>
<ellipse cx="850" cy="238" rx="40" ry="14" fill="#8a8a8a"/>
<ellipse cx="925" cy="230" rx="62" ry="22" fill="url(#ilamp)"/>
<path d="M905 215l-22-45 32-60" stroke="#b01018" stroke-width="14" fill="none"/>
<path d="M890 85q30-35 70-22l55 18q-10 50-75 95l-15-55z" fill="url(#ilamp)"/>
<rect x="1210" y="45" width="190" height="228" fill="url(#imona)"/>
<path d="M1225 270q5-90 45-120-20-60 25-95 50-10 60 50 5 50-15 70 45 25 50 95z" fill="#1c1206"/>
<ellipse cx="1288" cy="118" rx="32" ry="42" fill="#d8a868"/><path d="M1250 215q35-40 80-5l10 60h-100z" fill="#c08840"/>
<path d="M1290 262l105-82 72 22-105 112z" fill="url(#ibook)"/><path d="M1290 262l72 50-8 8-78-48z" fill="#f4e4c0"/>
</g>
</svg>
<!-- icons3.html -->
<svg class="a" style="left:0;top:0" width="1920" height="1080" viewBox="0 0 1920 1080">
<g transform="translate(15 400) scale(0.13541)" filter="url(#isoft)">
<path d="M120 612l160-48" stroke="#a9a9a9" stroke-width="16" stroke-linecap="round"/>
<path d="M215 468l-75 118" stroke="#e02030" stroke-width="24" stroke-linecap="round"/><path d="M222 478l-70 110" stroke="#f06a70" stroke-width="6"/><path d="M140 580l-18 30 26-16z" fill="#6a5a30"/>
<path d="M340 510l40 33l-40 33z" fill="#0a0a0a"/>
<ellipse cx="610" cy="610" rx="70" ry="26" fill="none" stroke="#b0b0b0" stroke-width="8"/>
<path d="M520 510q60-40 110 5l10 95q-50 30-100 5z" fill="#8aa8a4"/><ellipse cx="578" cy="512" rx="58" ry="30" transform="rotate(15 578 512)" fill="#b8cac6"/>
<path d="M480 585q-10-60 30-100 40-25 80-5-10 40-50 50-30 10-35 55z" fill="#e02828"/>
<path d="M725 510l40 33l-40 33z" fill="#0a0a0a"/>
<path d="M900 620h50M990 590l70-15" stroke="#a9a9a9" stroke-width="12" stroke-linecap="round"/>
<path d="M955 515l-62 85" stroke="#e8e8f4" stroke-width="26" stroke-linecap="round"/><path d="M925 560l-35 45" stroke="#3848c0" stroke-width="20" stroke-linecap="round"/>
<circle cx="982" cy="472" r="30" fill="#901838"/><path d="M940 495l55 30" stroke="#701028" stroke-width="18" stroke-linecap="round"/>
<ellipse cx="1350" cy="600" rx="105" ry="20" fill="#b4b4b4"/>
<path d="M1220 520q15-60 75-55 30 10 50 30 50-25 95-5 20 50-10 95-60 40-150 25-60-20-60-90z" fill="#7a5040"/><ellipse cx="1285" cy="508" rx="14" ry="24" transform="rotate(-30 1285 508)" fill="#e8e8e8"/>
<circle cx="1248" cy="558" r="14" fill="#d82020"/>
<circle cx="1275" cy="580" r="14" fill="#f0a010"/>
<circle cx="1305" cy="585" r="14" fill="#f0e020"/>
<circle cx="1342" cy="580" r="14" fill="#40b830"/>
<circle cx="1380" cy="568" r="14" fill="#30c0d8"/>
<circle cx="1412" cy="548" r="14" fill="#2030c0"/>
<path d="M1505 510l40 33l-40 33z" fill="#0a0a0a"/>
<ellipse cx="1740" cy="610" rx="120" ry="18" fill="#bcbcbc"/>
<path d="M1760 470q90 40 75 120-30 30-80 10" fill="none" stroke="#3838a8" stroke-width="9"/><circle cx="1762" cy="468" r="9" fill="#181860"/><circle cx="1836" cy="540" r="9" fill="#181860"/>
<path d="M1600 520l80-72 80 50 10 80-60 45-80-20z" fill="#f8e820"/><path d="M1690 540l45-40 40 30-10 60-50 20z" fill="#f4d818"/>
</g>
</svg>
<!-- icons4.html -->
<svg class="a" style="left:0;top:0" width="1920" height="1080" viewBox="0 0 1920 1080">
<defs><linearGradient id="inest" x1="0" y1="0" x2="1" y2=".3"><stop offset="0" stop-color="#0c1c0c"/><stop offset=".5" stop-color="#3c8c3c"/><stop offset="1" stop-color="#78b878"/></linearGradient></defs>
<g transform="translate(15 527) scale(0.13541)" filter="url(#isoft)">
<rect x="10" y="25" width="312" height="325" fill="#fbfbfb"/><path d="M10 350V25h312" fill="none" stroke="#c8c8c8" stroke-width="7"/>
<path d="M120 230l40-30 60 70 20-15-60-70 45-25-140-55z" fill="#b8b8b8" transform="translate(-15 5)"/>
<path d="M90 105l140 70-52 18 62 62-25 22-62-62-28 45z" fill="#5a5a5a"/>
<path d="M340 160l40 33l-40 33z" fill="#0a0a0a"/>
<path d="M555 110l40 45h-25v30h30v-25l45 40-45 40v-25h-30v30h25l-40 45-40-45h25v-30h-30v25l-45-40 45-40v25h30v-30h-25z" fill="#4a4a4a"/>
<path d="M600 80q70 30 80 115M505 300q-65-30-75-110" fill="none" stroke="#4a4a4a" stroke-width="20"/><path d="M575 85l55-30v55zM535 295l-50 30v-55z" fill="#4a4a4a"/>
<path d="M435 88h75M445 125h70M630 250v65M665 245v70" stroke="#4a4a4a" stroke-width="11"/><path d="M500 70l25 18-25 18zM455 108l-25 17 25 18zM613 262l17-25 17 25zM648 300l17 25 17-25z" fill="#4a4a4a"/>
<path d="M880 250h190l-20 30h-170z" fill="#c4c4c4"/><rect x="861" y="106" width="180" height="180" fill="#eee" stroke="#4a4a4a" stroke-width="13"/><path d="M870 240h165v38h-165z" fill="#d0d0d0"/>
<path d="M1115 160l40 33l-40 33z" fill="#0a0a0a"/>
<path d="M1270 242h200" stroke="#c4c4c4" stroke-width="22"/>
<path d="M1245 100h200v35h-80v150h-40v-150h-80z" fill="#f0a018" stroke="#c87808" stroke-width="5"/>
<circle cx="1250" cy="100" r="11" fill="#2020a0"/>
<circle cx="1440" cy="100" r="11" fill="#2020a0"/>
<circle cx="1248" cy="155" r="11" fill="#2020a0"/>
<circle cx="1438" cy="155" r="11" fill="#2020a0"/>
<circle cx="1330" cy="130" r="11" fill="#2020a0"/>
<circle cx="1360" cy="130" r="11" fill="#2020a0"/>
<circle cx="1310" cy="270" r="11" fill="#2020a0"/>
<circle cx="1378" cy="270" r="11" fill="#2020a0"/>
<circle cx="1300" cy="292" r="11" fill="#2020a0"/>
<circle cx="1385" cy="292" r="11" fill="#2020a0"/>
<path d="M1585 190l75-75 60 40M1585 190l70 60" fill="none" stroke="#cfcfcf" stroke-width="8"/><ellipse cx="1750" cy="170" rx="65" ry="50" fill="#d6d6d6"/><ellipse cx="1740" cy="160" rx="35" ry="25" fill="#c4c4c4"/><ellipse cx="1740" cy="240" rx="100" ry="22" fill="#dcdcdc"/>
<path d="M1890 160l40 33l-40 33z" fill="#0a0a0a"/>
<path d="M180 560l130 35-10 25-130-30z" fill="#e8d860"/><path d="M230 540l50 20v30l-50-15z" fill="#a8a8a8"/>
<path d="M50 480q20-50 80-50l60 15q40 30 30 100l-30 50q-60 15-110-15-40-40-30-100z" fill="#e8a020"/><ellipse cx="125" cy="510" rx="62" ry="50" fill="#28388c"/><path d="M65 530q60 30 120-5l-10 40q-50 20-100-5z" fill="#d8d8e0"/>
<rect x="446" y="406" width="228" height="228" rx="22" fill="#0e8c0e" stroke="#90e090" stroke-width="7"/>
<path d="M530 440h60v55h55v60h-55v55h-60v-55h-55v-60h55z" fill="none" stroke="#b8f0b8" stroke-width="9"/>
<rect x="820" y="395" width="268" height="262" fill="url(#inest)"/>
<path d="M835 565h250M1060 400v255" stroke="#0c2c0c" stroke-width="9"/>
<circle cx="873" cy="440" r="20" fill="#0a1a0a"/><rect x="922" y="420" width="28" height="42" fill="#0a1a0a"/><path d="M965 462l35-40 38 40z" fill="#143014"/>
<circle cx="873" cy="608" r="20" fill="#143014"/><rect x="922" y="588" width="28" height="42" fill="#143014"/><path d="M965 630l35-40 38 40z" fill="#1c3c1c"/>
<text x="850" y="540" font-size="78" font-family="Liberation Sans,sans-serif" fill="#0c200c" textLength="180">ABC</text>
<path d="M1222 408q125 25 245 0-25 115 0 228-120-25-245 0 25-115 0-228z" fill="#e0e0e0" stroke="#a9a9a9" stroke-width="9"/>
<path d="M1235 465q110 15 220 0M1232 525h228M1235 585q110-15 220 0M1285 415q15 110 0 215M1345 418v210M1405 415q-15 110 0 215" fill="none" stroke="#b0b0b0" stroke-width="7"/><ellipse cx="1345" cy="520" rx="62" ry="85" fill="none" stroke="#b4b4b4" stroke-width="10"/>
<rect x="1615" y="570" width="34" height="34" fill="none" stroke="#a4a4a4" stroke-width="11" transform="translate(-17 -17)"/>
<rect x="1678" y="570" width="34" height="34" fill="none" stroke="#a4a4a4" stroke-width="11" transform="translate(-17 -17)"/>
<rect x="1678" y="632" width="34" height="34" fill="none" stroke="#a4a4a4" stroke-width="11" transform="translate(-17 -17)"/>
<circle cx="1728" cy="448" r="20" fill="none" stroke="#a4a4a4" stroke-width="11"/>
<circle cx="1838" cy="442" r="20" fill="none" stroke="#a4a4a4" stroke-width="11"/>
<circle cx="1725" cy="510" r="20" fill="none" stroke="#a4a4a4" stroke-width="11"/>
<circle cx="1838" cy="510" r="20" fill="none" stroke="#a4a4a4" stroke-width="11"/>
<circle cx="1782" cy="548" r="20" fill="none" stroke="#a4a4a4" stroke-width="11"/>
<circle cx="1780" cy="485" r="6" fill="#a4a4a4"/>
</g>
</svg>
<!-- icons5.html -->
<svg class="a" style="left:0;top:0" width="1920" height="1080" viewBox="0 0 1920 1080">
<defs><radialGradient id="ibowl" cx=".5" cy=".3" r=".8"><stop offset="0" stop-color="#b0b0f8"/><stop offset="1" stop-color="#5050c8"/></radialGradient>
<linearGradient id="iyf" x1="0" y1="0" x2="0" y2="1"><stop offset="0" stop-color="#fff020"/><stop offset="1" stop-color="#c8a808"/></linearGradient></defs>
<g transform="translate(15 618) scale(0.13541)" filter="url(#isoft)">
<rect x="67" y="65" width="32" height="32" fill="#fff" stroke="#111" stroke-width="9"/>
<path d="M90 245l55-60 55 35 30 45 45-42" fill="none" stroke="#222" stroke-width="13"/>
<circle cx="90" cy="248" r="27" fill="#f4f8a0" stroke="#a0a838" stroke-width="5"/><circle cx="90" cy="248" r="8" fill="#333"/>
<circle cx="142" cy="185" r="27" fill="#f4f8a0" stroke="#a0a838" stroke-width="5"/><circle cx="142" cy="185" r="8" fill="#333"/>
<circle cx="200" cy="222" r="27" fill="#f4f8a0" stroke="#a0a838" stroke-width="5"/><circle cx="200" cy="222" r="8" fill="#333"/>
<circle cx="275" cy="222" r="27" fill="#f4f8a0" stroke="#a0a838" stroke-width="5"/><circle cx="275" cy="222" r="8" fill="#333"/>
<path d="M440 180l75-65h40l50 70 50-55" fill="none" stroke="#c0c0c0" stroke-width="12"/><path d="M450 250q80-80 200 0M470 285q70-50 170 0" fill="none" stroke="#dcdcdc" stroke-width="9" stroke-dasharray="14 8"/><path d="M540 130v50" stroke="#c0c0c0" stroke-width="8"/>
<path d="M820 55q80 20 85 120-5 100-85 125" fill="none" stroke="#a9a9a9" stroke-width="16"/><rect x="812" y="45" width="28" height="28" fill="#a9a9a9"/><rect x="812" y="285" width="28" height="28" fill="#a9a9a9"/>
<path d="M890 65l60 20M890 285l60-25M935 178h80" stroke="#b4b4b4" stroke-width="8"/><rect x="940" y="75" width="26" height="26" fill="#b4b4b4"/><rect x="940" y="250" width="26" height="26" fill="#b4b4b4"/><rect x="988" y="45" width="26" height="26" fill="#bcbcbc"/><rect x="988" y="285" width="26" height="26" fill="#bcbcbc"/><rect x="1062" y="165" width="22" height="24" fill="none" stroke="#c4c4c4" stroke-width="6"/>
<path d="M1205 55l270 110-270 135" fill="none" stroke="#8c8c8c" stroke-width="17"/><path d="M1205 55l70 30M1205 300l75-38" stroke="#111" stroke-width="18"/>
<path d="M1275 85q75 40 75 95 0 50-70 85" fill="none" stroke="#f4f8a8" stroke-width="17"/>
<path d="M1650 255l180-175" stroke="#f0f4a8" stroke-width="26"/>
<path d="M1760 50l100-5M1810 50l45 90M1590 200l50 100M1600 300l100 15" stroke="#0a0a0a" stroke-width="26" fill="none"/>
<path d="M1705 155l70 55M1700 225l85-15" stroke="#0a0a0a" stroke-width="10"/><path d="M1715 150l55 45-10 15-60-45z" fill="#fff" stroke="#0a0a0a" stroke-width="7"/><circle cx="1825" cy="215" r="22" fill="none" stroke="#0a0a0a" stroke-width="14"/><circle cx="1795" cy="265" r="22" fill="none" stroke="#0a0a0a" stroke-width="14"/>
<ellipse cx="175" cy="605" rx="135" ry="32" fill="#a4a4a4"/>
<path d="M70 440q-30 60-20 120 50 60 125 58 80 0 125-58 10-60-15-120z" fill="url(#ibowl)"/><ellipse cx="180" cy="430" rx="108" ry="26" fill="none" stroke="#4a4a58" stroke-width="11"/><path d="M80 530l95-40 100 40" fill="none" stroke="#d8d870" stroke-width="7"/><path d="M175 450v140" stroke="#c8c8ff" stroke-width="14" opacity=".7"/>
<path d="M545 385q-30 90-90 150" fill="none" stroke="#a9a9a9" stroke-width="13"/><path d="M550 388h95M535 475l60 40M430 545l40 80" stroke="#c0c0c0" stroke-width="9" stroke-dasharray="30 10"/><circle cx="545" cy="385" r="10" fill="#a0a0a0"/><circle cx="435" cy="548" r="10" fill="#b0b0b0"/>
<path d="M935 400v240" stroke="#9c9c9c" stroke-width="9" stroke-dasharray="40 10 8 10"/><path d="M920 425q-50 0-50 55l20 40q-30 40-35 100h65" fill="none" stroke="#9c9c9c" stroke-width="8"/><path d="M950 530q60-20 75 30l-20 60" fill="none" stroke="#d8d8d8" stroke-width="7" stroke-dasharray="12 8"/>
<ellipse cx="1370" cy="625" rx="110" ry="20" fill="#b8b8b8"/>
<path d="M1205 470q20-50 70-40l100 20 90 100-20 40-225 50q-25-80-15-170z" fill="#f4e010"/><path d="M1220 640q0-50 30-62l220-30-20 60z" fill="url(#iyf)"/>
<path d="M1385 390l18 80 68 15-62 38-10 72-52-48-72 18 38-62-35-62 72 12z" fill="#f8f020" stroke="#2a2a2a" stroke-width="12" stroke-linejoin="miter"/>
</g>
</svg>
<!-- icons6.html -->
<svg class="a" style="left:0;top:0" width="1920" height="1080" viewBox="0 0 1920 1080">
<g transform="translate(15 742) scale(0.13541)" filter="url(#isoft)">
<path d="M40 70v240" stroke="#a0a0a0" stroke-width="8"/><path d="M70 230h230" stroke="#d8d8d8" stroke-width="16"/><rect x="152" y="142" width="106" height="96" fill="#e4e4e4" stroke="#9c9c9c" stroke-width="12"/><path d="M70 190h60M95 165l-28 25 28 25" fill="none" stroke="#9c9c9c" stroke-width="12"/>
<path d="M340 158l40 33l-40 33z" fill="#0a0a0a"/>
<ellipse cx="570" cy="255" rx="110" ry="30" fill="#c4cac8"/>
<path id="tcv" d="M492 232A88 88 0 1 1 560 276" fill="none"/>
<text font-family="Liberation Sans,sans-serif" font-weight="bold" font-size="50" fill="#111" letter-spacing="4"><textPath href="#tcv">Text on a Curve</textPath></text>
<text x="826" y="162" font-family="Liberation Sans,sans-serif" font-weight="bold" font-size="118" fill="#050505" textLength="240" lengthAdjust="spacingAndGlyphs">Nes</text>
<text x="830" y="288" font-family="Liberation Sans,sans-serif" font-weight="bold" font-size="118" fill="#050505" textLength="82" lengthAdjust="spacingAndGlyphs">ti</text>
<text x="918" y="240" font-family="Liberation Sans,sans-serif" font-weight="bold" font-size="118" fill="#050505" textLength="150" lengthAdjust="spacingAndGlyphs">ng</text>
<path d="M1240 260h200l30-45h-60z" fill="#d4d4d4"/><rect x="1237" y="117" width="182" height="160" fill="#dedede" stroke="#b0b0b0" stroke-width="13"/><rect x="1290" y="160" width="90" height="70" fill="none" stroke="#b4b4b4" stroke-width="12"/><path d="M1240 230h180M1380 120v160" stroke="#b8b8b8" stroke-width="10"/>
<path d="M1500 158l40 33l-40 33z" fill="#0a0a0a"/>
<ellipse cx="1720" cy="245" rx="115" ry="20" fill="#d8d8d8"/><rect x="1600" y="110" width="130" height="95" fill="#ececec" stroke="#a4a4a4" stroke-width="11"/><circle cx="1740" cy="215" r="68" fill="#e4e4e4" stroke="#a4a4a4" stroke-width="11"/><path d="M1680 215h120M1740 160v110" stroke="#c8c8c8" stroke-width="7"/>
<path d="M1890 158l40 33l-40 33z" fill="#0a0a0a"/>
<ellipse cx="170" cy="590" rx="100" ry="22" fill="#dcdcdc"/><path d="M75 465l80-35 85 25v95l-95 55-75-50" fill="none" stroke="#b4b4b4" stroke-width="11"/>
<path d="M340 492l40 33l-40 33z" fill="#0a0a0a"/>
<clipPath id="cwv"><rect x="425" y="385" width="278" height="275"/></clipPath><g clip-path="url(#cwv)"><path d="M425 400q35 35 75 10t75-30 75 10 50 25M425 442q35 35 75 10t75-30 75 10 50 25M425 484q35 35 75 10t75-30 75 10 50 25M425 526q35 35 75 10t75-30 75 10 50 25M425 568q35 35 75 10t75-30 75 10 50 25M425 610q35 35 75 10t75-30 75 10 50 25M425 652q35 35 75 10t75-30 75 10 50 25" fill="none" stroke="#3a3a3a" stroke-width="12"/></g>
<path d="M565 440l28 55 62 5-45 42 15 62-58-32-55 32 12-62-42-42 60-8z" fill="#f0f0f0" stroke="#c82028" stroke-width="11"/>
<ellipse cx="960" cy="620" rx="110" ry="26" fill="#e0e0e0"/><path d="M930 395q-100 60-80 170 40 80 130 70M980 640q90-50 80-150-20-80-120-90M930 395q50 60 10 130-30 60 40 115M900 470q-30 80 50 150M1000 420q50 70 0 160" fill="none" stroke="#b4b4b4" stroke-width="10"/>
</g>
</svg>
<!-- icons7.html -->
<svg class="a" style="left:0;top:0" width="1920" height="1080" viewBox="0 0 1920 1080">
<defs><radialGradient id="igold" cx=".4" cy=".3" r=".8"><stop offset="0" stop-color="#fff0a8"/><stop offset=".5" stop-color="#e8b840"/><stop offset="1" stop-color="#b88420"/></radialGradient>
<linearGradient id="ibar" x1="0" y1="0" x2="1" y2="1"><stop offset="0" stop-color="#e8d888"/><stop offset="1" stop-color="#c8a848"/></linearGradient>
<linearGradient id="ilav" x1="0" y1="0" x2="1" y2="0"><stop offset="0" stop-color="#9c9ce8"/><stop offset=".45" stop-color="#e8e8ff"/><stop offset=".55" stop-color="#d4d4e0"/><stop offset="1" stop-color="#b0b0e0"/></linearGradient></defs>
<g transform="translate(15 866) scale(0.13541)" filter="url(#isoft)">
<path d="M35 105q10-25 45-20h50l10 15-30 40h-70z" fill="#1a5a60"/><path d="M50 120h70l-15 20h-60z" fill="#40b0a0"/><path d="M140 95q25-5 25 30M150 125l18 10 5-22" fill="none" stroke="#222" stroke-width="9"/>
<ellipse cx="170" cy="275" rx="120" ry="26" fill="#cfcfcf"/><path d="M40 245q0-50 60-55 40-10 100 0 10-30 50-25 40 20 40 60-40 20-80 20-30 50-90 50-70-5-80-50z" fill="url(#igold)"/><circle cx="240" cy="205" r="38" fill="#d8a840"/><ellipse cx="110" cy="235" rx="55" ry="28" fill="#f0d078"/>
<path d="M340 168l40 33l-40 33z" fill="#0a0a0a"/>
<path d="M425 165l70-50 190 110-75 55z" fill="url(#ibar)"/><path d="M425 165l185 115v12l-185-110z" fill="#b89838"/><path d="M610 280l75-55v14l-75 53z" fill="#a88828"/>
<path d="M725 168l40 33l-40 33z" fill="#0a0a0a"/>
<ellipse cx="955" cy="290" rx="110" ry="22" fill="#d0d0d0"/><path d="M850 270q60-10 100-75 45 65 105 75-100 40-205 0z" fill="url(#igold)"/><path d="M855 150q40-30 60-30l35-45 40 45q50 10 70 35-50 30-100 20-60 10-105-25z" fill="url(#igold)"/><path d="M950 170v70" stroke="#333" stroke-width="7"/><circle cx="950" cy="245" r="9" fill="#222"/>
<ellipse cx="1350" cy="300" rx="100" ry="22" fill="#c8c8c8"/><ellipse cx="1345" cy="120" rx="88" ry="55" fill="url(#igold)"/><path d="M1262 260q-10-50 40-70 40-15 85 0 45 20 40 70-10 40-85 45-70-5-80-45z" fill="#e8a860"/><path d="M1290 250l20-30 20 30 20-30 20 30" fill="none" stroke="#f8d8a8" stroke-width="9"/><path d="M1345 170v60" stroke="#333" stroke-width="7"/><circle cx="1345" cy="232" r="9" fill="#222"/>
<ellipse cx="1740" cy="300" rx="110" ry="20" fill="#c8c8c8"/><path d="M1625 120q30-40 70-30 30-30 70-5 40-30 65 20-10 50-60 45-40 40-90 15-50-10-55-45z" fill="#e8a848"/><path d="M1630 250q30-40 70-35 40-20 70 0 50-10 70 35-20 40-70 35-50 30-90 5-40-5-50-40z" fill="#e4dcc8"/><path d="M1730 190v70" stroke="#1a2a4a" stroke-width="8"/><path d="M1718 205l12-18 12 18zM1718 250l12 18 12-18z" fill="#1a2a4a"/>
<path d="M250 460q-60-30-100 10-30 40 30 80 50 40 10 80-50 30-100-10" fill="none" stroke="#b8b8b8" stroke-width="34" stroke-linecap="round"/><path d="M250 455q-60-30-100 10-30 40 30 80 50 40 10 80-50 30-100-10" fill="none" stroke="#f0f0f0" stroke-width="18" stroke-linecap="round"/>
<ellipse cx="568" cy="525" rx="130" ry="115" fill="#e4e4e4" stroke="#c8c8c8" stroke-width="8"/><path d="M470 470q100-80 200 0M470 580q100 80 200 0M480 440q-40 90 0 170M655 440q40 90 0 170M500 500h140M500 550h140M540 430v190M600 430v190" fill="none" stroke="#cacaca" stroke-width="9"/>
<path d="M880 420l30-20 95 45-25 35-85-20z" fill="#f0d830"/><path d="M930 440l30 8v22l-30-6z" fill="#a88818"/>
<ellipse cx="950" cy="630" rx="100" ry="18" fill="#c4c4c4"/><path d="M850 550l110-40 80 70-100 50z" fill="#38487c"/><path d="M850 550l90 80v25l-90-80zM940 630l100-50v25l-100 50z" fill="#28345c"/><path d="M915 545l15 45 50-15-8-25-40 12" fill="none" stroke="#f0d030" stroke-width="13"/>
<path d="M1115 500l40 33l-40 33z" fill="#0a0a0a"/>
<ellipse cx="1335" cy="640" rx="100" ry="16" fill="#c8c8c8"/><path d="M1245 455l85-45 85 45-85 45z" fill="#f4d020"/><ellipse cx="1328" cy="445" rx="28" ry="14" fill="#e02818"/><path d="M1245 590l85-45 85 45-85 55z" fill="#f4d020"/><path d="M1300 585q28-35 56 0z" fill="#701010"/><path d="M1328 500v50" stroke="#222" stroke-width="8"/><path d="M1314 540l14 18 14-18z" fill="#222"/>
<path d="M1505 500l40 33l-40 33z" fill="#0a0a0a"/>
<rect x="1590" y="405" width="275" height="252" fill="url(#ilav)"/><path d="M1590 630h275v27h-275z" fill="#8888d8"/><path d="M1640 520v-50q0-60 80-60t80 60v20" fill="none" stroke="#f0e020" stroke-width="28"/><path d="M1765 480h75l-38 55z" fill="#f0e020" stroke="#a89808" stroke-width="5"/><path d="M1625 510h32" stroke="#a89808" stroke-width="8"/>
</g>
</svg>
<!-- icons8.html -->
<svg class="a" style="left:0;top:0" width="1920" height="1080" viewBox="0 0 1920 1080">
<defs><radialGradient id="istar" cx=".5" cy=".4" r=".7"><stop offset="0" stop-color="#a8a8f0"/><stop offset="1" stop-color="#6060c0"/></radialGradient>
<linearGradient id="icyl" x1="0" y1="0" x2="0" y2="1"><stop offset="0" stop-color="#c8c8f4"/><stop offset="1" stop-color="#8888d0"/></linearGradient>
<linearGradient id="ired" x1="0" y1="0" x2="1" y2="1"><stop offset="0" stop-color="#e89080"/><stop offset="1" stop-color="#b03828"/></linearGradient>
<radialGradient id="iimg" cx=".5" cy=".5" r=".7"><stop offset="0" stop-color="#d8e0f0"/><stop offset="1" stop-color="#5868a0"/></radialGradient>
<clipPath id="crow4"><rect x="0" y="370" width="1920" height="97"/></clipPath></defs>
<g transform="translate(15 958) scale(0.13541)" filter="url(#isoft)">
<path d="M50 230h250" stroke="#b4b4b4" stroke-width="26" stroke-linecap="round"/><path d="M175 55l45 85 90 10-65 70 20 85-90-45-85 45 15-85-65-70 95-10z" fill="url(#istar)"/><circle cx="175" cy="150" r="45" fill="#c8c8fc"/>
<path d="M430 160v-35h65q0-70 70-70t70 70h65v35" fill="none" stroke="#3a3a3a" stroke-width="9"/>
<path d="M435 265h250" stroke="#b0b0b0" stroke-width="30" stroke-linecap="round"/><path d="M460 190l90-50q60-10 110 30l30 50-110 60q-70-10-120-90z" fill="url(#icyl)"/><path d="M430 225l130 70 20-15-125-70z" fill="#e0e0f8"/><path d="M490 270q20-80 120-110" fill="none" stroke="#e02838" stroke-width="8"/>
<path d="M815 150q30-40 70-40 120-10 185 80l-35 80q-40-80-120-85-50-5-80 10z" fill="url(#ired)"/><path d="M815 150l30 40q40-20 90 0 60 20 100 80l-20 5q-60-70-130-60-40 0-60 10z" fill="#f0d8a0"/>
<path d="M1115 152l40 33l-40 33z" fill="#0a0a0a"/>
<path d="M1445 240l30-10v60l-30 10z" fill="#9a9a9a"/><rect x="1215" y="70" width="232" height="228" fill="url(#iimg)"/><rect x="1215" y="70" width="232" height="228" fill="none" stroke="#4858a0" stroke-width="6"/><path d="M1250 260q20-120 80-170 60 50 90 170M1290 180q40-40 80 0M1260 230q70 40 150 0" fill="none" stroke="#8898c8" stroke-width="9"/>
<path d="M1600 240h250" stroke="#b0b0b0" stroke-width="18" stroke-linecap="round"/><path d="M1590 200l140-60 130 60-130 85z" fill="#c8c8f0"/><path d="M1600 215l130 60 120-65v15l-120 65-130-60z" fill="#a0a0d8"/><path d="M1640 150l30-50 100-30 45 90-60 80-110-20z" fill="#f4e838" stroke="#c8b818" stroke-width="5" stroke-dasharray="12 6"/>
<g clip-path="url(#crow4)">
<path d="M60 465q40-30 80-45 30-20 60-10l50 30 20 25z" fill="#d01818"/>
<path d="M445 388h245l-20 90h-205z" fill="#e0e0e0" stroke="#a8a8a8" stroke-width="9"/><path d="M470 430h190M520 395v80M610 395v80" stroke="#b4b4b4" stroke-width="12"/>
<path d="M850 475l100-95q20-10 40 0l100 95z" fill="#9898e8"/><path d="M930 400l25-20 30 20 20 70h-90z" fill="#c8c8fc"/>
<ellipse cx="1325" cy="490" rx="115" ry="95" fill="#2878c8"/><path d="M1230 470q95-80 190 0M1250 440l150 40M1400 440l-150 40M1325 395v80" fill="none" stroke="#a8d0f0" stroke-width="7"/>
<path d="M1590 470q30-50 90-60l110 20 0 40z" fill="#f0e020"/><path d="M1680 395l30 50 40-40 10 60h-90z" fill="#4078c0"/>
</g>
</g>
</svg>
<!-- icons9.html -->
<svg class="a" style="left:0;top:0" width="1920" height="1080" viewBox="0 0 1920 1080">
<defs><radialGradient id="ibulb" cx=".45" cy=".35" r=".7"><stop offset="0" stop-color="#fffbe0"/><stop offset=".5" stop-color="#ffd850"/><stop offset="1" stop-color="#e89010"/></radialGradient>
<linearGradient id="ibin" x1="0" y1="0" x2="1" y2="0"><stop offset="0" stop-color="#4a90e8"/><stop offset=".5" stop-color="#88c0f8"/><stop offset="1" stop-color="#3a78d0"/></linearGradient>
<linearGradient id="igsq" x1="0" y1="0" x2="0" y2="1"><stop offset="0" stop-color="#8e8e8e"/><stop offset="1" stop-color="#f4f4f4"/></linearGradient>
<linearGradient id="iup" x1="0" y1="0" x2="0" y2="1"><stop offset="0" stop-color="#2058c8"/><stop offset="1" stop-color="#0c2c88"/></linearGradient></defs>
<g transform="translate(1585 115) scale(0.16667)" filter="url(#isoft)">
<path d="M75 119h45l22.5 -18.9h-30z" fill="#a8a8a8" opacity=".8"/><path d="M45 35h41.25l33.75 31.5v73.5h-75z" fill="url(#ipg)"/><path d="M86.25 35l33.75 31.5h-31.5z" fill="#eef2fa"/>
<path d="M275 53q2-12 14-14h25l10 10h35q6 0 6 8v45l-90 25z" fill="#f4d90c"/><path d="M285 125q-6-22 8-34 8-8 22-8l75-3q6 4 0 12l-18 28z" fill="url(#ifl)"/>
<path d="M598 130h20l14-10h-20z" fill="#aaa"/><rect x="510" y="45" width="88" height="85" rx="5" fill="url(#isv)"/><rect x="527.6" y="46" width="52.8" height="42.5" fill="#e6e8ee"/><rect x="533.76" y="97.7" width="44" height="32.3" fill="#ccd2de"/><rect x="540.8" y="104.5" width="12" height="22.1" rx="3" fill="#2456b8"/>
<path d="M745 35l6 4 5-5 6 5 6-4 6 4 40 70 20 8-14 14-70-4 6-8-8-8 8-8-8-8 8-8-8-8 8-8-8-8 8-8z" fill="#c8a070"/><path d="M775 50l30 55 20 30" fill="none" stroke="#a88050" stroke-width="6"/><path d="M835 130l14-12 10 14z" fill="#a0a0a0"/>
<path d="M1075 130l25-30-5 40z" fill="#a4a4a4"/><rect x="987" y="40" width="92" height="95" fill="url(#igsq)"/>
<path d="M1245 90h85l12 52h-100z" fill="#9090d8"/><rect x="1220" y="40" width="62" height="80" fill="#b8a860"/><path d="M1223.1 120q2-56 18.6-72q21.7-2 34.1 24q4 32 6.2 48z" fill="#1c1206"/><ellipse cx="1249.14" cy="70.4" rx="9.92" ry="16" fill="#d8a868"/><path d="M1235.5 120q15.5-28 31 0z" fill="#c08840"/>
<path d="M1480 63h66l-8 72q-25 10-50 0z" fill="url(#ibin)"/><ellipse cx="1513" cy="61" rx="35" ry="12" fill="#b8dcfc" stroke="#3a78d0" stroke-width="5"/>
<rect x="1687" y="27" width="126" height="122" fill="#fafafa" stroke="#c8c8c8" stroke-width="4"/><path d="M1687 149V27h126" fill="none" stroke="#9a9a9a" stroke-width="4"/><circle cx="1734.88" cy="88" r="30" fill="url(#ibulb)"/><path d="M1719.88 110.5h30l-3 15h-24z" fill="#f0a020"/><rect x="1722.28" y="125.5" width="25.2" height="15" fill="#281408"/><circle cx="1772.68" cy="75.8" r="32" fill="url(#ibulb)"/><path d="M1756.68 99.8h32l-3 16h-25.6z" fill="#f0a020"/><rect x="1759.24" y="115.8" width="26.88" height="16" fill="#281408"/>
<rect x="60" y="220" width="120" height="120" fill="#b8a860"/><path d="M66 340q2-84 36-108q42-2 66 36q4 48 12 72z" fill="#1c1206"/><ellipse cx="116.4" cy="265.6" rx="19.2" ry="24" fill="#d8a868"/><path d="M90 340q30-42 60 0z" fill="#c08840"/>
</g>
<g transform="translate(1585 245) scale(0.16667)" filter="url(#isoft)">
<path d="M75 139h45l22.5 -18.9h-30z" fill="#a8a8a8" opacity=".8"/><path d="M45 55h41.25l33.75 31.5v73.5h-75z" fill="url(#ipg)"/><path d="M86.25 55l33.75 31.5h-31.5z" fill="#eef2fa"/>
<path d="M245 78q2-12 14-14h25l10 10h35q6 0 6 8v45l-90 25z" fill="#f4d90c"/><path d="M255 150q-6-22 8-34 8-8 22-8l75-3q6 4 0 12l-18 28z" fill="url(#ifl)"/>
<path d="M536 153h20l14-10h-20z" fill="#aaa"/><rect x="448" y="68" width="88" height="85" rx="5" fill="url(#isv)"/><rect x="465.6" y="69" width="52.8" height="42.5" fill="#e6e8ee"/><rect x="471.76" y="120.7" width="44" height="32.3" fill="#ccd2de"/><rect x="478.8" y="127.5" width="12" height="22.1" rx="3" fill="#2456b8"/>
<path d="M660 55l6 4 5-5 6 5 6-4 6 4 40 70 20 8-14 14-70-4 6-8-8-8 8-8-8-8 8-8-8-8 8-8-8-8 8-8z" fill="#c8a070"/><path d="M690 70l30 55 20 30" fill="none" stroke="#a88050" stroke-width="6"/><path d="M750 150l14-12 10 14z" fill="#a0a0a0"/>
<path d="M862 92l58-38 60 30-58 40z" fill="#8080e0"/><path d="M862 140l58-30 60 25-58 38z" fill="#c01818"/><path d="M905 128l18-16 18 14-18 18z" fill="#f8d020"/>
<rect x="1088" y="55" width="78" height="115" fill="#8ca4d0"/><circle cx="1128" cy="105" r="28" fill="url(#ibulb)"/><path d="M1114 126h28l-3 14h-22.4z" fill="#f0a020"/><rect x="1116.24" y="140" width="23.52" height="14" fill="#281408"/>
<rect x="1285" y="62" width="108" height="102" fill="#060606"/><ellipse cx="1338" cy="128" rx="40" ry="28" fill="#8a8a8a"/><rect x="1315" y="68" width="46" height="32" fill="#c8c8c8"/><path d="M1370 85h16M1378 85v18" stroke="#fff" stroke-width="5"/>
<path d="M1508 83h66l-8 72q-25 10-50 0z" fill="url(#ibin)"/><ellipse cx="1541" cy="81" rx="35" ry="12" fill="#b8dcfc" stroke="#3a78d0" stroke-width="5"/>
<rect x="1687" y="50" width="126" height="122" fill="#fafafa" stroke="#c8c8c8" stroke-width="4"/><path d="M1687 172V50h126" fill="none" stroke="#9a9a9a" stroke-width="4"/><circle cx="1734.88" cy="111" r="30" fill="url(#ibulb)"/><path d="M1719.88 133.5h30l-3 15h-24z" fill="#f0a020"/><rect x="1722.28" y="148.5" width="25.2" height="15" fill="#281408"/><circle cx="1772.68" cy="98.8" r="32" fill="url(#ibulb)"/><path d="M1756.68 122.8h32l-3 16h-25.6z" fill="#f0a020"/><rect x="1759.24" y="138.8" width="26.88" height="16" fill="#281408"/>
<path d="M105 290q20-45 75-48 50 5 70 75l-25 20q-20-60-60-62-30 5-35 30z" fill="#d8c078"/><path d="M108 300q30-30 70-15l45 50h-110z" fill="#8888c8"/><path d="M105 358h50M130 335v48" stroke="#111" stroke-width="7"/>
<rect x="1687" y="243" width="126" height="128" fill="#e4e4e4" stroke="#f8f8f8" stroke-width="5"/><path d="M1687 371V243h126" fill="none" stroke="#a4a4a4" stroke-width="4"/><circle cx="1750" cy="295" r="34" fill="url(#ibulb)"/><path d="M1733 320.5h34l-3 17h-27.2z" fill="#f0a020"/><rect x="1735.72" y="337.5" width="28.56" height="17" fill="#281408"/>
<rect x="1602" y="430" width="90" height="88" rx="10" fill="url(#iup)"/>
<path d="M1647 500v-50M1623 475l24-26 24 26" fill="none" stroke="#fff" stroke-width="12"/>
<rect x="1738" y="430" width="90" height="88" rx="10" fill="url(#iup)"/>
<path d="M1783 448v50M1759 474l24 26 24-26" fill="none" stroke="#fff" stroke-width="12"/>
</g>
</svg>
</body></html>
